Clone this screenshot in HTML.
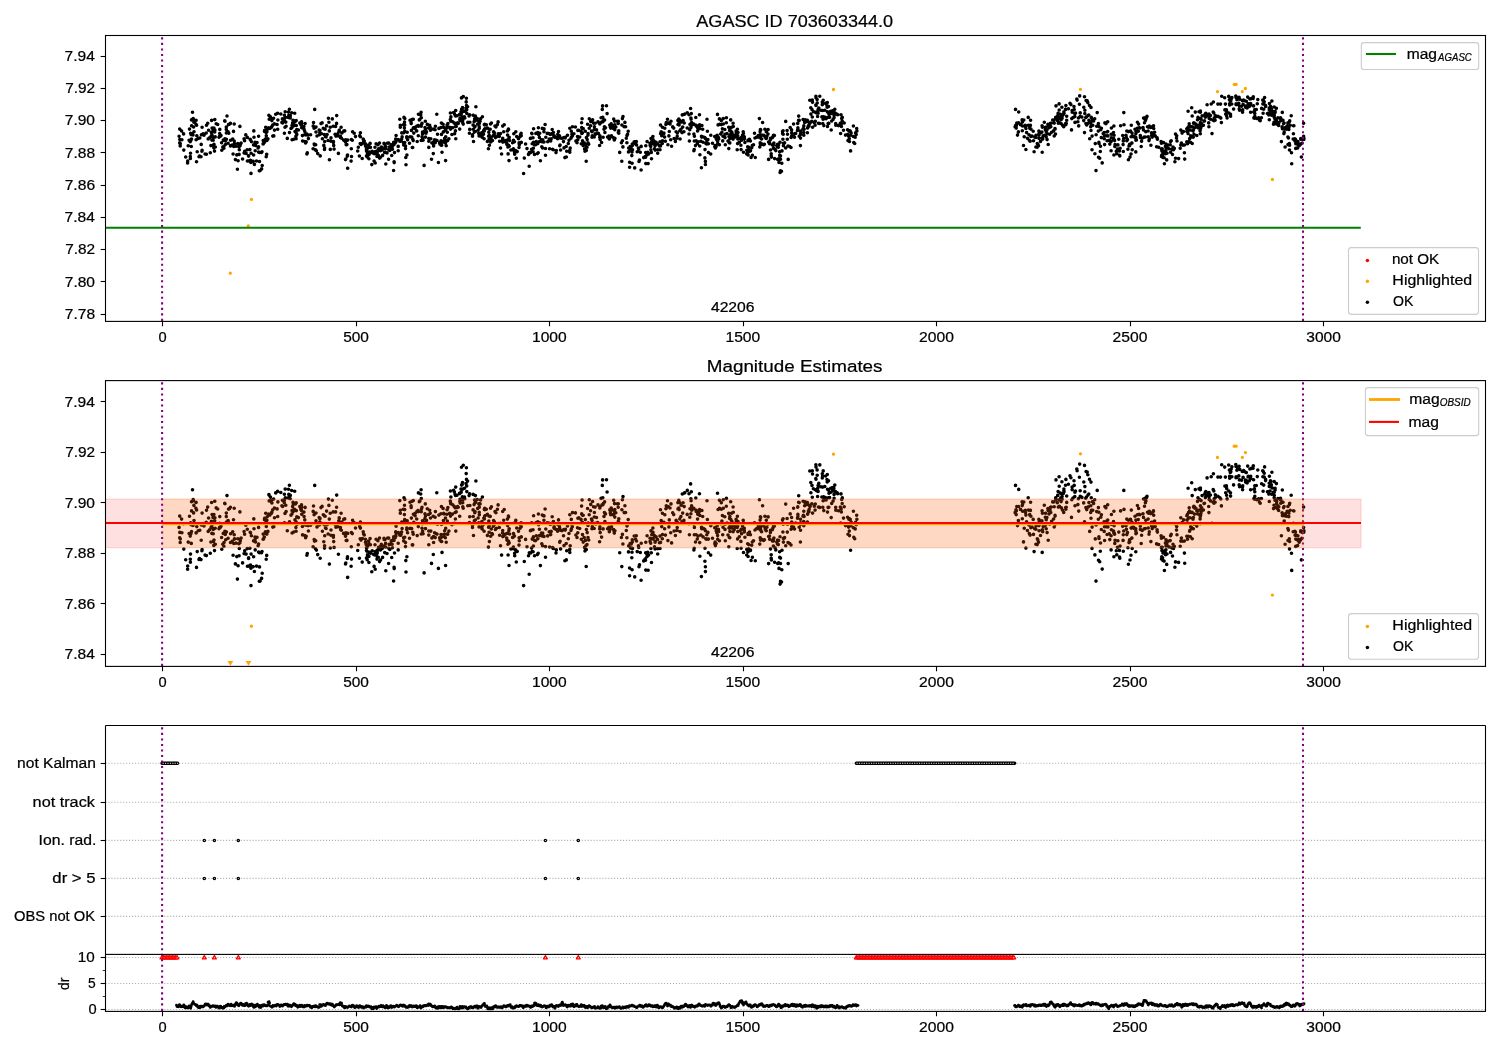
<!DOCTYPE html><html><head><meta charset="utf-8"><style>html,body{margin:0;padding:0;background:#fff;overflow:hidden}svg{display:block;-webkit-font-smoothing:antialiased;will-change:transform}text{font-family:"Liberation Sans", sans-serif;fill:#000;stroke:#000;stroke-width:0.22px}</style></head><body>
<svg width="1500" height="1050" viewBox="0 0 1500 1050">
<rect width="1500" height="1050" fill="#fff"/>
<defs><clipPath id="c1"><rect x="105.5" y="35.5" width="1380.0" height="285.9"/></clipPath></defs>
<g clip-path="url(#c1)">
<path d="M179.1 136.2h0M179.7 142.9h0M179.7 129.1h0M179.8 139.5h0M180.2 145.9h0M180.3 143.7h0M181.6 131h0M181.9 139.7h0M183.6 133.9h0M183.8 150.1h0M185.7 157h0M187.6 163h0M187.7 161h0M188.2 145.7h0M189.1 140.2h0M189.5 129.1h0M190.2 141.8h0M190.3 156.6h0M190.4 158.5h0M190.5 153.3h0M190.6 133.3h0M190.9 140.3h0M191.1 134.6h0M191.3 146.5h0M191.5 119.9h0M191.5 139h0M191.6 125.7h0M192.3 134.1h0M192.5 112.2h0M193 135h0M193.2 118.5h0M193.3 119.2h0M193.6 127h0M193.9 122.2h0M194 131.8h0M195.9 124.1h0M196.1 139.8h0M196.1 120.3h0M196.5 161.8h0M196.6 125.2h0M196.8 135.8h0M197.2 151.7h0M198.2 138.4h0M199 156.7h0M199.5 156.1h0M199.8 138h0M201 156.8h0M201.2 144.4h0M201.4 134.7h0M201.9 151.2h0M202.1 127.2h0M202.1 150.4h0M203.1 133.8h0M204 135.3h0M205.1 154h0M206.2 133h0M206.4 154.3h0M206.5 125.3h0M207.7 123.3h0M208.2 138.9h0M208.6 130.3h0M209.6 137.8h0M210.3 152.8h0M210.9 145.6h0M211.1 136.2h0M211.4 132.4h0M211.6 120.4h0M211.9 134.7h0M211.9 140.1h0M212.1 128.1h0M213 129.9h0M213 136.8h0M213.1 129.9h0M213.2 140.3h0M213.3 137.5h0M213.4 145.3h0M213.8 147.8h0M213.9 128.1h0M214 144.4h0M214.5 151.1h0M214.7 132h0M214.8 119.6h0M214.9 130.1h0M215.2 136.9h0M215.3 147h0M216.2 123.8h0M217.7 124.5h0M219 137.2h0M219.6 136.3h0M219.7 133.6h0M219.8 129.4h0M220.4 136.2h0M221 135.5h0M221.6 142.7h0M221.8 150.2h0M222.8 147h0M223.3 140.1h0M223.9 148.3h0M224 146h0M224.7 120.9h0M224.9 138.8h0M225 121.2h0M225.3 140.8h0M225.7 144.2h0M226.3 129.4h0M226.3 127.1h0M226.4 132.9h0M226.4 139.2h0M227 116h0M227.8 132.6h0M228.1 143.2h0M228.1 131.8h0M228.5 124.6h0M228.8 133.3h0M229.4 124.3h0M230.4 123.4h0M230.5 145.9h0M230.6 140.3h0M232.1 145.1h0M232.7 139.1h0M233.1 154h0M233.5 131.4h0M233.8 146.5h0M234.2 124h0M234.2 141h0M234.4 143.7h0M234.5 143.6h0M235.4 159.6h0M236 146.3h0M236.8 154.9h0M237.4 169.3h0M237.8 143.5h0M238.1 160.8h0M238.9 146.8h0M239.1 154.4h0M239.3 149.8h0M239.9 126.4h0M239.9 146.1h0M240.3 144.8h0M241.1 143.1h0M242.6 159h0M244.1 138.9h0M244.1 153h0M244.6 140.7h0M244.7 151.2h0M245.8 134.9h0M246.1 153.4h0M247.2 149.8h0M247.3 137.4h0M247.4 161h0M248.6 156.1h0M248.6 155.7h0M248.8 161h0M249.9 149.6h0M250.2 139.4h0M250.5 139.8h0M250.5 160.3h0M250.9 162.4h0M251 173.4h0M251.1 153.3h0M251.4 141.6h0M253 161.4h0M253.1 161.4h0M253.6 144.9h0M253.6 155h0M253.8 130.9h0M254 137.2h0M254.4 164.4h0M255 142.4h0M255.2 150.7h0M255.4 143.3h0M255.5 145.5h0M256.5 161h0M257 142.6h0M258.1 147.9h0M258.6 136.2h0M258.6 152.1h0M258.6 146.9h0M259.3 170.7h0M259.4 152.5h0M259.5 161.5h0M260.1 170.6h0M261.5 152.5h0M261.6 168.9h0M262 151.7h0M262.2 165.5h0M263.1 143.9h0M263.2 140.6h0M263.5 143.6h0M264.3 142.5h0M264.5 131.4h0M264.6 130.5h0M265.4 139.1h0M265.7 127.2h0M266.2 156.7h0M266.2 132.6h0M266.3 135.7h0M266.3 140.4h0M266.7 154.2h0M266.9 140.5h0M266.9 131.7h0M267.2 129.5h0M267.9 138.9h0M268.7 127.7h0M268.9 115.2h0M269 115.6h0M269.2 119.3h0M269.9 128.4h0M270.4 116.9h0M270.7 119h0M271.4 119h0M271.5 127.2h0M271.8 126.6h0M271.9 120.6h0M272.7 125.1h0M272.8 136.1h0M273.6 118.2h0M273.8 135.9h0M274.4 123.9h0M274.5 130.1h0M275.7 114.3h0M277.1 124.5h0M277.6 113.3h0M277.7 129.3h0M277.9 120h0M280.8 114h0M281.9 122.4h0M282.4 118.9h0M282.6 122.9h0M284 119.7h0M284.3 120.5h0M284.4 133.3h0M284.4 115.2h0M284.5 118.6h0M285 127.3h0M285.2 111.8h0M285.3 117.4h0M285.8 122.1h0M286.1 126.2h0M287.3 138.4h0M288.3 117.4h0M288.5 112h0M288.8 115.2h0M289.3 116.3h0M289.4 109.3h0M289.5 132.6h0M290.2 118h0M290.3 115.9h0M291 128.5h0M291.7 112.7h0M292 125.5h0M292 127.6h0M292.1 139.8h0M292.6 123h0M293 120.3h0M293.3 121.4h0M293.3 121h0M293.5 121h0M293.8 125.8h0M293.8 139.2h0M294.4 124.7h0M294.6 121.2h0M294.7 113.2h0M295 131.5h0M295.4 121.3h0M295.9 136.4h0M296.1 138.8h0M296.2 132.9h0M296.2 120.6h0M296.3 125.5h0M296.8 129.5h0M296.8 134.4h0M298.4 130h0M299.8 123h0M300.7 124.2h0M301 125h0M301.5 121.9h0M301.5 125.4h0M301.6 123.4h0M301.7 127.8h0M302.4 135.6h0M302.6 141h0M303.9 126.5h0M304.1 129.4h0M304.8 131.5h0M304.9 134.6h0M304.9 141.5h0M305.1 123.5h0M305.6 142.9h0M306 134.9h0M306.2 141.9h0M306.9 154h0M306.9 134.1h0M307.3 152.9h0M308.1 135.1h0M308.4 138.6h0M310.6 134.8h0M313.1 148.7h0M313.2 126.1h0M313.5 122.6h0M314.1 128.2h0M314.2 144.1h0M314.5 145h0M314.7 109.4h0M315.5 149.9h0M315.7 144.8h0M316 132h0M316 127.1h0M316.4 150.8h0M317 136h0M317.7 153.6h0M319.2 130h0M319.4 134.7h0M319.8 132.8h0M319.9 130.7h0M320 130.5h0M320.2 155.9h0M321 123.6h0M321.3 133.6h0M322.1 122.9h0M322.4 138.8h0M323.3 128.2h0M323.8 145.4h0M324.2 134.6h0M324.5 128.9h0M324.5 149.5h0M324.6 148.1h0M324.7 141.6h0M325.1 129.2h0M325.5 136.7h0M326.1 137h0M326.6 125.9h0M327.1 134.6h0M328.1 140.5h0M328.4 118.2h0M328.9 122.2h0M329.3 130.9h0M329.4 159.7h0M330.2 127.2h0M330.3 149.4h0M330.9 141.3h0M331 137.9h0M332.3 118.9h0M333.2 126.3h0M333.4 141.5h0M333.4 142.6h0M333.7 145.4h0M334.1 149.1h0M335.1 134.2h0M335.6 126.4h0M335.9 136.1h0M336.6 123.4h0M336.7 115.6h0M336.9 135.1h0M337.6 134.1h0M338 135.9h0M338.4 153.4h0M338.8 132h0M339.2 130.2h0M339.3 130.4h0M340.4 136.3h0M340.6 137.7h0M341.1 127.2h0M341.3 138.1h0M341.9 132.9h0M343.6 140.1h0M343.8 131.1h0M344.7 130.9h0M345.2 140.6h0M345.5 141.9h0M345.5 159.6h0M345.8 159h0M345.9 139.8h0M346.2 144.7h0M346.9 144.6h0M347.3 156.1h0M347.5 155.1h0M347.6 168.3h0M347.7 140.1h0M347.7 168.2h0M351.1 161.1h0M351.3 148.7h0M351.4 139.6h0M351.5 156.5h0M352.3 140.2h0M352.6 131.7h0M354.2 133.3h0M355.5 136.6h0M357.7 151h0M358.3 147.3h0M359.4 156h0M359.7 135.7h0M360.2 143.6h0M360.4 132.8h0M360.4 136.7h0M361 144.4h0M362.2 158.5h0M362.4 143.4h0M363.2 139.1h0M363.6 140.5h0M364.3 141.1h0M365.4 143.8h0M365.5 145.8h0M366.2 147.2h0M366.5 155.9h0M366.5 151h0M366.5 149.3h0M367 151.5h0M367.1 149h0M367.2 156.9h0M367.5 148h0M367.5 153.8h0M367.6 154.2h0M367.9 147.8h0M368.6 145h0M368.9 154.8h0M368.9 158.7h0M369 146.6h0M369.4 152.1h0M370.1 143.4h0M370.4 147.4h0M370.7 152.8h0M371.8 164.6h0M372.2 151.2h0M373.7 153.5h0M374.1 161.1h0M374.7 153.8h0M374.7 153.2h0M375 147.3h0M375.2 163h0M375.4 151.6h0M375.7 153.1h0M376.1 143.8h0M376.1 153.8h0M376.9 152h0M377 156.5h0M377.2 152.7h0M377.2 151.9h0M377.3 155h0M377.4 150.7h0M377.9 144.8h0M378.3 155.4h0M378.6 148.9h0M379.5 143h0M379.6 158.1h0M380.4 150.7h0M380.5 157.2h0M380.7 148.3h0M381.3 147.1h0M381.8 149.5h0M382 149.9h0M382.6 155.4h0M382.8 149.1h0M383 148.4h0M383.3 148.2h0M384 143.3h0M384.2 144h0M384.7 152.4h0M385 144h0M385.6 146.5h0M385.7 148.8h0M385.8 164h0M387 152.9h0M387.7 143.1h0M388.6 159.3h0M388.7 143.1h0M388.9 149.7h0M389.2 147.1h0M389.8 150.4h0M390.6 147h0M391.3 144.9h0M391.7 155.5h0M392.1 147h0M392.4 149.2h0M393.3 144.1h0M393.6 170.5h0M393.7 142.3h0M394 144.6h0M394.1 161.7h0M394.2 162.6h0M394.5 152.6h0M395.2 142.9h0M395.7 139.1h0M395.9 141.7h0M396.1 135.5h0M396.1 140.4h0M398.2 146.4h0M398.2 150.7h0M398.3 139.6h0M399.8 141.2h0M399.8 119.2h0M399.8 141h0M400.3 125.4h0M400.3 127.2h0M400.8 141.2h0M401.1 140.8h0M401.6 139.3h0M401.8 132.9h0M402.1 136.9h0M403.3 124.7h0M403.6 142.9h0M403.7 144.9h0M403.8 132.8h0M404 117.4h0M404.4 128.1h0M404.5 122.1h0M404.7 142.6h0M404.7 124.9h0M404.7 131.3h0M404.8 118.5h0M405.5 148.6h0M405.5 146h0M405.8 157.5h0M406 164.7h0M406.8 137.8h0M406.8 136.7h0M406.9 155h0M407.2 132.2h0M407.6 139.7h0M409.5 143.2h0M410 120.3h0M410.1 136.9h0M411.1 122.6h0M411.2 123.6h0M411.4 130.4h0M411.7 137h0M412 119.5h0M412.3 119.6h0M412.3 147.5h0M412.7 147.5h0M412.8 139.4h0M413.2 140.6h0M413.3 119.2h0M413.4 127.9h0M413.8 133.1h0M415.1 128.8h0M415.2 127.2h0M416.7 130.9h0M417 126.1h0M417.2 141.5h0M418.1 125.5h0M418.3 135.8h0M418.4 126.2h0M418.4 114.2h0M419.3 119.9h0M419.9 119.3h0M420.7 114.9h0M421.1 112.2h0M421.2 126.3h0M421.2 140.5h0M421.3 117.8h0M421.5 124.6h0M422 136.8h0M422 123.4h0M422.5 133.9h0M422.5 132.1h0M422.6 138.7h0M423.1 140.3h0M423.2 132.8h0M424.1 165.4h0M424.9 130.7h0M425 127.5h0M425.3 121.3h0M425.5 128.9h0M425.5 137.1h0M426 133.2h0M426.5 131.8h0M427.3 124.4h0M428.6 128h0M428.8 147.4h0M428.8 138.6h0M428.8 141.2h0M429.7 125.3h0M430.2 127.2h0M430.5 130.3h0M430.8 138.7h0M431.5 159.2h0M431.9 143h0M433.2 129.1h0M433.3 153.6h0M433.5 142.1h0M433.6 145.9h0M434.6 139.7h0M435.1 129.8h0M435.2 142.8h0M435.4 126.2h0M436.4 140.4h0M436.8 114.2h0M437 140.5h0M437.5 134.3h0M438.4 162.5h0M438.9 128.4h0M439.6 142.9h0M440 144.2h0M440.9 127.6h0M441 140.9h0M441.2 145.3h0M441.4 123h0M441.5 142.5h0M441.5 134.4h0M441.7 145.3h0M442 152.2h0M443.1 124.2h0M443.4 131.9h0M443.7 127.3h0M444 127.6h0M444 140.7h0M444.1 142.2h0M444.7 138.4h0M445.4 142.9h0M445.5 130.3h0M445.6 160.6h0M445.7 136.8h0M446.2 145.7h0M446.9 127.9h0M447 140.6h0M447.1 125h0M447.3 132.2h0M447.7 140.6h0M447.9 123.6h0M448.9 138.7h0M449.6 127.3h0M450.3 119.5h0M450.4 113h0M450.5 129.1h0M450.6 120.2h0M450.7 121.1h0M450.9 116.9h0M451.5 127.8h0M451.9 134.5h0M452.5 127.8h0M452.7 121.8h0M453.6 112.5h0M454.2 122.9h0M454.4 113.7h0M454.6 133.7h0M455.1 115.3h0M455.2 123.7h0M455.2 126.8h0M455.4 130.9h0M455.6 115.9h0M455.7 110.5h0M455.8 138.7h0M456.2 126.4h0M457 115.8h0M457.3 123.6h0M457.6 122.9h0M458.2 123.4h0M459.5 114.5h0M459.7 129.1h0M459.8 114.7h0M459.8 119.7h0M460 118.3h0M460.2 120.7h0M461 111.8h0M461.2 113.9h0M461.5 97.9h0M461.6 109.2h0M462.1 108.8h0M462.2 108.8h0M462.4 116.7h0M462.5 107.6h0M462.7 120.5h0M462.7 118.6h0M462.7 111.8h0M462.8 123.1h0M463.2 124.1h0M463.3 96.6h0M464.4 116.9h0M464.5 111.2h0M464.8 118h0M466 108.2h0M466.2 101.9h0M466.4 98.2h0M466.5 105.6h0M466.7 109.8h0M466.8 113.4h0M467.6 106.7h0M467.8 122.4h0M469.1 116h0M469.4 133.2h0M469.6 114.8h0M469.7 129.4h0M469.9 122.3h0M472.5 134.9h0M472.5 136.3h0M473.1 115.3h0M473.1 125.1h0M473.2 129.3h0M473.2 115.2h0M473.5 141.5h0M474.1 121.7h0M474.3 132.1h0M474.4 121.1h0M474.6 118.8h0M474.8 126.9h0M475 126.2h0M475.3 131.5h0M475.4 116h0M475.5 120.4h0M475.9 106.7h0M477.2 118.6h0M477.7 124.1h0M478.1 130.3h0M478.7 133.4h0M478.8 121.2h0M479.1 136h0M479.2 126.6h0M479.3 123.4h0M479.3 128.2h0M479.4 133.7h0M479.7 121.2h0M480.1 121.2h0M480.6 118.7h0M481.8 136.1h0M481.9 132.6h0M482.1 137.2h0M482.4 116.8h0M482.5 135h0M483.5 134.2h0M483.8 130.4h0M484.1 138.7h0M484.3 124.6h0M484.3 130.9h0M484.6 129.1h0M484.7 124.2h0M484.7 125h0M485.3 128.7h0M486.3 124.7h0M487.4 128h0M487.4 141.4h0M488.4 148.8h0M488.6 136.2h0M488.8 132.2h0M488.9 129h0M489.1 139.3h0M489.2 135.3h0M489.4 145.3h0M490.2 129.3h0M490.5 124h0M490.7 142h0M491.3 137.3h0M491.4 123h0M491.9 140.2h0M492.5 140.6h0M493.3 135.5h0M493.6 131.9h0M494.2 134.6h0M494.4 132.7h0M495 126.1h0M495.4 137.6h0M495.9 126.9h0M496.3 136.9h0M497.4 124.6h0M498.1 121.9h0M498.2 133.9h0M499.3 136.4h0M499.6 141.3h0M500.5 148h0M500.5 133.6h0M501.6 154h0M502.6 139.8h0M502.7 138.2h0M502.7 126.1h0M502.8 142.1h0M503.7 131.7h0M503.8 141.7h0M504.2 124.8h0M505.5 140.6h0M506.7 143.1h0M506.9 144.4h0M507.4 131h0M507.4 140h0M507.6 135.1h0M507.9 147h0M508.1 153.9h0M508.4 129.1h0M508.6 129.6h0M508.6 145.2h0M508.9 138.2h0M509 160.6h0M509.2 137.2h0M509.2 146.3h0M509.6 140.5h0M510.9 150h0M512.6 142.7h0M513.1 142.5h0M513.1 149.9h0M513.4 148.8h0M513.5 140.2h0M513.8 133.7h0M514.4 141.8h0M514.6 152.9h0M514.7 154.3h0M515.6 150.6h0M515.8 131.8h0M516.3 158.3h0M516.7 136.6h0M517.2 151.6h0M518.5 138.7h0M519 147.5h0M519.1 142.9h0M519.3 144.8h0M520.1 136.8h0M520.5 134.7h0M521.1 133.4h0M521.2 135.8h0M521.3 142.4h0M523.6 173.5h0M524.3 158.1h0M525.6 144h0M527 148.6h0M528.5 154.4h0M529.2 166.2h0M529.3 152.5h0M530.4 138.4h0M530.6 152.6h0M530.8 138.2h0M531.6 149.4h0M531.7 133.3h0M532 133.7h0M532.2 143.7h0M532.2 151.5h0M532.9 143.3h0M533 137.7h0M533.1 151.8h0M533.4 142.4h0M533.4 148.2h0M533.6 128.8h0M534.5 154.4h0M534.5 144.7h0M535.6 144.7h0M535.9 133.4h0M536.3 141.6h0M537.4 153.6h0M537.5 133.2h0M537.8 143.6h0M537.8 132.6h0M538.2 152.8h0M538.4 127.7h0M538.6 134.6h0M539.4 137.4h0M539.5 141.5h0M539.7 133.3h0M540.4 160.7h0M541.5 139.9h0M541.8 146.8h0M541.9 141.7h0M542.3 128.4h0M542.6 148h0M542.7 139.8h0M543.5 142h0M543.9 131.7h0M544 142h0M544 128.9h0M545.1 124.5h0M545.5 155.3h0M545.5 148.5h0M545.8 137.3h0M547.2 133.4h0M547.7 141.7h0M548.7 133.5h0M549.2 139h0M549.6 148.8h0M550.2 134.4h0M550.7 140.9h0M551.2 138.8h0M551.8 134h0M552 133.6h0M552.2 129.5h0M552.6 149.2h0M553.2 149.7h0M553.4 132.5h0M553.9 136.5h0M554.2 135.9h0M554.6 137.2h0M556 152.6h0M556.3 150.6h0M556.4 137.6h0M557.1 137.9h0M557.6 138.8h0M557.8 134.4h0M558.5 131.5h0M559.1 137.9h0M559.2 135.5h0M559.6 136.2h0M559.7 145.8h0M560.1 145.1h0M560.6 150h0M561.2 138.2h0M562.1 138.3h0M563.5 141.6h0M564 147.9h0M564 137.6h0M564.9 157.6h0M565.2 138h0M565.4 137.4h0M566.2 146.5h0M566.3 157h0M566.7 151.2h0M567.5 135.3h0M568.3 143.5h0M569 140.2h0M569.8 150.3h0M569.8 152.3h0M569.8 128.3h0M570.2 148h0M571 138.2h0M571.3 131.2h0M571.4 137.2h0M571.9 134.4h0M572.3 135.9h0M572.5 126.8h0M572.6 134h0M573.9 133.8h0M575.4 127h0M575.9 141.1h0M577 142.7h0M577.5 136.5h0M577.8 139.8h0M577.9 130.4h0M578.8 130.2h0M579.7 137h0M581 131.2h0M581.3 143.8h0M581.6 122.7h0M581.7 127.6h0M581.8 133.4h0M582.1 118.8h0M582.3 133h0M582.4 128.4h0M582.5 140.8h0M583.2 145.6h0M583.2 128.6h0M584.2 142.8h0M584.6 149.1h0M585 151.3h0M585.3 131.3h0M585.4 144.6h0M585.9 148h0M586.2 161.3h0M586.3 150.4h0M586.4 137.6h0M587 147.3h0M587.2 139.6h0M587.6 124.2h0M588 135.1h0M588 142.8h0M588.1 133.5h0M588.7 144.3h0M589.2 128.2h0M589.3 118.7h0M590.6 125.7h0M590.7 121.6h0M591.5 131h0M592 137.2h0M592 131.8h0M592.3 135.7h0M592.6 119.7h0M593.5 123.1h0M594.2 137h0M594.3 129.6h0M594.4 126.8h0M595.1 123.3h0M595.2 133.7h0M595.8 134.1h0M596.5 129.9h0M597.7 133.2h0M598 121.9h0M598.5 133.6h0M599.6 145.5h0M599.7 137.2h0M599.8 123.9h0M599.9 135.8h0M600.2 139.6h0M600.3 123h0M601.1 117.8h0M601.6 142.5h0M602 121.9h0M602.3 109.4h0M602.6 105.9h0M602.8 117.4h0M602.9 121.8h0M603.1 137.2h0M603.5 120.8h0M604 129.2h0M604.4 126.8h0M604.6 120h0M604.9 132.5h0M605.5 127.7h0M606.5 105.8h0M607.1 113.6h0M607.6 137.1h0M608.9 136.1h0M609.3 139h0M609.8 125.1h0M610.1 137.6h0M610.3 127h0M610.7 128.1h0M611.2 123.9h0M611.5 135.9h0M611.8 125.1h0M612.8 128.1h0M613.6 137.7h0M613.7 119h0M613.8 127.9h0M614.1 138.9h0M614.3 139.9h0M614.4 126.1h0M614.5 121.1h0M614.8 124.9h0M614.8 138.4h0M614.8 129.7h0M614.9 138.4h0M615.8 127h0M617.2 121.2h0M618.2 123.4h0M618.3 121.2h0M618.3 132.5h0M618.8 130.8h0M618.8 133.2h0M619.7 152.4h0M621.4 142.7h0M621.8 161.3h0M621.9 125h0M622.4 140.8h0M622.4 118.6h0M622.9 146.9h0M623 116.6h0M624.2 126.8h0M624.9 122.4h0M625.6 126.7h0M626.3 138.2h0M626.9 142.8h0M627 135.4h0M627.6 134.2h0M628.2 131.3h0M628.5 151.9h0M628.7 148.1h0M629.6 162.2h0M629.6 167.2h0M630.1 146.6h0M630.6 149.4h0M631.2 146.8h0M631.3 149.4h0M631.8 155.6h0M632 152.1h0M632.1 163.3h0M632.3 145.6h0M632.3 144.1h0M632.5 149.7h0M634.2 141.8h0M634.7 167.9h0M635.6 143.9h0M636.3 141.6h0M636.5 144.9h0M637.2 151.7h0M638.4 148h0M638.7 149.1h0M639 161.5h0M639.5 160.1h0M640.3 152.3h0M641.1 170h0M641.2 146.4h0M643.7 157.6h0M645.1 156.5h0M645.5 157.2h0M645.7 152.5h0M645.8 163.6h0M645.8 145.8h0M646.9 155h0M646.9 153.4h0M647.1 141.6h0M647.7 152.2h0M648.1 163.6h0M648.6 154h0M650 143.2h0M650.1 145.2h0M650.7 146.4h0M650.9 149.8h0M651 138.5h0M651.3 152.4h0M651.5 158.7h0M651.8 141h0M652 140.8h0M652.3 143.5h0M652.9 136.6h0M653 139.5h0M653 143.7h0M654.2 141.3h0M654.5 148.7h0M654.5 142.5h0M654.8 149.2h0M655.1 145.8h0M655.1 150.1h0M655.2 145.2h0M656.1 142.2h0M657.6 144h0M657.7 153.2h0M657.9 149.8h0M659.4 146h0M660 149.7h0M660 141.8h0M660.5 145.9h0M660.5 125h0M660.6 133.6h0M661.2 131.8h0M661.7 135.7h0M662.3 143.5h0M662.4 127.3h0M662.5 140.8h0M663.8 133.6h0M663.9 133.1h0M664.6 137.1h0M664.8 128.2h0M665.4 141.2h0M665.9 124.4h0M666.3 122.5h0M667.5 119.2h0M667.9 144.7h0M668 123.1h0M668.4 123.1h0M668.9 135.9h0M669.3 131.5h0M670 123.9h0M670.7 139.7h0M671 121.3h0M671.6 146.2h0M672.7 126.9h0M673.7 128.1h0M674.1 138.5h0M675.4 141.4h0M676.1 131.8h0M677 138.2h0M677.2 136.3h0M677.3 133h0M677.9 120.4h0M678 124.5h0M678 124.5h0M678.4 120.2h0M678.7 123.9h0M678.8 119h0M679.1 124.9h0M679.6 120.3h0M679.8 130.8h0M680.1 139h0M680.9 129.3h0M681.1 122.1h0M682 132.6h0M682.3 114.9h0M682.7 127.1h0M683.1 120.6h0M683.9 131.8h0M684.2 123h0M684.5 114.2h0M684.8 114.1h0M687.2 128h0M687.3 112.7h0M689 134h0M689 114.7h0M689.4 141h0M689.8 129.8h0M690 124.4h0M690.6 108.5h0M690.9 127.5h0M690.9 118h0M691.1 119.2h0M691.3 113.6h0M691.6 122.6h0M691.7 125.3h0M693.3 124.2h0M693.8 124.1h0M693.8 124.3h0M693.9 134.1h0M693.9 150.7h0M694.2 149.6h0M694.3 141h0M694.4 136.3h0M695.5 145.6h0M695.8 117.5h0M696.1 140.9h0M696.2 125.4h0M696.2 126.1h0M697.3 143.7h0M697.6 131h0M697.7 127.9h0M698.1 141.8h0M698.7 126.7h0M699.2 126.3h0M699.5 114.7h0M699.6 124.8h0M699.7 146h0M699.8 128.6h0M699.9 154.7h0M700.9 141.2h0M701.4 167.7h0M701.5 136.2h0M701.7 137.1h0M701.9 125.5h0M702.7 129.3h0M703.1 142.3h0M703.5 137h0M704.7 137.5h0M704.9 157.9h0M705 149.6h0M705.4 138.4h0M705.4 161.4h0M705.4 164.5h0M705.9 143.6h0M706.6 143.9h0M706.8 141h0M707 119.3h0M707.2 143.7h0M707.4 131.2h0M707.9 139.5h0M708.4 143.7h0M708.4 152.5h0M710.7 154h0M710.8 135.2h0M712.5 143.2h0M714.7 136.5h0M714.8 146.7h0M715.1 145.6h0M715.4 136.6h0M715.4 147.9h0M716.1 146.5h0M716.2 138.4h0M716.3 138.6h0M716.8 139.7h0M717.2 135.2h0M717.4 137.8h0M717.5 114.4h0M717.6 141.5h0M717.7 143.8h0M718.1 124.9h0M718.4 137.5h0M718.7 139h0M719.4 118.9h0M719.4 144.8h0M719.5 124.2h0M720.7 134h0M721.3 120.6h0M721.3 124.6h0M721.9 132.2h0M722.4 128.7h0M722.7 140.9h0M723 136.2h0M723.2 118.6h0M723.3 124h0M724.8 129.5h0M725 137.6h0M725.1 134.3h0M725.3 144.8h0M726.3 122.7h0M726.4 117.8h0M727 133.5h0M728 141.1h0M728.7 127.3h0M728.8 148.6h0M729 136.6h0M729.3 142.7h0M729.6 130.5h0M729.8 142.9h0M729.9 138.8h0M729.9 129.4h0M730.1 135.1h0M730.7 119.9h0M730.9 133.7h0M730.9 131.3h0M731.6 127.2h0M731.8 136.6h0M731.9 132.4h0M733 134.9h0M733.1 139.1h0M733.1 123.3h0M733.3 126.5h0M734.2 137.7h0M735.2 135.9h0M735.9 134.8h0M736.1 131h0M736.3 132.5h0M737.2 136.4h0M737.2 149.7h0M737.4 129.2h0M737.6 143.6h0M737.7 135.5h0M737.8 138.9h0M738 132.5h0M739.3 142.3h0M740.2 138.4h0M740.9 145.2h0M741.1 149.6h0M741.2 137.6h0M741.6 140.3h0M742.5 135.4h0M743.2 131.8h0M743.4 133.4h0M743.5 152.3h0M744.3 138.3h0M744.3 139.1h0M744.3 136.9h0M744.9 142.5h0M746.7 153.9h0M746.8 150.3h0M747.7 146.7h0M747.8 152h0M748 140.8h0M748.1 140.1h0M748.1 154.9h0M748.6 149.9h0M748.7 147.3h0M749 151.4h0M749.5 139.3h0M750.4 151h0M750.4 141h0M750.5 150.8h0M751.1 157.4h0M751.7 147.7h0M752.3 145.6h0M752.4 155.3h0M753.5 144.8h0M754.5 133.3h0M755 138h0M755.3 157.5h0M756.4 137.2h0M758.3 135.6h0M758.6 137.1h0M759.4 118.6h0M759.8 146.9h0M760.1 134.7h0M760.1 131.6h0M760.2 142.9h0M760.4 129.6h0M760.5 136.7h0M760.5 144.4h0M760.7 129.9h0M760.8 138.2h0M761.6 139h0M762 135.1h0M762.1 144.1h0M762.6 122.5h0M763.6 144.7h0M763.9 135.4h0M764.4 144.2h0M764.9 129.2h0M765.2 137.3h0M766.1 138.5h0M766.3 131.7h0M766.3 138.4h0M766.9 136.2h0M768 134.1h0M768.1 129.6h0M768.6 159.4h0M768.6 142.1h0M769.5 141.8h0M769.6 143.8h0M770.4 139.5h0M770.5 150h0M770.5 138.2h0M771.2 153.7h0M771.2 155.9h0M771.4 157.1h0M772.3 137.8h0M772.4 144.9h0M772.9 136.7h0M773.1 144.9h0M773.1 144h0M773.4 148.2h0M773.5 135.3h0M773.6 144.9h0M773.9 143.1h0M774.4 135.5h0M774.6 158.6h0M775.1 149.4h0M775.8 150.6h0M776.9 145.8h0M777.4 146.9h0M777.6 144.3h0M777.7 159.4h0M778.3 147.3h0M778.6 158.9h0M778.6 144.7h0M779 162.4h0M779.6 151.8h0M779.7 155.4h0M780 142.3h0M780.1 172.5h0M780.5 170.8h0M780.5 159.3h0M780.5 155.9h0M781.5 171.2h0M781.8 163.3h0M782 150.9h0M782.5 131.6h0M782.6 133.6h0M782.9 139.2h0M783.1 130.7h0M783.2 134.2h0M783.4 143.3h0M783.4 145.7h0M784.1 143.2h0M784.6 142.8h0M785.7 121.4h0M785.7 148h0M787.1 130.6h0M787.3 139.3h0M787.5 134.2h0M788 146h0M788.2 159.4h0M789.7 146.6h0M790.2 127.6h0M791 147.5h0M791.1 137.5h0M791.6 129.9h0M791.7 132.9h0M791.8 135.8h0M793.5 136.1h0M793.6 124h0M794.5 137.3h0M795.1 133.6h0M795.7 133.5h0M797.5 130.4h0M797.7 123.4h0M797.8 123.2h0M797.9 129.1h0M797.9 127.9h0M798.6 120.2h0M798.7 116.1h0M799.2 120.4h0M799.2 136.2h0M800.4 145.6h0M800.5 138.1h0M800.5 134.4h0M800.5 131.1h0M800.6 133.3h0M803 129.1h0M803.1 119.6h0M803.4 128.5h0M803.7 132.5h0M803.8 135.3h0M803.8 125.9h0M804.1 129.3h0M804.6 122.4h0M805.2 120.7h0M805.2 119.8h0M806.3 121.7h0M806.8 120.7h0M807.4 132.8h0M807.4 120.4h0M807.6 127.9h0M807.7 127.6h0M808.4 125.8h0M809 126.3h0M809.2 122.2h0M809.2 124.6h0M809.8 100.2h0M810.1 123h0M810.8 107.7h0M810.9 114.1h0M811.8 121.2h0M812 109.5h0M812.3 100h0M812.3 117h0M812.5 102.2h0M812.6 127.2h0M813.4 111.6h0M814.3 122.7h0M815.1 125.2h0M815.3 121.3h0M815.4 112.2h0M815.8 105.1h0M815.9 96.3h0M816 105.5h0M816 97.7h0M816.6 112.4h0M816.6 112.9h0M817.1 99.6h0M817.2 103h0M817.6 116.5h0M817.7 111.4h0M818.1 109.5h0M818.1 113.3h0M818.4 123.2h0M818.8 108.1h0M819.6 123.5h0M819.8 96.3h0M820.9 110.3h0M821.9 116.9h0M822.3 104.7h0M822.3 102h0M822.6 103.6h0M822.7 110.5h0M822.8 123.5h0M823.1 119.3h0M823.2 100.2h0M823.3 117h0M823.6 116.8h0M823.6 117.1h0M823.8 125.6h0M824.2 118.6h0M824.8 110.2h0M825.4 117.2h0M825.6 103.4h0M826.1 118.7h0M827 105.7h0M827.2 107.2h0M827.3 102.5h0M827.5 111.9h0M827.5 126.5h0M828.1 123.5h0M828.3 112.4h0M828.4 117.3h0M828.5 106.5h0M828.8 123.4h0M829 114.4h0M829.6 117.2h0M830.7 111.3h0M830.7 113.8h0M831.2 130h0M831.7 121h0M832.5 110.9h0M832.7 113h0M833.1 119.4h0M833.3 112.6h0M833.9 111.3h0M834.1 117.6h0M834.1 115.2h0M834.8 109.3h0M835.4 113.4h0M835.7 123.5h0M835.8 125.3h0M837.2 114.2h0M837.6 114.8h0M838.4 125.6h0M840.3 123.3h0M840.6 133.5h0M841 114.8h0M841.1 124.4h0M841.4 126.4h0M841.7 118.4h0M842.2 121h0M842.3 117.4h0M843.5 130.3h0M844.2 123h0M845.5 135.1h0M847.6 129.8h0M847.7 134.5h0M848 140.6h0M848.6 136.1h0M848.9 131.1h0M849.3 138.6h0M849.5 130.8h0M849.5 141.5h0M850.2 131h0M850.6 150.9h0M850.9 135.2h0M851.1 132.9h0M853.4 126h0M853.4 136.5h0M853.8 142.6h0M854.7 143.5h0M855.2 137.2h0M855.6 132.9h0M856.2 134.6h0M856.7 128.5h0M856.9 131.1h0M1015.2 126.9h0M1015.2 126.5h0M1015.5 109.4h0M1015.9 125.1h0M1016.2 128.1h0M1016.4 125.6h0M1016.8 123h0M1017.5 135.1h0M1018.4 131.9h0M1018.5 122.9h0M1018.7 112h0M1020.5 124.8h0M1022.1 119.9h0M1022.2 122.3h0M1022.3 130.8h0M1022.5 121.7h0M1022.6 126h0M1023.5 145.5h0M1023.8 120h0M1024.2 136.8h0M1024.7 126.1h0M1025.3 125.3h0M1025.5 126.8h0M1025.9 149.5h0M1025.9 128.4h0M1026.6 132.6h0M1027.4 138.3h0M1028.2 117.4h0M1028.5 125.2h0M1029 134.7h0M1029.3 140.3h0M1029.7 128h0M1029.9 128.5h0M1030.1 141.2h0M1030.4 125.4h0M1030.6 120.2h0M1030.9 136.4h0M1030.9 129.1h0M1032 136.1h0M1033.2 131.2h0M1033.5 140.7h0M1034.1 151.7h0M1034.7 137.1h0M1035.8 137.4h0M1035.9 147h0M1036 135.4h0M1037.2 147.3h0M1037.3 143.6h0M1037.9 144.3h0M1038.5 145.8h0M1038.9 134.1h0M1038.9 131.1h0M1039 135.1h0M1039.1 138.4h0M1039.2 132.8h0M1040.5 141.4h0M1041.1 132.7h0M1041.9 132.1h0M1042.1 125.7h0M1042.2 152.2h0M1042.3 137.7h0M1042.4 127.3h0M1042.7 139.1h0M1043.2 135.8h0M1044.3 122.2h0M1045.2 135h0M1045.3 129.8h0M1045.5 127.2h0M1046.2 137.1h0M1046.2 131.4h0M1046.9 129.9h0M1047.1 139.6h0M1047.4 133.8h0M1047.9 124.2h0M1048.1 125.6h0M1048.2 144.5h0M1048.2 125h0M1049 127.7h0M1049.7 134.2h0M1050.1 125.4h0M1050.4 123.4h0M1050.8 126.8h0M1051.1 123.3h0M1051.6 132.3h0M1052.7 120h0M1053.6 130.9h0M1053.7 120h0M1054.2 123.1h0M1054.2 136h0M1055 128.6h0M1055.1 129h0M1055.5 134.1h0M1055.7 117.4h0M1055.8 118.6h0M1056 105.9h0M1057.3 120.5h0M1057.7 115.9h0M1058.1 113.4h0M1058.3 123.3h0M1059.1 118.6h0M1059.1 103.9h0M1059.2 110h0M1059.4 122.9h0M1060.4 114.3h0M1060.8 117.4h0M1061 114.6h0M1061.1 119.8h0M1061.3 123.7h0M1061.9 107.2h0M1062.1 116.5h0M1062.1 118.3h0M1062.5 125.2h0M1063.3 114.6h0M1063.7 126.7h0M1063.9 111.7h0M1063.9 112.8h0M1064 113.5h0M1065.5 109.4h0M1065.6 123.6h0M1065.9 105.6h0M1065.9 124.6h0M1066.2 123.4h0M1066.7 120.3h0M1066.7 116.2h0M1068.4 108.7h0M1070 103.3h0M1070.9 104.6h0M1071.5 129.9h0M1071.8 118.6h0M1072.1 110.5h0M1072.2 112.2h0M1073 117.5h0M1074 106.5h0M1074.2 109.5h0M1074.8 116.6h0M1074.9 113.8h0M1075 122.4h0M1075.5 113h0M1076.8 99h0M1077.1 100.1h0M1077.9 121.7h0M1078.4 118h0M1078.7 125.9h0M1079.4 104.3h0M1079.7 95.9h0M1080.2 112.9h0M1080.2 116.5h0M1081.9 117.1h0M1083.7 120.6h0M1083.8 107.2h0M1084.5 96.7h0M1084.5 132.6h0M1084.8 113.5h0M1084.9 110.2h0M1085.7 117.6h0M1085.9 123.6h0M1086.1 100.6h0M1086.4 116.9h0M1086.7 124.9h0M1087.2 100.9h0M1087.8 102.6h0M1088 115.6h0M1088.3 123.2h0M1088.8 115h0M1088.9 120.4h0M1089.5 105.5h0M1089.7 138.8h0M1090.7 126.8h0M1090.8 122.4h0M1091 107.4h0M1091 130.5h0M1091.3 117.4h0M1091.4 125.4h0M1092 149.7h0M1092.1 136.1h0M1092.4 119.9h0M1092.8 125.3h0M1093.6 120.9h0M1094.7 118.7h0M1094.9 153.8h0M1095.3 143.6h0M1096 170.6h0M1096.1 134.7h0M1096.7 126.2h0M1097.2 112.6h0M1098.3 131.1h0M1098.4 123.6h0M1098.5 157.3h0M1098.9 142.4h0M1098.9 126.6h0M1099 143.4h0M1099.7 158.2h0M1100.3 151.5h0M1100.5 146.3h0M1100.8 129.7h0M1101.3 137.6h0M1101.4 128.2h0M1102.2 162.9h0M1103.2 133.6h0M1104.1 132.6h0M1104.2 138.8h0M1104.5 135.8h0M1104.6 144.6h0M1104.9 122.9h0M1105.9 123.7h0M1106.2 135.8h0M1107 132h0M1107.1 140.8h0M1107.7 131.5h0M1107.7 121.8h0M1107.9 135.9h0M1109.3 140.4h0M1109.8 144.1h0M1111.1 150.7h0M1111.1 141.6h0M1111.2 134.3h0M1111.4 137.8h0M1111.4 128h0M1113.5 132.6h0M1113.6 138.6h0M1113.8 139.7h0M1113.9 155h0M1113.9 126h0M1114.1 135.3h0M1114.3 140h0M1114.6 140.6h0M1114.8 146.5h0M1115.1 144.5h0M1116.3 151.2h0M1116.8 153.8h0M1117.4 149h0M1117.9 144.9h0M1118.8 139.3h0M1119.4 150.9h0M1119.5 155.2h0M1119.8 155.9h0M1120.1 148.2h0M1120.6 125.8h0M1122.7 135.5h0M1123.1 144.6h0M1123.3 151.5h0M1123.3 140.9h0M1123.7 138.5h0M1123.8 112.6h0M1124 124.8h0M1126 135.3h0M1126.4 137.5h0M1126.8 131h0M1126.8 140.8h0M1127.5 139.6h0M1127.9 149.2h0M1128.3 131.6h0M1128.4 159.8h0M1129 146h0M1129.4 145.8h0M1129.5 144.8h0M1129.6 144.2h0M1129.7 145.6h0M1130 157.1h0M1130.5 131.1h0M1130.7 131.5h0M1131 154h0M1131.1 136.7h0M1131.3 125.2h0M1131.8 143.1h0M1131.9 143.1h0M1132 133.1h0M1132.2 149.8h0M1132.2 136.2h0M1133.5 136.8h0M1133.5 136.7h0M1133.7 136.2h0M1135 129.2h0M1135.8 138.6h0M1135.8 137.2h0M1135.8 151.9h0M1135.9 131.6h0M1135.9 133.6h0M1135.9 140.3h0M1136.4 139.9h0M1137.3 128.2h0M1137.4 122.3h0M1138.3 131.3h0M1138.6 124.1h0M1139.1 127.8h0M1139.9 128.1h0M1140.3 135.5h0M1140.4 137.6h0M1141.2 146.5h0M1141.6 141.3h0M1142.2 138.2h0M1143 127.5h0M1143.5 129.9h0M1143.6 118.1h0M1144.2 137.1h0M1144.5 122.8h0M1145 117.7h0M1145.2 137h0M1145.4 120.5h0M1145.8 131.7h0M1145.9 119.3h0M1146.6 117.2h0M1147 116.4h0M1147.5 126.7h0M1148.1 131h0M1148.2 136.7h0M1148.6 127.3h0M1149 140.6h0M1149.3 126h0M1149.3 139.1h0M1150.7 127.5h0M1150.7 127.1h0M1150.9 145.3h0M1151.5 132.9h0M1151.6 135.4h0M1152.2 137.1h0M1152.8 135.7h0M1152.9 126.5h0M1153.5 125.7h0M1153.6 132.9h0M1153.7 128.5h0M1154.6 132.2h0M1155 135.9h0M1155.2 135.7h0M1156.6 146.8h0M1157.1 137.7h0M1157.2 138.8h0M1157.4 139.3h0M1158.7 147.2h0M1161.1 141.6h0M1161.4 149h0M1161.4 143.2h0M1161.5 156.4h0M1161.8 155.1h0M1161.9 151.1h0M1162.2 148.9h0M1162.6 155.6h0M1162.9 157.4h0M1163 152.6h0M1163.5 142.6h0M1164.1 157.8h0M1164.4 163.8h0M1164.8 151.3h0M1165.4 152.3h0M1165.4 146.3h0M1165.6 153.8h0M1165.9 150.6h0M1166 144.1h0M1166 148.1h0M1166.2 144.7h0M1166.7 159.9h0M1166.9 147.1h0M1167 153.3h0M1168.2 145.1h0M1169 148.7h0M1170.2 144.7h0M1170.6 141.6h0M1170.6 152.2h0M1171.2 140.7h0M1172 149.4h0M1172.5 154.5h0M1173 147.1h0M1173.5 149.7h0M1174.3 148.4h0M1174.9 161.7h0M1175.5 158.3h0M1175.5 134.1h0M1176.5 138h0M1176.7 135.8h0M1177 141h0M1178.6 158.6h0M1180.2 148.3h0M1180.8 130.1h0M1180.8 145h0M1181.4 143h0M1182.1 133.1h0M1182.9 145.1h0M1183.5 131.5h0M1184.4 145h0M1184.4 152.7h0M1184.7 159.1h0M1186.8 141.9h0M1186.8 128.9h0M1187 131.5h0M1187.5 128h0M1187.5 143.8h0M1188 133.6h0M1188.1 141.9h0M1188.1 111.3h0M1188.7 126.6h0M1188.7 130.3h0M1189.2 123.7h0M1189.4 126h0M1189.6 138.7h0M1189.7 126.6h0M1189.9 138.2h0M1190 130.1h0M1190.4 142.3h0M1190.7 135.9h0M1191.3 136.2h0M1191.5 126.7h0M1191.7 107.8h0M1192.1 126.7h0M1192.2 116h0M1192.2 143.5h0M1192.5 137h0M1193 131h0M1193.3 137.1h0M1193.4 130h0M1193.5 123.3h0M1193.8 122.8h0M1194 134.2h0M1194.4 123.1h0M1194.5 127.8h0M1194.6 123.9h0M1195.3 112.1h0M1195.9 124h0M1196.8 125.7h0M1196.8 135.5h0M1197.5 119.7h0M1197.7 127.6h0M1198 117.4h0M1198.7 125.4h0M1198.7 127.9h0M1199 111.7h0M1199.5 118.5h0M1200.1 130.8h0M1200.2 127.7h0M1200.3 133.8h0M1200.3 129.2h0M1200.4 112.2h0M1200.4 111.1h0M1200.4 122.5h0M1200.6 128.5h0M1200.9 127.5h0M1201.1 124.4h0M1201.1 119.2h0M1201.4 125.9h0M1201.7 123.8h0M1202.1 115.9h0M1203.4 125.2h0M1204 121.1h0M1204.5 120.9h0M1204.9 114.8h0M1205.4 113.8h0M1205.4 117.3h0M1205.8 113.4h0M1205.9 115.8h0M1206.2 116.1h0M1207.1 104.7h0M1208.5 114.5h0M1208.7 122.9h0M1208.9 126.8h0M1208.9 115.5h0M1209 116.2h0M1209 114h0M1209.1 116.7h0M1209.2 118.4h0M1210.4 115.6h0M1210.5 119.3h0M1211.2 104h0M1212 133.6h0M1213.1 120.3h0M1213.2 112.1h0M1213.4 102h0M1213.8 113h0M1213.9 119.8h0M1214 120.8h0M1214.2 118h0M1215.1 120.2h0M1215.2 117.3h0M1215.3 115.5h0M1217.9 104.1h0M1218 116.4h0M1219.9 117.3h0M1220.5 104.1h0M1220.8 118.1h0M1221.4 122.6h0M1221.7 96.2h0M1224.7 97.8h0M1224.9 109.9h0M1225.4 104.1h0M1225.7 114.1h0M1226.4 109.8h0M1226.6 115.7h0M1226.7 111.5h0M1227.1 118h0M1228.7 96.4h0M1228.8 113h0M1229.4 99.7h0M1229.6 103.7h0M1229.7 104.9h0M1230.3 101.1h0M1230.5 114.2h0M1230.6 101h0M1230.6 116.3h0M1230.8 100.7h0M1231.2 99h0M1231.8 104h0M1231.9 97.5h0M1233.6 109.1h0M1235.8 96.1h0M1236 104.6h0M1236 97.4h0M1236.1 103.9h0M1236.7 104.4h0M1236.9 99.7h0M1237.5 99.2h0M1238.8 103.4h0M1239.1 97.2h0M1239.2 109.1h0M1239.4 106h0M1239.6 110.3h0M1239.9 99.3h0M1241.6 106.2h0M1242.3 100.6h0M1242.5 110.4h0M1242.6 112.2h0M1242.7 109.7h0M1243.1 104.4h0M1243.6 100h0M1244.7 100.7h0M1245.5 106h0M1245.6 107.3h0M1246.3 101.3h0M1246.6 106.5h0M1247.1 107.9h0M1247.7 97.1h0M1248.1 104h0M1248.4 103.7h0M1249.3 106.5h0M1249.9 99h0M1250.6 112.2h0M1250.7 103.6h0M1250.7 105.1h0M1250.8 105.1h0M1251.4 98.6h0M1253.1 98.5h0M1253.3 96.9h0M1253.5 105.9h0M1253.6 105.8h0M1253.9 117.9h0M1253.9 111.9h0M1254.4 111.7h0M1254.4 118.2h0M1254.8 109.6h0M1254.8 116.4h0M1254.8 113.5h0M1256.3 109.5h0M1256.7 118.5h0M1257.3 103.8h0M1257.8 99.6h0M1258.7 117.9h0M1259.4 120.1h0M1260.2 120.8h0M1261.4 117.8h0M1261.6 108.4h0M1262.7 100.1h0M1262.9 103.9h0M1263.1 113.2h0M1263.3 100.6h0M1263.7 109.3h0M1264.2 104.2h0M1264.2 101.7h0M1264.6 97.6h0M1265.6 106.4h0M1265.6 105.5h0M1267.4 113.5h0M1267.7 113.6h0M1268.8 115h0M1269.2 108.1h0M1269.3 119.7h0M1269.3 110.1h0M1269.4 103.6h0M1270 113h0M1270 110.2h0M1270.5 106.4h0M1270.7 107.1h0M1270.8 106.9h0M1271.4 109h0M1271.7 115.2h0M1271.9 101h0M1272.2 111.1h0M1273.3 113.9h0M1273.5 124.3h0M1274 122.2h0M1274.2 107h0M1274.2 117.3h0M1274.3 115.9h0M1274.3 113.8h0M1275 119h0M1275.1 111.2h0M1275.1 112.4h0M1275.3 123.6h0M1276.4 108.3h0M1276.6 119.5h0M1276.6 121.2h0M1276.7 119.8h0M1277.3 124.2h0M1277.9 117.8h0M1277.9 122.6h0M1278.4 125.2h0M1278.6 125.5h0M1278.8 123.1h0M1280.4 118.6h0M1280.5 117.7h0M1280.8 120.8h0M1280.9 118.8h0M1281.4 141.6h0M1282.1 126.9h0M1282.3 112.4h0M1282.4 128.7h0M1283 120.2h0M1283 128.6h0M1283.6 123.6h0M1283.9 133.6h0M1284.1 123h0M1284.2 132.2h0M1284.6 128.6h0M1284.6 128.8h0M1285.1 147h0M1285.4 127.5h0M1286.3 129.2h0M1287.1 126h0M1287.9 122.9h0M1287.9 137h0M1288 144.6h0M1288.4 138h0M1288.5 129.3h0M1288.8 129.4h0M1288.9 127.3h0M1289.3 143.6h0M1289.4 121.7h0M1289.5 150h0M1289.6 145.3h0M1289.7 120.9h0M1290.2 125.3h0M1291.2 115.8h0M1291.5 152.8h0M1291.7 163.7h0M1293.2 139.1h0M1293.4 133.7h0M1293.5 125.7h0M1293.9 125.8h0M1294.9 138.9h0M1295.1 141.3h0M1295.4 139.2h0M1295.7 148.4h0M1295.8 143.7h0M1296.7 141.3h0M1297.6 147.9h0M1297.8 144.5h0M1297.9 141.6h0M1298.7 143.9h0M1299.2 145.8h0M1300.6 144.2h0M1300.7 139.1h0M1300.8 138.5h0M1301.4 157h0M1301.8 143.3h0M1302.6 139.6h0M1303.6 136.4h0M1303.6 123.3h0M1303.8 139.4h0M1303.9 138.4h0" stroke="#000" stroke-width="3.6" stroke-linecap="round" fill="none"/>
<path d="M251.4 199.4h0M248.3 225.8h0M230.3 273.2h0M833.5 89.5h0M1080.5 89.3h0M1217.5 91.6h0M1234.2 84.4h0M1236.1 84.4h0M1242.3 91.6h0M1245.4 88.5h0M1272.4 179.5h0" stroke="#ffa500" stroke-width="3.3" stroke-linecap="round" fill="none"/>
<path d="M105.5 227.8H1360.8" stroke="#008000" stroke-width="2.08"/>
<path d="M162.1 321.4V35.5" stroke="#800080" stroke-width="2.08" stroke-dasharray="2.08 3.44" stroke-dashoffset="-0.45"/><path d="M1303 321.4V35.5" stroke="#800080" stroke-width="2.08" stroke-dasharray="2.08 3.44" stroke-dashoffset="-0.45"/>
</g>
<rect x="105.5" y="35.5" width="1380" height="285.9" fill="none" stroke="#000" stroke-width="1.1"/>
<path d="M162.5 321.4v4.86" stroke="#000" stroke-width="1.1"/><text x="158.53" y="341.70" font-size="13.89" textLength="8.15" lengthAdjust="spacingAndGlyphs">0</text><path d="M356.5 321.4v4.86" stroke="#000" stroke-width="1.1"/><text x="343.22" y="341.70" font-size="13.89" textLength="25.74" lengthAdjust="spacingAndGlyphs">500</text><path d="M549.5 321.4v4.86" stroke="#000" stroke-width="1.1"/><text x="531.96" y="341.70" font-size="13.89" textLength="34.71" lengthAdjust="spacingAndGlyphs">1000</text><path d="M743.5 321.4v4.86" stroke="#000" stroke-width="1.1"/><text x="725.46" y="341.70" font-size="13.89" textLength="34.71" lengthAdjust="spacingAndGlyphs">1500</text><path d="M936.5 321.4v4.86" stroke="#000" stroke-width="1.1"/><text x="919.11" y="341.70" font-size="13.89" textLength="34.82" lengthAdjust="spacingAndGlyphs">2000</text><path d="M1130.5 321.4v4.86" stroke="#000" stroke-width="1.1"/><text x="1112.61" y="341.70" font-size="13.89" textLength="34.82" lengthAdjust="spacingAndGlyphs">2500</text><path d="M1323.5 321.4v4.86" stroke="#000" stroke-width="1.1"/><text x="1306.32" y="341.70" font-size="13.89" textLength="34.58" lengthAdjust="spacingAndGlyphs">3000</text>
<path d="M105.5 314.5h-4.86" stroke="#000" stroke-width="1.1"/><text x="64.77" y="318.80" font-size="13.89" textLength="30.30" lengthAdjust="spacingAndGlyphs">7.78</text><path d="M105.5 281.5h-4.86" stroke="#000" stroke-width="1.1"/><text x="64.74" y="286.55" font-size="13.89" textLength="30.27" lengthAdjust="spacingAndGlyphs">7.80</text><path d="M105.5 249.5h-4.86" stroke="#000" stroke-width="1.1"/><text x="65.22" y="254.30" font-size="13.89" textLength="29.95" lengthAdjust="spacingAndGlyphs">7.82</text><path d="M105.5 217.5h-4.86" stroke="#000" stroke-width="1.1"/><text x="64.61" y="222.05" font-size="13.89" textLength="30.25" lengthAdjust="spacingAndGlyphs">7.84</text><path d="M105.5 185.5h-4.86" stroke="#000" stroke-width="1.1"/><text x="64.70" y="189.80" font-size="13.89" textLength="30.39" lengthAdjust="spacingAndGlyphs">7.86</text><path d="M105.5 152.5h-4.86" stroke="#000" stroke-width="1.1"/><text x="64.77" y="157.55" font-size="13.89" textLength="30.30" lengthAdjust="spacingAndGlyphs">7.88</text><path d="M105.5 120.5h-4.86" stroke="#000" stroke-width="1.1"/><text x="64.74" y="125.30" font-size="13.89" textLength="30.27" lengthAdjust="spacingAndGlyphs">7.90</text><path d="M105.5 88.5h-4.86" stroke="#000" stroke-width="1.1"/><text x="65.22" y="93.05" font-size="13.89" textLength="29.95" lengthAdjust="spacingAndGlyphs">7.92</text><path d="M105.5 56.5h-4.86" stroke="#000" stroke-width="1.1"/><text x="64.61" y="60.80" font-size="13.89" textLength="30.25" lengthAdjust="spacingAndGlyphs">7.94</text>
<text x="696.30" y="27.00" font-size="16.67" textLength="196.86" lengthAdjust="spacingAndGlyphs">AGASC ID 703603344.0</text>
<text x="710.92" y="312.00" font-size="13.89" textLength="43.68" lengthAdjust="spacingAndGlyphs">42206</text>
<rect x="1361.3" y="42.6" width="117.4" height="26.9" rx="2.8" fill="#fff" fill-opacity="0.8" stroke="#cccccc" stroke-width="1.1"/>
<path d="M1365.9 54H1396" stroke="#008000" stroke-width="2.08"/>
<text x="1406.67" y="58.80" font-size="13.89" textLength="30.37" lengthAdjust="spacingAndGlyphs">mag</text>
<text x="1438.07" y="61.00" font-size="10.3" textLength="33.74" lengthAdjust="spacingAndGlyphs" font-style="italic">AGASC</text>
<rect x="1348.5" y="247.6" width="130" height="66.8" rx="2.8" fill="#fff" fill-opacity="0.8" stroke="#cccccc" stroke-width="1.1"/>
<path d="M1367.4 260.4h0" stroke="#ff0000" stroke-width="3.5" stroke-linecap="round" fill="none"/>
<path d="M1367.4 281.3h0" stroke="#ffa500" stroke-width="3.5" stroke-linecap="round" fill="none"/>
<path d="M1367.4 302.2h0" stroke="#000" stroke-width="3.5" stroke-linecap="round" fill="none"/>
<text x="1391.90" y="263.80" font-size="13.89" textLength="47.40" lengthAdjust="spacingAndGlyphs">not OK</text>
<text x="1392.39" y="285.00" font-size="13.89" textLength="79.79" lengthAdjust="spacingAndGlyphs">Highlighted</text>
<text x="1393.04" y="305.70" font-size="13.89" textLength="20.36" lengthAdjust="spacingAndGlyphs">OK</text>
<defs><clipPath id="c2"><rect x="105.5" y="380.6" width="1380.0" height="285.79999999999995"/></clipPath></defs>
<g clip-path="url(#c2)">
<path d="M179.1 527.4h0M179.7 537.8h0M179.7 516.1h0M179.8 532.4h0M180.2 542.5h0M180.3 539h0M181.6 519.1h0M181.9 532.7h0M183.6 523.7h0M183.8 549.1h0M185.7 559.8h0M187.6 569.3h0M187.7 566h0M188.2 542.1h0M189.1 533.6h0M189.5 516.2h0M190.2 536.1h0M190.3 559.3h0M190.4 562.2h0M190.5 554.1h0M190.6 522.8h0M190.9 533.7h0M191.1 524.8h0M191.3 543.4h0M191.5 501.7h0M191.5 531.6h0M191.6 510.9h0M192.3 524.1h0M192.5 489.7h0M193 525.4h0M193.2 499.5h0M193.3 500.7h0M193.6 512.9h0M193.9 505.4h0M194 520.5h0M195.9 508.3h0M196.1 532.9h0M196.1 502.4h0M196.5 567.4h0M196.6 510h0M196.8 526.6h0M197.2 551.6h0M198.2 530.7h0M199 559.4h0M199.5 558.5h0M199.8 530.2h0M201 559.6h0M201.2 540.2h0M201.4 524.9h0M201.9 550.8h0M202.1 513.1h0M202.1 549.5h0M203.1 523.5h0M204 525.9h0M205.1 555.1h0M206.2 522.3h0M206.4 555.6h0M206.5 510.3h0M207.7 507.1h0M208.2 531.4h0M208.6 518h0M209.6 529.7h0M210.3 553.2h0M210.9 542h0M211.1 527.3h0M211.4 521.3h0M211.6 502.5h0M211.9 524.9h0M211.9 533.4h0M212.1 514.6h0M213 517.4h0M213 528.2h0M213.1 517.3h0M213.2 533.7h0M213.3 529.4h0M213.4 541.6h0M213.8 545.4h0M213.9 514.5h0M214 540.1h0M214.5 550.6h0M214.7 520.7h0M214.8 501.3h0M214.9 517.7h0M215.2 528.3h0M215.3 544.2h0M216.2 507.9h0M217.7 509h0M219 528.8h0M219.6 527.4h0M219.7 523.2h0M219.8 516.6h0M220.4 527.2h0M221 526.2h0M221.6 537.5h0M221.8 549.3h0M222.8 544.2h0M223.3 533.4h0M223.9 546.3h0M224 542.6h0M224.7 503.4h0M224.9 531.3h0M225 503.7h0M225.3 534.5h0M225.7 539.8h0M226.3 516.6h0M226.3 513.1h0M226.4 522.1h0M226.4 532h0M227 495.6h0M227.8 521.7h0M228.1 538.3h0M228.1 520.5h0M228.5 509.1h0M228.8 522.7h0M229.4 508.7h0M230.4 507.2h0M230.5 542.5h0M230.6 533.8h0M232.1 541.3h0M232.7 531.8h0M233.1 555.2h0M233.5 519.7h0M233.8 543.5h0M234.2 508.3h0M234.2 534.7h0M234.4 539.1h0M234.5 538.9h0M235.4 563.9h0M236 543.1h0M236.8 556.6h0M237.4 579.1h0M237.8 538.7h0M238.1 565.8h0M238.9 543.8h0M239.1 555.8h0M239.3 548.5h0M239.9 511.9h0M239.9 542.7h0M240.3 540.8h0M241.1 538.1h0M242.6 562.9h0M244.1 531.5h0M244.1 553.6h0M244.6 534.3h0M244.7 550.8h0M245.8 525.2h0M246.1 554.1h0M247.2 548.6h0M247.3 529.2h0M247.4 566.2h0M248.6 558.4h0M248.6 557.9h0M248.8 566.1h0M249.9 548.3h0M250.2 532.3h0M250.5 532.8h0M250.5 565h0M250.9 568.3h0M251 585.6h0M251.1 554.1h0M251.4 535.8h0M253 566.8h0M253.1 566.7h0M253.6 540.9h0M253.6 556.8h0M253.8 518.9h0M254 528.8h0M254.4 571.5h0M255 537h0M255.2 549.9h0M255.4 538.4h0M255.5 541.9h0M256.5 566.1h0M257 537.3h0M258.1 545.7h0M258.6 527.4h0M258.6 552.1h0M258.6 544h0M259.3 581.2h0M259.4 552.8h0M259.5 566.9h0M260.1 581.1h0M261.5 552.7h0M261.6 578.4h0M262 551.6h0M262.2 573.2h0M263.1 539.3h0M263.2 534.1h0M263.5 538.9h0M264.3 537.1h0M264.5 519.8h0M264.6 518.3h0M265.4 531.8h0M265.7 513.2h0M266.2 559.3h0M266.2 521.7h0M266.3 526.4h0M266.3 533.8h0M266.7 555.4h0M266.9 534.1h0M266.9 520.2h0M267.2 516.7h0M267.9 531.4h0M268.7 514h0M268.9 494.5h0M269 495.1h0M269.2 500.9h0M269.9 515.1h0M270.4 497.1h0M270.7 500.4h0M271.4 500.3h0M271.5 513.3h0M271.8 512.2h0M271.9 502.9h0M272.7 509.9h0M272.8 527.1h0M273.6 499.1h0M273.8 526.8h0M274.4 508h0M274.5 517.7h0M275.7 492.9h0M277.1 508.9h0M277.6 491.4h0M277.7 516.5h0M277.9 501.9h0M280.8 492.5h0M281.9 505.7h0M282.4 500.2h0M282.6 506.4h0M284 501.5h0M284.3 502.7h0M284.4 522.7h0M284.4 494.3h0M284.5 499.8h0M285 513.4h0M285.2 489.1h0M285.3 497.9h0M285.8 505.3h0M286.1 511.6h0M287.3 530.7h0M288.3 497.9h0M288.5 489.3h0M288.8 494.4h0M289.3 496.1h0M289.4 485.2h0M289.5 521.7h0M290.2 498.7h0M290.3 495.4h0M291 515.3h0M291.7 490.5h0M292 510.5h0M292 513.8h0M292.1 533h0M292.6 506.6h0M293 502.3h0M293.3 504.2h0M293.3 503.4h0M293.5 503.5h0M293.8 511.1h0M293.8 532h0M294.4 509.4h0M294.6 503.8h0M294.7 491.3h0M295 519.9h0M295.4 504h0M295.9 527.5h0M296.1 531.3h0M296.2 522.1h0M296.2 502.9h0M296.3 510.6h0M296.8 516.9h0M296.8 524.5h0M298.4 517.6h0M299.8 506.6h0M300.7 508.5h0M301 509.7h0M301.5 504.9h0M301.5 510.4h0M301.6 507.2h0M301.7 514.2h0M302.4 526.4h0M302.6 534.9h0M303.9 512.1h0M304.1 516.6h0M304.8 519.9h0M304.9 524.7h0M304.9 535.5h0M305.1 507.4h0M305.6 537.8h0M306 525.2h0M306.2 536.2h0M306.9 555.2h0M306.9 524h0M307.3 553.5h0M308.1 525.6h0M308.4 531h0M310.6 525.2h0M313.1 546.8h0M313.2 511.4h0M313.5 506h0M314.1 514.7h0M314.2 539.6h0M314.5 541.1h0M314.7 485.4h0M315.5 548.8h0M315.7 540.8h0M316 520.8h0M316 513h0M316.4 550.1h0M317 526.9h0M317.7 554.6h0M319.2 517.6h0M319.4 524.9h0M319.8 522h0M319.9 518.7h0M320 518.3h0M320.2 558.2h0M321 507.6h0M321.3 523.3h0M322.1 506.4h0M322.4 531.3h0M323.3 514.8h0M323.8 541.7h0M324.2 524.7h0M324.5 515.9h0M324.5 548.1h0M324.6 545.8h0M324.7 535.7h0M325.1 516.3h0M325.5 528.1h0M326.1 528.5h0M326.6 511.1h0M327.1 524.8h0M328.1 534h0M328.4 499.1h0M328.9 505.4h0M329.3 519.1h0M329.4 564.1h0M330.2 513.2h0M330.3 548h0M330.9 535.3h0M331 530h0M332.3 500.2h0M333.2 511.9h0M333.4 535.6h0M333.4 537.2h0M333.7 541.6h0M334.1 547.4h0M335.1 524.2h0M335.6 511.9h0M335.9 527.2h0M336.6 507.3h0M336.7 495.1h0M336.9 525.5h0M337.6 524h0M338 526.8h0M338.4 554.2h0M338.8 520.7h0M339.2 517.9h0M339.3 518.2h0M340.4 527.5h0M340.6 529.6h0M341.1 513.2h0M341.3 530.3h0M341.9 522.1h0M343.6 533.4h0M343.8 519.3h0M344.7 518.9h0M345.2 534.2h0M345.5 536.2h0M345.5 564h0M345.8 563h0M345.9 532.9h0M346.2 540.5h0M346.9 540.4h0M347.3 558.5h0M347.5 556.9h0M347.6 577.5h0M347.7 533.4h0M347.7 577.3h0M351.1 566.3h0M351.3 546.8h0M351.4 532.6h0M351.5 559.1h0M352.3 533.6h0M352.6 520.3h0M354.2 522.7h0M355.5 528h0M357.7 550.5h0M358.3 544.7h0M359.4 558.3h0M359.7 526.5h0M360.2 538.8h0M360.4 522h0M360.4 528.1h0M361 540.1h0M362.2 562.1h0M362.4 538.5h0M363.2 531.8h0M363.6 534h0M364.3 535h0M365.4 539.2h0M365.5 542.3h0M366.2 544.5h0M366.5 558.1h0M366.5 550.5h0M366.5 547.7h0M367 551.3h0M367.1 547.3h0M367.2 559.7h0M367.5 545.8h0M367.5 554.9h0M367.6 555.5h0M367.9 545.4h0M368.6 541.1h0M368.9 556.4h0M368.9 562.5h0M369 543.6h0M369.4 552.2h0M370.1 538.6h0M370.4 544.8h0M370.7 553.3h0M371.8 571.8h0M372.2 550.7h0M373.7 554.4h0M374.1 566.4h0M374.7 554.9h0M374.7 553.9h0M375 544.7h0M375.2 569.3h0M375.4 551.5h0M375.7 553.8h0M376.1 539.2h0M376.1 554.8h0M376.9 552h0M377 559.1h0M377.2 553.2h0M377.2 551.9h0M377.3 556.7h0M377.4 550.1h0M377.9 540.8h0M378.3 557.3h0M378.6 547.2h0M379.5 538h0M379.6 561.6h0M380.4 550h0M380.5 560.1h0M380.7 546.2h0M381.3 544.4h0M381.8 548.1h0M382 548.7h0M382.6 557.4h0M382.8 547.5h0M383 546.4h0M383.3 546.1h0M384 538.3h0M384.2 539.4h0M384.7 552.6h0M385 539.5h0M385.6 543.4h0M385.7 547h0M385.8 570.8h0M387 553.5h0M387.7 538h0M388.6 563.5h0M388.7 538.1h0M388.9 548.4h0M389.2 544.4h0M389.8 549.5h0M390.6 544.2h0M391.3 540.9h0M391.7 557.5h0M392.1 544.2h0M392.4 547.7h0M393.3 539.6h0M393.6 581h0M393.7 536.9h0M394 540.5h0M394.1 567.2h0M394.2 568.6h0M394.5 553h0M395.2 537.7h0M395.7 531.9h0M395.9 535.9h0M396.1 526.2h0M396.1 533.8h0M398.2 543.2h0M398.2 549.9h0M398.3 532.6h0M399.8 535.1h0M399.8 500.6h0M399.8 534.8h0M400.3 510.3h0M400.3 513.2h0M400.8 535.2h0M401.1 534.4h0M401.6 532.1h0M401.8 522.1h0M402.1 528.5h0M403.3 509.3h0M403.6 537.8h0M403.7 540.9h0M403.8 521.9h0M404 497.8h0M404.4 514.6h0M404.5 505.2h0M404.7 537.3h0M404.7 509.6h0M404.7 519.6h0M404.8 499.5h0M405.5 546.6h0M405.5 542.6h0M405.8 560.6h0M406 572h0M406.8 529.7h0M406.8 528h0M406.9 556.7h0M407.2 520.9h0M407.6 532.8h0M409.5 538.3h0M410 502.3h0M410.1 528.4h0M411.1 505.9h0M411.2 507.5h0M411.4 518.1h0M411.7 528.6h0M412 501.2h0M412.3 501.3h0M412.3 544.9h0M412.7 544.9h0M412.8 532.3h0M413.2 534.2h0M413.3 500.6h0M413.4 514.3h0M413.8 522.4h0M415.1 515.7h0M415.2 513.3h0M416.7 519h0M417 511.4h0M417.2 535.6h0M418.1 510.5h0M418.3 526.6h0M418.4 511.6h0M418.4 492.9h0M419.3 501.7h0M419.9 500.9h0M420.7 494h0M421.1 489.8h0M421.2 511.8h0M421.2 534h0M421.3 498.5h0M421.5 509.1h0M422 528.2h0M422 507.3h0M422.5 523.7h0M422.5 520.8h0M422.6 531.2h0M423.1 533.8h0M423.2 521.9h0M424.1 572.9h0M424.9 518.6h0M425 513.7h0M425.3 503.9h0M425.5 515.9h0M425.5 528.6h0M426 522.6h0M426.5 520.4h0M427.3 508.8h0M428.6 514.5h0M428.8 544.8h0M428.8 531h0M428.8 535.1h0M429.7 510.2h0M430.2 513.2h0M430.5 518h0M430.8 531.1h0M431.5 563.4h0M431.9 537.9h0M433.2 516.2h0M433.3 554.5h0M433.5 536.5h0M433.6 542.5h0M434.6 532.8h0M435.1 517.3h0M435.2 537.6h0M435.4 511.6h0M436.4 533.8h0M436.8 492.8h0M437 534.1h0M437.5 524.3h0M438.4 568.4h0M438.9 515.1h0M439.6 537.8h0M440 539.9h0M440.9 513.8h0M441 534.6h0M441.2 541.5h0M441.4 506.6h0M441.5 537.2h0M441.5 524.4h0M441.7 541.5h0M442 552.4h0M443.1 508.4h0M443.4 520.6h0M443.7 513.4h0M444 513.9h0M444 534.4h0M444.1 536.6h0M444.7 530.7h0M445.4 537.8h0M445.5 518h0M445.6 565.5h0M445.7 528.2h0M446.2 542.2h0M446.9 514.3h0M447 534.1h0M447.1 509.7h0M447.3 521h0M447.7 534.2h0M447.9 507.6h0M448.9 531.1h0M449.6 513.4h0M450.3 501.1h0M450.4 491h0M450.5 516.1h0M450.6 502.2h0M450.7 503.7h0M450.9 497h0M451.5 514.2h0M451.9 524.7h0M452.5 514.1h0M452.7 504.8h0M453.6 490.2h0M454.2 506.4h0M454.4 492.1h0M454.6 523.4h0M455.1 494.5h0M455.2 507.7h0M455.2 512.5h0M455.4 519h0M455.6 495.5h0M455.7 487.1h0M455.8 531.1h0M456.2 511.9h0M457 495.3h0M457.3 507.5h0M457.6 506.5h0M458.2 507.3h0M459.5 493.3h0M459.7 516.2h0M459.8 493.6h0M459.8 501.5h0M460 499.2h0M460.2 503.1h0M461 489.1h0M461.2 492.3h0M461.5 467.3h0M461.6 485.1h0M462.1 484.4h0M462.2 484.4h0M462.4 496.8h0M462.5 482.6h0M462.7 502.8h0M462.7 499.8h0M462.7 489.1h0M462.8 506.7h0M463.2 508.3h0M463.3 465.3h0M464.4 497h0M464.5 488.2h0M464.8 498.8h0M466 483.5h0M466.2 473.6h0M466.4 467.8h0M466.5 479.4h0M466.7 485.9h0M466.8 491.6h0M467.6 481.1h0M467.8 505.7h0M469.1 495.6h0M469.4 522.6h0M469.6 493.8h0M469.7 516.7h0M469.9 505.5h0M472.5 525.3h0M472.5 527.5h0M473.1 494.5h0M473.1 509.9h0M473.2 516.5h0M473.2 494.4h0M473.5 535.5h0M474.1 504.6h0M474.3 520.9h0M474.4 503.7h0M474.6 500.1h0M474.8 512.8h0M475 511.6h0M475.3 520h0M475.4 495.6h0M475.5 502.5h0M475.9 481h0M477.2 499.6h0M477.7 508.4h0M478.1 518h0M478.7 522.9h0M478.8 503.9h0M479.1 526.9h0M479.2 512.2h0M479.3 507.2h0M479.3 514.8h0M479.4 523.4h0M479.7 503.8h0M480.1 503.9h0M480.6 499.9h0M481.8 527.1h0M481.9 521.6h0M482.1 528.9h0M482.4 497h0M482.5 525.4h0M483.5 524.2h0M483.8 518.2h0M484.1 531.2h0M484.3 509.2h0M484.3 518.9h0M484.6 516.2h0M484.7 508.4h0M484.7 509.7h0M485.3 515.6h0M486.3 509.2h0M487.4 514.4h0M487.4 535.4h0M488.4 547.1h0M488.6 527.3h0M488.8 521.1h0M488.9 516h0M489.1 532.2h0M489.2 525.9h0M489.4 541.6h0M490.2 516.4h0M490.5 508.2h0M490.7 536.3h0M491.3 529h0M491.4 506.7h0M491.9 533.5h0M492.5 534.2h0M493.3 526.2h0M493.6 520.6h0M494.2 524.7h0M494.4 521.9h0M495 511.5h0M495.4 529.5h0M495.9 512.8h0M496.3 528.4h0M497.4 509.2h0M498.1 504.9h0M498.2 523.6h0M499.3 527.5h0M499.6 535.3h0M500.5 545.8h0M500.5 523.2h0M501.6 555.1h0M502.6 533h0M502.7 530.5h0M502.7 511.5h0M502.8 536.6h0M503.7 520.2h0M503.8 535.9h0M504.2 509.5h0M505.5 534.1h0M506.7 538.1h0M506.9 540.1h0M507.4 519.1h0M507.4 533.2h0M507.6 525.6h0M507.9 544.2h0M508.1 555h0M508.4 516.1h0M508.6 517h0M508.6 541.4h0M508.9 530.4h0M509 565.5h0M509.2 528.8h0M509.2 543.1h0M509.6 534h0M510.9 549h0M512.6 537.4h0M513.1 537.2h0M513.1 548.7h0M513.4 547h0M513.5 533.6h0M513.8 523.3h0M514.4 536.1h0M514.6 553.4h0M514.7 555.7h0M515.6 549.9h0M515.8 520.4h0M516.3 562h0M516.7 528h0M517.2 551.4h0M518.5 531.2h0M519 545.1h0M519.1 537.8h0M519.3 540.8h0M520.1 528.3h0M520.5 524.9h0M521.1 522.9h0M521.2 526.7h0M521.3 536.9h0M523.6 585.6h0M524.3 561.5h0M525.6 539.4h0M527 546.7h0M528.5 555.8h0M529.2 574.2h0M529.3 552.8h0M530.4 530.7h0M530.6 552.9h0M530.8 530.4h0M531.6 548h0M531.7 522.7h0M532 523.3h0M532.2 539.1h0M532.2 551.3h0M532.9 538.4h0M533 529.7h0M533.1 551.8h0M533.4 536.9h0M533.4 546h0M533.6 515.7h0M534.5 555.8h0M534.5 540.5h0M535.6 540.6h0M535.9 522.8h0M536.3 535.8h0M537.4 554.6h0M537.5 522.6h0M537.8 538.8h0M537.8 521.7h0M538.2 553.3h0M538.4 514h0M538.6 524.8h0M539.4 529.2h0M539.5 535.6h0M539.7 522.7h0M540.4 565.6h0M541.5 533h0M541.8 543.8h0M541.9 536h0M542.3 515.1h0M542.6 545.8h0M542.7 533h0M543.5 536.3h0M543.9 520.3h0M544 536.4h0M544 515.9h0M545.1 509h0M545.5 557.2h0M545.5 546.6h0M545.8 529h0M547.2 522.8h0M547.7 535.9h0M548.7 523h0M549.2 531.7h0M549.6 547h0M550.2 524.5h0M550.7 534.6h0M551.2 531.4h0M551.8 523.8h0M552 523.2h0M552.2 516.7h0M552.6 547.6h0M553.2 548.4h0M553.4 521.5h0M553.9 527.8h0M554.2 526.8h0M554.6 528.8h0M556 553h0M556.3 549.9h0M556.4 529.6h0M557.1 529.9h0M557.6 531.3h0M557.8 524.5h0M558.5 519.9h0M559.1 529.9h0M559.2 526.1h0M559.6 527.2h0M559.7 542.3h0M560.1 541.3h0M560.6 548.9h0M561.2 530.4h0M562.1 530.6h0M563.5 535.7h0M564 545.6h0M564 529.5h0M564.9 560.8h0M565.2 530.1h0M565.4 529.2h0M566.2 543.5h0M566.3 559.9h0M566.7 550.8h0M567.5 525.9h0M568.3 538.7h0M569 533.5h0M569.8 549.4h0M569.8 552.5h0M569.8 514.8h0M570.2 545.7h0M571 530.5h0M571.3 519.4h0M571.4 528.9h0M571.9 524.4h0M572.3 526.7h0M572.5 512.6h0M572.6 523.8h0M573.9 523.5h0M575.4 512.9h0M575.9 535h0M577 537.5h0M577.5 527.8h0M577.8 532.8h0M577.9 518.2h0M578.8 517.9h0M579.7 528.5h0M581 519.4h0M581.3 539.2h0M581.6 506.1h0M581.7 513.9h0M581.8 522.9h0M582.1 500h0M582.3 522.3h0M582.4 515.1h0M582.5 534.6h0M583.2 542.1h0M583.2 515.3h0M584.2 537.6h0M584.6 547.4h0M585 550.9h0M585.3 519.6h0M585.4 540.4h0M585.9 545.8h0M586.2 566.5h0M586.3 549.6h0M586.4 529.5h0M587 544.6h0M587.2 532.6h0M587.6 508.5h0M588 525.5h0M588 537.6h0M588.1 523.1h0M588.7 540h0M589.2 514.7h0M589.3 499.8h0M590.6 510.8h0M590.7 504.4h0M591.5 519.1h0M592 528.8h0M592 520.4h0M592.3 526.6h0M592.6 501.5h0M593.5 506.8h0M594.2 528.5h0M594.3 517h0M594.4 512.5h0M595.1 507.1h0M595.2 523.4h0M595.8 524h0M596.5 517.5h0M597.7 522.6h0M598 504.9h0M598.5 523.2h0M599.6 541.8h0M599.7 528.9h0M599.8 508h0M599.9 526.7h0M600.2 532.6h0M600.3 506.5h0M601.1 498.4h0M601.6 537.1h0M602 504.9h0M602.3 485.4h0M602.6 479.9h0M602.8 497.8h0M602.9 504.7h0M603.1 528.9h0M603.5 503.2h0M604 516.4h0M604.4 512.6h0M604.6 501.9h0M604.9 521.5h0M605.5 513.9h0M606.5 479.7h0M607.1 492h0M607.6 528.7h0M608.9 527.2h0M609.3 531.7h0M609.8 509.9h0M610.1 529.5h0M610.3 512.9h0M610.7 514.7h0M611.2 508h0M611.5 526.7h0M611.8 509.9h0M612.8 514.6h0M613.6 529.6h0M613.7 500.3h0M613.8 514.2h0M614.1 531.5h0M614.3 533.1h0M614.4 511.5h0M614.5 503.6h0M614.8 509.6h0M614.8 530.8h0M614.8 517.1h0M614.9 530.7h0M615.8 512.8h0M617.2 503.8h0M618.2 507.2h0M618.3 503.8h0M618.3 521.4h0M618.8 518.8h0M618.8 522.6h0M619.7 552.7h0M621.4 537.5h0M621.8 566.6h0M621.9 509.7h0M622.4 534.4h0M622.4 499.7h0M622.9 544h0M623 496.5h0M624.2 512.6h0M624.9 505.7h0M625.6 512.5h0M626.3 530.5h0M626.9 537.7h0M627 526h0M627.6 524.2h0M628.2 519.6h0M628.5 551.9h0M628.7 545.9h0M629.6 568h0M629.6 575.8h0M630.1 543.6h0M630.6 548h0M631.2 543.9h0M631.3 548h0M631.8 557.7h0M632 552.2h0M632.1 569.8h0M632.3 542.1h0M632.3 539.7h0M632.5 548.4h0M634.2 536h0M634.7 576.9h0M635.6 539.3h0M636.3 535.7h0M636.5 541h0M637.2 551.6h0M638.4 545.8h0M638.7 547.5h0M639 566.8h0M639.5 564.7h0M640.3 552.5h0M641.1 580.3h0M641.2 543.3h0M643.7 560.9h0M645.1 559.1h0M645.5 560.2h0M645.7 552.8h0M645.8 570.1h0M645.8 542.3h0M646.9 556.8h0M646.9 554.3h0M647.1 535.7h0M647.7 552.3h0M648.1 570.2h0M648.6 555.1h0M650 538.3h0M650.1 541.4h0M650.7 543.3h0M650.9 548.5h0M651 530.9h0M651.3 552.7h0M651.5 562.5h0M651.8 534.8h0M652 534.5h0M652.3 538.8h0M652.9 528h0M653 532.4h0M653 539h0M654.2 535.3h0M654.5 546.9h0M654.5 537.2h0M654.8 547.7h0M655.1 542.3h0M655.1 549h0M655.2 541.3h0M656.1 536.7h0M657.6 539.5h0M657.7 554h0M657.9 548.6h0M659.4 542.7h0M660 548.5h0M660 536.1h0M660.5 542.4h0M660.5 509.8h0M660.6 523.3h0M661.2 520.5h0M661.7 526.6h0M662.3 538.7h0M662.4 513.3h0M662.5 534.6h0M663.8 523.2h0M663.9 522.4h0M664.6 528.7h0M664.8 514.7h0M665.4 535.1h0M665.9 508.8h0M666.3 505.8h0M667.5 500.7h0M667.9 540.6h0M668 506.8h0M668.4 506.7h0M668.9 526.9h0M669.3 519.9h0M670 508h0M670.7 532.8h0M671 503.9h0M671.6 542.9h0M672.7 512.8h0M673.7 514.6h0M674.1 531h0M675.4 535.5h0M676.1 520.4h0M677 530.5h0M677.2 527.5h0M677.3 522.3h0M677.9 502.6h0M678 508.9h0M678 508.9h0M678.4 502.2h0M678.7 508h0M678.8 500.3h0M679.1 509.6h0M679.6 502.5h0M679.8 518.9h0M680.1 531.6h0M680.9 516.5h0M681.1 505.2h0M682 521.7h0M682.3 494h0M682.7 513.1h0M683.1 502.8h0M683.9 520.4h0M684.2 506.6h0M684.5 492.9h0M684.8 492.7h0M687.2 514.4h0M687.3 490.4h0M689 523.8h0M689 493.7h0M689.4 534.8h0M689.8 517.3h0M690 508.8h0M690.6 483.9h0M690.9 513.7h0M690.9 498.7h0M691.1 500.7h0M691.3 491.8h0M691.6 505.9h0M691.7 510.2h0M693.3 508.6h0M693.8 508.4h0M693.8 508.6h0M693.9 523.9h0M693.9 550h0M694.2 548.3h0M694.3 534.7h0M694.4 527.4h0M695.5 542h0M695.8 498h0M696.1 534.7h0M696.2 510.4h0M696.2 511.5h0M697.3 539h0M697.6 519.1h0M697.7 514.3h0M698.1 536h0M698.7 512.4h0M699.2 511.8h0M699.5 493.7h0M699.6 509.5h0M699.7 542.6h0M699.8 515.4h0M699.9 556.2h0M700.9 535.1h0M701.4 576.6h0M701.5 527.3h0M701.7 528.8h0M701.9 510.5h0M702.7 516.5h0M703.1 536.9h0M703.5 528.6h0M704.7 529.3h0M704.9 561.3h0M705 548.2h0M705.4 530.7h0M705.4 566.8h0M705.4 571.6h0M705.9 538.9h0M706.6 539.3h0M706.8 534.7h0M707 500.8h0M707.2 539h0M707.4 519.5h0M707.9 532.4h0M708.4 539.1h0M708.4 552.8h0M710.7 555.1h0M710.8 525.7h0M712.5 538.3h0M714.7 527.8h0M714.8 543.7h0M715.1 542h0M715.4 528h0M715.4 545.6h0M716.1 543.5h0M716.2 530.8h0M716.3 531h0M716.8 532.8h0M717.2 525.7h0M717.4 529.8h0M717.5 493.2h0M717.6 535.6h0M717.7 539.2h0M718.1 509.5h0M718.4 529.3h0M718.7 531.6h0M719.4 500.2h0M719.4 540.7h0M719.5 508.4h0M720.7 523.8h0M721.3 502.8h0M721.3 509.2h0M721.9 521h0M722.4 515.6h0M722.7 534.7h0M723 527.3h0M723.2 499.7h0M723.3 508.2h0M724.8 516.8h0M725 529.4h0M725.1 524.3h0M725.3 540.8h0M726.3 506.2h0M726.4 498.4h0M727 523h0M728 535h0M728.7 513.4h0M728.8 546.7h0M729 527.9h0M729.3 537.4h0M729.6 518.4h0M729.8 537.8h0M729.9 531.4h0M729.9 516.6h0M730.1 525.5h0M730.7 501.7h0M730.9 523.4h0M730.9 519.6h0M731.6 513.2h0M731.8 528h0M731.9 521.3h0M733 525.2h0M733.1 531.8h0M733.1 507h0M733.3 512.2h0M734.2 529.7h0M735.2 526.9h0M735.9 525.2h0M736.1 519.2h0M736.3 521.4h0M737.2 527.5h0M737.2 548.5h0M737.4 516.3h0M737.6 538.9h0M737.7 526.3h0M737.8 531.6h0M738 521.5h0M739.3 536.8h0M740.2 530.7h0M740.9 541.4h0M741.1 548.3h0M741.2 529.4h0M741.6 533.8h0M742.5 526h0M743.2 520.3h0M743.4 522.9h0M743.5 552.5h0M744.3 530.6h0M744.3 531.9h0M744.3 528.3h0M744.9 537.2h0M746.7 555h0M746.8 549.4h0M747.7 543.8h0M747.8 552h0M748 534.5h0M748.1 533.3h0M748.1 556.5h0M748.6 548.7h0M748.7 544.6h0M749 551h0M749.5 532.1h0M750.4 550.4h0M750.4 534.8h0M750.5 550.1h0M751.1 560.5h0M751.7 545.3h0M752.3 542h0M752.4 557.2h0M753.5 540.8h0M754.5 522.8h0M755 530h0M755.3 560.7h0M756.4 528.8h0M758.3 526.4h0M758.6 528.7h0M759.4 499.8h0M759.8 544.1h0M760.1 524.9h0M760.1 520.1h0M760.2 537.8h0M760.4 516.9h0M760.5 528h0M760.5 540.1h0M760.7 517.4h0M760.8 530.4h0M761.6 531.7h0M762 525.6h0M762.1 539.6h0M762.6 505.8h0M763.6 540.5h0M763.9 526.1h0M764.4 539.7h0M764.9 516.3h0M765.2 529h0M766.1 530.8h0M766.3 520.2h0M766.3 530.7h0M766.9 527.2h0M768 523.9h0M768.1 516.9h0M768.6 563.6h0M768.6 536.5h0M769.5 536.1h0M769.6 539.2h0M770.4 532.5h0M770.5 548.9h0M770.5 530.4h0M771.2 554.7h0M771.2 558.2h0M771.4 560h0M772.3 529.7h0M772.4 541h0M772.9 528h0M773.1 540.9h0M773.1 539.5h0M773.4 546.1h0M773.5 525.8h0M773.6 540.9h0M773.9 538.1h0M774.4 526.1h0M774.6 562.3h0M775.1 547.9h0M775.8 549.9h0M776.9 542.3h0M777.4 544.1h0M777.6 540h0M777.7 563.5h0M778.3 544.6h0M778.6 562.9h0M778.6 540.5h0M779 568.4h0M779.6 551.8h0M779.7 557.4h0M780 536.8h0M780.1 584.1h0M780.5 581.4h0M780.5 563.5h0M780.5 558.1h0M781.5 582h0M781.8 569.7h0M782 550.3h0M782.5 520h0M782.6 523.2h0M782.9 532h0M783.1 518.7h0M783.2 524.2h0M783.4 538.4h0M783.4 542.1h0M784.1 538.2h0M784.6 537.6h0M785.7 504.1h0M785.7 545.7h0M787.1 518.5h0M787.3 532.1h0M787.5 524.2h0M788 542.6h0M788.2 563.6h0M789.7 543.5h0M790.2 513.9h0M791 545h0M791.1 529.3h0M791.6 517.5h0M791.7 522.1h0M791.8 526.6h0M793.5 527.1h0M793.6 508.2h0M794.5 529h0M795.1 523.2h0M795.7 523.1h0M797.5 518.2h0M797.7 507.3h0M797.8 506.9h0M797.9 516.2h0M797.9 514.4h0M798.6 502.2h0M798.7 495.8h0M799.2 502.6h0M799.2 527.2h0M800.4 542h0M800.5 530.2h0M800.5 524.5h0M800.5 519.2h0M800.6 522.8h0M803 516.2h0M803.1 501.2h0M803.4 515.2h0M803.7 521.5h0M803.8 525.8h0M803.8 511.2h0M804.1 516.5h0M804.6 505.7h0M805.2 503h0M805.2 501.7h0M806.3 504.6h0M806.8 503h0M807.4 522h0M807.4 502.5h0M807.6 514.2h0M807.7 513.7h0M808.4 511h0M809 511.8h0M809.2 505.4h0M809.2 509.2h0M809.8 471h0M810.1 506.6h0M810.8 482.6h0M810.9 492.7h0M811.8 503.8h0M812 485.4h0M812.3 470.7h0M812.3 497.2h0M812.5 474h0M812.6 513.1h0M813.4 488.8h0M814.3 506.2h0M815.1 510.1h0M815.3 504h0M815.4 489.7h0M815.8 478.6h0M815.9 464.8h0M816 479.2h0M816 466.9h0M816.6 490h0M816.6 490.8h0M817.1 469.9h0M817.2 475.3h0M817.6 496.5h0M817.7 488.4h0M818.1 485.5h0M818.1 491.4h0M818.4 507h0M818.8 483.4h0M819.6 507.4h0M819.8 464.9h0M820.9 486.7h0M821.9 497h0M822.3 478h0M822.3 473.7h0M822.6 476.3h0M822.7 487.1h0M822.8 507.3h0M823.1 500.8h0M823.2 470.9h0M823.3 497.3h0M823.6 496.8h0M823.6 497.4h0M823.8 510.6h0M824.2 499.8h0M824.8 486.5h0M825.4 497.6h0M825.6 476h0M826.1 500h0M827 479.5h0M827.2 481.9h0M827.3 474.5h0M827.5 489.2h0M827.5 512.1h0M828.1 507.4h0M828.3 490h0M828.4 497.7h0M828.5 480.8h0M828.8 507.2h0M829 493.2h0M829.6 497.5h0M830.7 488.3h0M830.7 492.2h0M831.2 517.6h0M831.7 503.4h0M832.5 487.6h0M832.7 490.9h0M833.1 501h0M833.3 490.3h0M833.9 488.3h0M834.1 498.2h0M834.1 494.4h0M834.8 485.1h0M835.4 491.5h0M835.7 507.4h0M835.8 510.2h0M837.2 492.8h0M837.6 493.8h0M838.4 510.7h0M840.3 507.1h0M840.6 523.1h0M841 493.9h0M841.1 508.9h0M841.4 512h0M841.7 499.5h0M842.2 503.5h0M842.3 497.9h0M843.5 518.1h0M844.2 506.7h0M845.5 525.6h0M847.6 517.2h0M847.7 524.6h0M848 534.2h0M848.6 527.1h0M848.9 519.2h0M849.3 531.1h0M849.5 518.9h0M849.5 535.6h0M850.2 519.2h0M850.6 550.3h0M850.9 525.7h0M851.1 522.1h0M853.4 511.3h0M853.4 527.7h0M853.8 537.3h0M854.7 538.7h0M855.2 528.9h0M855.6 522.2h0M856.2 524.8h0M856.7 515.2h0M856.9 519.2h0M1015.2 512.7h0M1015.2 512.2h0M1015.5 485.4h0M1015.9 509.8h0M1016.2 514.6h0M1016.4 510.7h0M1016.8 506.6h0M1017.5 525.6h0M1018.4 520.6h0M1018.5 506.5h0M1018.7 489.4h0M1020.5 509.4h0M1022.1 501.7h0M1022.2 505.6h0M1022.3 518.8h0M1022.5 504.6h0M1022.6 511.3h0M1023.5 541.9h0M1023.8 502h0M1024.2 528.2h0M1024.7 511.5h0M1025.3 510.2h0M1025.5 512.5h0M1025.9 548.1h0M1025.9 515.1h0M1026.6 521.7h0M1027.4 530.5h0M1028.2 497.8h0M1028.5 510.1h0M1029 525h0M1029.3 533.6h0M1029.7 514.5h0M1029.9 515.2h0M1030.1 535.1h0M1030.4 510.4h0M1030.6 502.2h0M1030.9 527.7h0M1030.9 516.2h0M1032 527.1h0M1033.2 519.4h0M1033.5 534.4h0M1034.1 551.6h0M1034.7 528.7h0M1035.8 529.2h0M1035.9 544.3h0M1036 526h0M1037.2 544.6h0M1037.3 538.8h0M1037.9 540h0M1038.5 542.3h0M1038.9 524h0M1038.9 519.4h0M1039 525.6h0M1039.1 530.8h0M1039.2 522h0M1040.5 535.5h0M1041.1 521.8h0M1041.9 520.9h0M1042.1 510.8h0M1042.2 552.4h0M1042.3 529.7h0M1042.4 513.3h0M1042.7 531.8h0M1043.2 526.6h0M1044.3 505.3h0M1045.2 525.4h0M1045.3 517.3h0M1045.5 513.2h0M1046.2 528.7h0M1046.2 519.7h0M1046.9 517.5h0M1047.1 532.6h0M1047.4 523.5h0M1047.9 508.6h0M1048.1 510.6h0M1048.2 540.3h0M1048.2 509.7h0M1049 514h0M1049.7 524.1h0M1050.1 510.3h0M1050.4 507.2h0M1050.8 512.5h0M1051.1 507.1h0M1051.6 521.2h0M1052.7 501.9h0M1053.6 519h0M1053.7 502h0M1054.2 506.7h0M1054.2 527h0M1055 515.3h0M1055.1 516.1h0M1055.5 524h0M1055.7 497.9h0M1055.8 499.8h0M1056 479.9h0M1057.3 502.7h0M1057.7 495.4h0M1058.1 491.6h0M1058.3 507.1h0M1059.1 499.7h0M1059.1 476.7h0M1059.2 486.3h0M1059.4 506.4h0M1060.4 493.1h0M1060.8 497.8h0M1061 493.4h0M1061.1 501.6h0M1061.3 507.7h0M1061.9 481.8h0M1062.1 496.5h0M1062.1 499.2h0M1062.5 510.1h0M1063.3 493.5h0M1063.7 512.4h0M1063.9 489h0M1063.9 490.7h0M1064 491.7h0M1065.5 485.3h0M1065.6 507.5h0M1065.9 479.4h0M1065.9 509.2h0M1066.2 507.3h0M1066.7 502.4h0M1066.7 496h0M1068.4 484.2h0M1070 475.7h0M1070.9 477.8h0M1071.5 517.4h0M1071.8 499.8h0M1072.1 487h0M1072.2 489.7h0M1073 498h0M1074 480.7h0M1074.2 485.4h0M1074.8 496.6h0M1074.9 492.3h0M1075 505.7h0M1075.5 491h0M1076.8 469h0M1077.1 470.7h0M1077.9 504.6h0M1078.4 498.7h0M1078.7 511.1h0M1079.4 477.3h0M1079.7 464.1h0M1080.2 490.8h0M1080.2 496.4h0M1081.9 497.4h0M1083.7 502.9h0M1083.8 482h0M1084.5 465.4h0M1084.5 521.7h0M1084.8 491.7h0M1084.9 486.6h0M1085.7 498.2h0M1085.9 507.6h0M1086.1 471.6h0M1086.4 497.1h0M1086.7 509.6h0M1087.2 472h0M1087.8 474.7h0M1088 495.1h0M1088.3 506.9h0M1088.8 494h0M1088.9 502.6h0M1089.5 479.2h0M1089.7 531.4h0M1090.7 512.5h0M1090.8 505.7h0M1091 482.1h0M1091 518.3h0M1091.3 497.8h0M1091.4 510.3h0M1092 548.4h0M1092.1 527.1h0M1092.4 501.8h0M1092.8 510.2h0M1093.6 503.4h0M1094.7 499.8h0M1094.9 554.9h0M1095.3 538.9h0M1096 581.1h0M1096.1 524.9h0M1096.7 511.6h0M1097.2 490.4h0M1098.3 519.3h0M1098.4 507.6h0M1098.5 560.3h0M1098.9 536.9h0M1098.9 512.2h0M1099 538.5h0M1099.7 561.8h0M1100.3 551.3h0M1100.5 543h0M1100.8 517.2h0M1101.3 529.5h0M1101.4 514.7h0M1102.2 569.1h0M1103.2 523.2h0M1104.1 521.7h0M1104.2 531.4h0M1104.5 526.7h0M1104.6 540.5h0M1104.9 506.5h0M1105.9 507.7h0M1106.2 526.7h0M1107 520.7h0M1107.1 534.5h0M1107.7 520h0M1107.7 504.8h0M1107.9 526.9h0M1109.3 533.9h0M1109.8 539.6h0M1111.1 549.9h0M1111.1 535.8h0M1111.2 524.4h0M1111.4 529.7h0M1111.4 514.5h0M1113.5 521.6h0M1113.6 531h0M1113.8 532.8h0M1113.9 556.8h0M1113.9 511.3h0M1114.1 525.8h0M1114.3 533.2h0M1114.6 534.2h0M1114.8 543.4h0M1115.1 540.3h0M1116.3 550.8h0M1116.8 554.8h0M1117.4 547.3h0M1117.9 540.8h0M1118.8 532.1h0M1119.4 550.4h0M1119.5 557.1h0M1119.8 558.2h0M1120.1 546.1h0M1120.6 510.9h0M1122.7 526.2h0M1123.1 540.4h0M1123.3 551.2h0M1123.3 534.7h0M1123.7 531h0M1123.8 490.4h0M1124 509.4h0M1126 525.8h0M1126.4 529.3h0M1126.8 519.1h0M1126.8 534.6h0M1127.5 532.6h0M1127.9 547.7h0M1128.3 520.1h0M1128.4 564.3h0M1129 542.6h0M1129.4 542.2h0M1129.5 540.7h0M1129.6 539.8h0M1129.7 541.9h0M1130 560h0M1130.5 519.4h0M1130.7 519.9h0M1131 555.2h0M1131.1 528.1h0M1131.3 510.1h0M1131.8 538.1h0M1131.9 538.1h0M1132 522.4h0M1132.2 548.5h0M1132.2 527.3h0M1133.5 528.2h0M1133.5 528h0M1133.7 527.3h0M1135 516.3h0M1135.8 531.1h0M1135.8 528.8h0M1135.8 551.8h0M1135.9 520.1h0M1135.9 523.3h0M1135.9 533.7h0M1136.4 533.1h0M1137.3 514.7h0M1137.4 505.5h0M1138.3 519.6h0M1138.6 508.4h0M1139.1 514.2h0M1139.9 514.7h0M1140.3 526.2h0M1140.4 529.5h0M1141.2 543.5h0M1141.6 535.2h0M1142.2 530.5h0M1143 513.7h0M1143.5 517.4h0M1143.6 499h0M1144.2 528.7h0M1144.5 506.3h0M1145 498.3h0M1145.2 528.6h0M1145.4 502.7h0M1145.8 520.2h0M1145.9 500.9h0M1146.6 497.6h0M1147 496.2h0M1147.5 512.3h0M1148.1 519.1h0M1148.2 528h0M1148.6 513.3h0M1149 534.2h0M1149.3 511.3h0M1149.3 531.8h0M1150.7 513.6h0M1150.7 513.1h0M1150.9 541.6h0M1151.5 522.2h0M1151.6 526.1h0M1152.2 528.6h0M1152.8 526.5h0M1152.9 512.1h0M1153.5 510.9h0M1153.6 522.1h0M1153.7 515.2h0M1154.6 521h0M1155 526.8h0M1155.2 526.5h0M1156.6 543.9h0M1157.1 529.7h0M1157.2 531.4h0M1157.4 532.1h0M1158.7 544.5h0M1161.1 535.8h0M1161.4 547.4h0M1161.4 538.3h0M1161.5 558.9h0M1161.8 556.8h0M1161.9 550.6h0M1162.2 547.2h0M1162.6 557.7h0M1162.9 560.4h0M1163 552.9h0M1163.5 537.3h0M1164.1 561.1h0M1164.4 570.5h0M1164.8 550.9h0M1165.4 552.5h0M1165.4 543.1h0M1165.6 554.8h0M1165.9 549.8h0M1166 539.7h0M1166 545.9h0M1166.2 540.6h0M1166.7 564.4h0M1166.9 544.3h0M1167 554h0M1168.2 541.3h0M1169 546.9h0M1170.2 540.6h0M1170.6 535.7h0M1170.6 552.4h0M1171.2 534.4h0M1172 547.9h0M1172.5 556h0M1173 544.3h0M1173.5 548.5h0M1174.3 546.4h0M1174.9 567.2h0M1175.5 561.9h0M1175.5 524.1h0M1176.5 530.1h0M1176.7 526.6h0M1177 534.8h0M1178.6 562.4h0M1180.2 546.2h0M1180.8 517.8h0M1180.8 541.1h0M1181.4 538h0M1182.1 522.5h0M1182.9 541.2h0M1183.5 519.9h0M1184.4 541h0M1184.4 553.1h0M1184.7 563.2h0M1186.8 536.3h0M1186.8 515.8h0M1187 519.9h0M1187.5 514.4h0M1187.5 539.2h0M1188 523.2h0M1188.1 536.3h0M1188.1 488.3h0M1188.7 512.3h0M1188.7 518.1h0M1189.2 507.7h0M1189.4 511.3h0M1189.6 531.2h0M1189.7 512.3h0M1189.9 530.4h0M1190 517.8h0M1190.4 536.8h0M1190.7 526.8h0M1191.3 527.3h0M1191.5 512.4h0M1191.7 482.8h0M1192.1 512.4h0M1192.2 495.6h0M1192.2 538.7h0M1192.5 528.5h0M1193 519.2h0M1193.3 528.7h0M1193.4 517.6h0M1193.5 507.1h0M1193.8 506.4h0M1194 524.1h0M1194.4 506.7h0M1194.5 514.1h0M1194.6 508.1h0M1195.3 489.6h0M1195.9 508.2h0M1196.8 510.8h0M1196.8 526.1h0M1197.5 501.4h0M1197.7 513.9h0M1198 497.9h0M1198.7 510.3h0M1198.7 514.3h0M1199 488.9h0M1199.5 499.5h0M1200.1 518.9h0M1200.2 514h0M1200.3 523.6h0M1200.3 516.4h0M1200.4 489.7h0M1200.4 488h0M1200.4 505.9h0M1200.6 515.2h0M1200.9 513.6h0M1201.1 508.9h0M1201.1 500.6h0M1201.4 511.2h0M1201.7 507.9h0M1202.1 495.6h0M1203.4 510h0M1204 503.6h0M1204.5 503.3h0M1204.9 493.8h0M1205.4 492.2h0M1205.4 497.6h0M1205.8 491.6h0M1205.9 495.3h0M1206.2 495.8h0M1207.1 477.9h0M1208.5 493.2h0M1208.7 506.5h0M1208.9 512.6h0M1208.9 494.9h0M1209 495.9h0M1209 492.6h0M1209.1 496.7h0M1209.2 499.4h0M1210.4 495h0M1210.5 500.9h0M1211.2 476.8h0M1212 523.3h0M1213.1 502.3h0M1213.2 489.6h0M1213.4 473.8h0M1213.8 491h0M1213.9 501.6h0M1214 503.2h0M1214.2 498.7h0M1215.1 502.2h0M1215.2 497.7h0M1215.3 494.8h0M1217.9 477.1h0M1218 496.3h0M1219.9 497.7h0M1220.5 477.1h0M1220.8 499h0M1221.4 505.9h0M1221.7 464.7h0M1224.7 467.1h0M1224.9 486.1h0M1225.4 477.1h0M1225.7 492.7h0M1226.4 485.9h0M1226.6 495.2h0M1226.7 488.6h0M1227.1 498.9h0M1228.7 465h0M1228.8 491h0M1229.4 470.1h0M1229.6 476.3h0M1229.7 478.3h0M1230.3 472.4h0M1230.5 492.8h0M1230.6 472.2h0M1230.6 496.1h0M1230.8 471.7h0M1231.2 469.1h0M1231.8 476.8h0M1231.9 466.7h0M1233.6 484.9h0M1235.8 464.6h0M1236 477.8h0M1236 466.5h0M1236.1 476.7h0M1236.7 477.5h0M1236.9 470.2h0M1237.5 469.3h0M1238.8 475.9h0M1239.1 466.2h0M1239.2 484.9h0M1239.4 479.9h0M1239.6 486.7h0M1239.9 469.5h0M1241.6 480.2h0M1242.3 471.5h0M1242.5 486.9h0M1242.6 489.7h0M1242.7 485.8h0M1243.1 477.4h0M1243.6 470.6h0M1244.7 471.7h0M1245.5 480h0M1245.6 482.1h0M1246.3 472.6h0M1246.6 480.8h0M1247.1 483h0M1247.7 466.1h0M1248.1 476.9h0M1248.4 476.3h0M1249.3 480.7h0M1249.9 469h0M1250.6 489.7h0M1250.7 476.2h0M1250.7 478.6h0M1250.8 478.5h0M1251.4 468.4h0M1253.1 468.2h0M1253.3 465.8h0M1253.5 479.8h0M1253.6 479.7h0M1253.9 498.6h0M1253.9 489.2h0M1254.4 488.9h0M1254.4 499.1h0M1254.8 485.7h0M1254.8 496.3h0M1254.8 491.7h0M1256.3 485.5h0M1256.7 499.6h0M1257.3 476.6h0M1257.8 470h0M1258.7 498.7h0M1259.4 502h0M1260.2 503.2h0M1261.4 498.5h0M1261.6 483.7h0M1262.7 470.8h0M1262.9 476.7h0M1263.1 491.2h0M1263.3 471.5h0M1263.7 485.1h0M1264.2 477.1h0M1264.2 473.3h0M1264.6 466.9h0M1265.6 480.6h0M1265.6 479.2h0M1267.4 491.7h0M1267.7 491.9h0M1268.8 494.1h0M1269.2 483.3h0M1269.3 501.5h0M1269.3 486.4h0M1269.4 476.3h0M1270 491h0M1270 486.6h0M1270.5 480.7h0M1270.7 481.8h0M1270.8 481.4h0M1271.4 484.7h0M1271.7 494.3h0M1271.9 472.2h0M1272.2 487.9h0M1273.3 492.3h0M1273.5 508.6h0M1274 505.3h0M1274.2 481.6h0M1274.2 497.7h0M1274.3 495.5h0M1274.3 492.3h0M1275 500.3h0M1275.1 488.2h0M1275.1 490h0M1275.3 507.5h0M1276.4 483.6h0M1276.6 501.1h0M1276.6 503.8h0M1276.7 501.7h0M1277.3 508.4h0M1277.9 498.5h0M1277.9 505.9h0M1278.4 510h0M1278.6 510.5h0M1278.8 506.8h0M1280.4 499.7h0M1280.5 498.2h0M1280.8 503.2h0M1280.9 500h0M1281.4 535.8h0M1282.1 512.7h0M1282.3 490h0M1282.4 515.6h0M1283 502.2h0M1283 515.3h0M1283.6 507.6h0M1283.9 523.1h0M1284.1 506.6h0M1284.2 521.1h0M1284.6 515.4h0M1284.6 515.7h0M1285.1 544.2h0M1285.4 513.7h0M1286.3 516.2h0M1287.1 511.4h0M1287.9 506.5h0M1287.9 528.5h0M1288 540.5h0M1288.4 530.1h0M1288.5 516.5h0M1288.8 516.6h0M1288.9 513.3h0M1289.3 538.8h0M1289.4 504.6h0M1289.5 548.9h0M1289.6 541.5h0M1289.7 503.3h0M1290.2 510.3h0M1291.2 495.3h0M1291.5 553.2h0M1291.7 570.4h0M1293.2 531.8h0M1293.4 523.3h0M1293.5 510.8h0M1293.9 511h0M1294.9 531.4h0M1295.1 535.3h0M1295.4 532h0M1295.7 546.4h0M1295.8 539.1h0M1296.7 535.3h0M1297.6 545.6h0M1297.8 540.2h0M1297.9 535.7h0M1298.7 539.3h0M1299.2 542.3h0M1300.6 539.9h0M1300.7 531.8h0M1300.8 530.9h0M1301.4 559.9h0M1301.8 538.4h0M1302.6 532.6h0M1303.6 527.6h0M1303.6 507.1h0M1303.8 532.2h0M1303.9 530.7h0" stroke="#000" stroke-width="3.6" stroke-linecap="round" fill="none"/>
<path d="M251.4 626.2h0M833.5 454.2h0M1080.5 453.8h0M1217.5 457.4h0M1234.2 446.2h0M1236.1 446.2h0M1242.3 457.4h0M1245.4 452.6h0M1272.4 595.1h0" stroke="#ffa500" stroke-width="3.3" stroke-linecap="round" fill="none"/>
<path d="M227.5 661h5.8l-2.9 4.8z" fill="#ffa500"/>
<path d="M245.6 661h5.8l-2.9 4.8z" fill="#ffa500"/>
<path d="M1303 666.4V380.6" stroke="#800080" stroke-width="2.08" stroke-dasharray="2.08 3.44" stroke-dashoffset="-0.45"/>
<rect x="100.5" y="499.1" width="1260.5" height="48.6" fill="#ff0000" fill-opacity="0.12" stroke="#ff0000" stroke-opacity="0.12" stroke-width="1.39"/>
<rect x="162.6" y="499.1" width="1141" height="48.6" fill="#ffa500" fill-opacity="0.12" stroke="#ffa500" stroke-opacity="0.12" stroke-width="1.39"/>
<path d="M162.4 524.3H1304.3" stroke="#ffa500" stroke-width="2.08"/>
<path d="M162.1 666.4V380.6" stroke="#800080" stroke-width="2.08" stroke-dasharray="2.08 3.44" stroke-dashoffset="-0.45"/>
<path d="M105.5 523H1361" stroke="#ff0000" stroke-width="2.08"/>
</g>
<rect x="105.5" y="380.6" width="1380" height="285.8" fill="none" stroke="#000" stroke-width="1.1"/>
<path d="M162.5 666.4v4.86" stroke="#000" stroke-width="1.1"/><text x="158.53" y="686.70" font-size="13.89" textLength="8.15" lengthAdjust="spacingAndGlyphs">0</text><path d="M356.5 666.4v4.86" stroke="#000" stroke-width="1.1"/><text x="343.22" y="686.70" font-size="13.89" textLength="25.74" lengthAdjust="spacingAndGlyphs">500</text><path d="M549.5 666.4v4.86" stroke="#000" stroke-width="1.1"/><text x="531.96" y="686.70" font-size="13.89" textLength="34.71" lengthAdjust="spacingAndGlyphs">1000</text><path d="M743.5 666.4v4.86" stroke="#000" stroke-width="1.1"/><text x="725.46" y="686.70" font-size="13.89" textLength="34.71" lengthAdjust="spacingAndGlyphs">1500</text><path d="M936.5 666.4v4.86" stroke="#000" stroke-width="1.1"/><text x="919.11" y="686.70" font-size="13.89" textLength="34.82" lengthAdjust="spacingAndGlyphs">2000</text><path d="M1130.5 666.4v4.86" stroke="#000" stroke-width="1.1"/><text x="1112.61" y="686.70" font-size="13.89" textLength="34.82" lengthAdjust="spacingAndGlyphs">2500</text><path d="M1323.5 666.4v4.86" stroke="#000" stroke-width="1.1"/><text x="1306.32" y="686.70" font-size="13.89" textLength="34.58" lengthAdjust="spacingAndGlyphs">3000</text>
<path d="M105.5 654.5h-4.86" stroke="#000" stroke-width="1.1"/><text x="64.61" y="659.00" font-size="13.89" textLength="30.25" lengthAdjust="spacingAndGlyphs">7.84</text><path d="M105.5 603.5h-4.86" stroke="#000" stroke-width="1.1"/><text x="64.70" y="608.50" font-size="13.89" textLength="30.39" lengthAdjust="spacingAndGlyphs">7.86</text><path d="M105.5 553.5h-4.86" stroke="#000" stroke-width="1.1"/><text x="64.77" y="558.00" font-size="13.89" textLength="30.30" lengthAdjust="spacingAndGlyphs">7.88</text><path d="M105.5 502.5h-4.86" stroke="#000" stroke-width="1.1"/><text x="64.74" y="507.50" font-size="13.89" textLength="30.27" lengthAdjust="spacingAndGlyphs">7.90</text><path d="M105.5 452.5h-4.86" stroke="#000" stroke-width="1.1"/><text x="65.22" y="457.00" font-size="13.89" textLength="29.95" lengthAdjust="spacingAndGlyphs">7.92</text><path d="M105.5 401.5h-4.86" stroke="#000" stroke-width="1.1"/><text x="64.61" y="406.50" font-size="13.89" textLength="30.25" lengthAdjust="spacingAndGlyphs">7.94</text>
<text x="706.81" y="372.00" font-size="16.67" textLength="175.70" lengthAdjust="spacingAndGlyphs">Magnitude Estimates</text>
<text x="710.92" y="657.00" font-size="13.89" textLength="43.68" lengthAdjust="spacingAndGlyphs">42206</text>
<rect x="1365.4" y="387.6" width="113.3" height="48" rx="2.8" fill="#fff" fill-opacity="0.8" stroke="#cccccc" stroke-width="1.1"/>
<path d="M1369 399.5H1400" stroke="#ffa500" stroke-width="2.8"/>
<path d="M1369 421.9H1399" stroke="#ff0000" stroke-width="2.08"/>
<text x="1409.37" y="403.80" font-size="13.89" textLength="30.37" lengthAdjust="spacingAndGlyphs">mag</text>
<text x="1439.76" y="406.00" font-size="10.3" textLength="30.84" lengthAdjust="spacingAndGlyphs" font-style="italic">OBSID</text>
<text x="1408.47" y="426.70" font-size="13.89" textLength="30.37" lengthAdjust="spacingAndGlyphs">mag</text>
<rect x="1348.5" y="613.6" width="130" height="45.6" rx="2.8" fill="#fff" fill-opacity="0.8" stroke="#cccccc" stroke-width="1.1"/>
<path d="M1367.4 626.4h0" stroke="#ffa500" stroke-width="3.5" stroke-linecap="round" fill="none"/>
<path d="M1367.4 647.4h0" stroke="#000" stroke-width="3.5" stroke-linecap="round" fill="none"/>
<text x="1392.39" y="630.00" font-size="13.89" textLength="79.79" lengthAdjust="spacingAndGlyphs">Highlighted</text>
<text x="1393.04" y="651.00" font-size="13.89" textLength="20.36" lengthAdjust="spacingAndGlyphs">OK</text>
<path d="M105.5 763.3H1485.5" stroke="#b0b0b0" stroke-width="1.1" stroke-dasharray="1.11 1.83"/>
<path d="M105.5 802.3H1485.5" stroke="#b0b0b0" stroke-width="1.1" stroke-dasharray="1.11 1.83"/>
<path d="M105.5 840.4H1485.5" stroke="#b0b0b0" stroke-width="1.1" stroke-dasharray="1.11 1.83"/>
<path d="M105.5 878.4H1485.5" stroke="#b0b0b0" stroke-width="1.1" stroke-dasharray="1.11 1.83"/>
<path d="M105.5 916.4H1485.5" stroke="#b0b0b0" stroke-width="1.1" stroke-dasharray="1.11 1.83"/>
<path d="M105.5 763.5h-4.86" stroke="#000" stroke-width="1.1"/>
<text x="17.07" y="767.90" font-size="13.89" textLength="78.85" lengthAdjust="spacingAndGlyphs">not Kalman</text>
<path d="M105.5 802.5h-4.86" stroke="#000" stroke-width="1.1"/>
<text x="32.63" y="806.90" font-size="13.89" textLength="62.25" lengthAdjust="spacingAndGlyphs">not track</text>
<path d="M105.5 840.5h-4.86" stroke="#000" stroke-width="1.1"/>
<text x="38.63" y="845.00" font-size="13.89" textLength="57.70" lengthAdjust="spacingAndGlyphs">Ion. rad.</text>
<path d="M105.5 878.5h-4.86" stroke="#000" stroke-width="1.1"/>
<text x="52.33" y="883.00" font-size="13.89" textLength="43.27" lengthAdjust="spacingAndGlyphs">dr &gt; 5</text>
<path d="M105.5 916.5h-4.86" stroke="#000" stroke-width="1.1"/>
<text x="14.05" y="920.95" font-size="13.89" textLength="81.02" lengthAdjust="spacingAndGlyphs">OBS not OK</text>
<path d="M162 763.3h0M163.2 763.3h0M164.4 763.3h0M165.6 763.3h0M166.8 763.3h0M168 763.3h0M169.2 763.3h0M170.4 763.3h0M171.6 763.3h0M172.8 763.3h0M174 763.3h0M175.2 763.3h0M176.4 763.3h0M177.6 763.3h0M856.3 763.3h0M857.5 763.3h0M858.7 763.3h0M859.9 763.3h0M861.1 763.3h0M862.3 763.3h0M863.5 763.3h0M864.7 763.3h0M865.9 763.3h0M867.1 763.3h0M868.3 763.3h0M869.5 763.3h0M870.7 763.3h0M871.9 763.3h0M873.1 763.3h0M874.3 763.3h0M875.5 763.3h0M876.7 763.3h0M877.9 763.3h0M879.1 763.3h0M880.3 763.3h0M881.5 763.3h0M882.7 763.3h0M883.9 763.3h0M885.1 763.3h0M886.3 763.3h0M887.5 763.3h0M888.7 763.3h0M889.9 763.3h0M891.1 763.3h0M892.3 763.3h0M893.5 763.3h0M894.7 763.3h0M895.9 763.3h0M897.1 763.3h0M898.3 763.3h0M899.5 763.3h0M900.7 763.3h0M901.9 763.3h0M903.1 763.3h0M904.3 763.3h0M905.5 763.3h0M906.7 763.3h0M907.9 763.3h0M909.1 763.3h0M910.3 763.3h0M911.5 763.3h0M912.7 763.3h0M913.9 763.3h0M915.1 763.3h0M916.3 763.3h0M917.5 763.3h0M918.7 763.3h0M919.9 763.3h0M921.1 763.3h0M922.3 763.3h0M923.5 763.3h0M924.7 763.3h0M925.9 763.3h0M927.1 763.3h0M928.3 763.3h0M929.5 763.3h0M930.7 763.3h0M931.9 763.3h0M933.1 763.3h0M934.3 763.3h0M935.5 763.3h0M936.7 763.3h0M937.9 763.3h0M939.1 763.3h0M940.3 763.3h0M941.5 763.3h0M942.7 763.3h0M943.9 763.3h0M945.1 763.3h0M946.3 763.3h0M947.5 763.3h0M948.7 763.3h0M949.9 763.3h0M951.1 763.3h0M952.3 763.3h0M953.5 763.3h0M954.7 763.3h0M955.9 763.3h0M957.1 763.3h0M958.3 763.3h0M959.5 763.3h0M960.7 763.3h0M961.9 763.3h0M963.1 763.3h0M964.3 763.3h0M965.5 763.3h0M966.7 763.3h0M967.9 763.3h0M969.1 763.3h0M970.3 763.3h0M971.5 763.3h0M972.7 763.3h0M973.9 763.3h0M975.1 763.3h0M976.3 763.3h0M977.5 763.3h0M978.7 763.3h0M979.9 763.3h0M981.1 763.3h0M982.3 763.3h0M983.5 763.3h0M984.7 763.3h0M985.9 763.3h0M987.1 763.3h0M988.3 763.3h0M989.5 763.3h0M990.7 763.3h0M991.9 763.3h0M993.1 763.3h0M994.3 763.3h0M995.5 763.3h0M996.7 763.3h0M997.9 763.3h0M999.1 763.3h0M1000.3 763.3h0M1001.5 763.3h0M1002.7 763.3h0M1003.9 763.3h0M1005.1 763.3h0M1006.3 763.3h0M1007.5 763.3h0M1008.7 763.3h0M1009.9 763.3h0M1011.1 763.3h0M1012.3 763.3h0M1013.5 763.3h0M1014.7 763.3h0" stroke="#000" stroke-width="3.4" stroke-linecap="round" fill="none"/>
<path d="M162.6 763.3H178.1M856.5 763.3H1014.6" stroke="#fff" stroke-width="0.9" stroke-dasharray="1.2 1.2"/>
<circle cx="204.3" cy="840.4" r="1.15" fill="none" stroke="#000" stroke-width="1.25"/><circle cx="214.4" cy="840.4" r="1.15" fill="none" stroke="#000" stroke-width="1.25"/><circle cx="238.3" cy="840.4" r="1.15" fill="none" stroke="#000" stroke-width="1.25"/><circle cx="545.4" cy="840.4" r="1.15" fill="none" stroke="#000" stroke-width="1.25"/><circle cx="578.3" cy="840.4" r="1.15" fill="none" stroke="#000" stroke-width="1.25"/>
<circle cx="204.3" cy="878.4" r="1.15" fill="none" stroke="#000" stroke-width="1.25"/><circle cx="214.4" cy="878.4" r="1.15" fill="none" stroke="#000" stroke-width="1.25"/><circle cx="238.3" cy="878.4" r="1.15" fill="none" stroke="#000" stroke-width="1.25"/><circle cx="545.4" cy="878.4" r="1.15" fill="none" stroke="#000" stroke-width="1.25"/><circle cx="578.3" cy="878.4" r="1.15" fill="none" stroke="#000" stroke-width="1.25"/>
<path d="M105.5 725.5H1485.5" stroke="#000" stroke-width="1.1"/>
<path d="M105.5 725.5V954.4 M1485.5 725.5V954.4" stroke="#000" stroke-width="1.1"/>
<path d="M105.5 1009.5H1485.5" stroke="#b0b0b0" stroke-width="1.1" stroke-dasharray="1.11 1.83"/>
<path d="M105.5 983.5H1485.5" stroke="#b0b0b0" stroke-width="1.1" stroke-dasharray="1.11 1.83"/>
<path d="M105.5 957.5H1485.5" stroke="#b0b0b0" stroke-width="1.1" stroke-dasharray="1.11 1.83"/>
<path d="M176.5 1005.3h0M177 1006.6h0M177.5 1006.5h0M178 1006.7h0M178.4 1006.7h0M178.9 1006.1h0M179.4 1004.8h0M179.9 1005.3h0M180.4 1006.5h0M180.9 1006.8h0M181.4 1006.8h0M181.9 1006.1h0M182.3 1006.6h0M182.8 1006.4h0M183.3 1006.5h0M183.8 1004.9h0M184.3 1005.8h0M184.8 1007.5h0M185.3 1007.9h0M185.8 1007.3h0M186.2 1006.8h0M186.7 1007.8h0M187.2 1007.8h0M187.7 1007.6h0M188.2 1007.8h0M188.7 1006.8h0M189.2 1005.9h0M189.7 1006.5h0M190.1 1007.4h0M190.6 1008.3h0M191.1 1006.7h0M191.6 1004.8h0M192.1 1003.6h0M192.6 1003.2h0M193.1 1001.8h0M193.5 1002.9h0M194 1003.6h0M194.5 1004.3h0M195 1004.6h0M195.5 1004.4h0M196 1005.1h0M196.5 1005.9h0M197 1005.3h0M197.4 1006.1h0M197.9 1007.3h0M198.4 1007.6h0M198.9 1007.3h0M199.4 1007.4h0M199.9 1007.7h0M200.4 1006.1h0M200.9 1007h0M201.3 1006.6h0M201.8 1006.3h0M202.3 1006.9h0M202.8 1006.5h0M203.3 1006.7h0M203.8 1006.2h0M204.3 1005.8h0M204.8 1005.1h0M205.2 1004.1h0M205.7 1003.9h0M206.2 1005.1h0M206.7 1004.5h0M207.2 1004.3h0M207.7 1005.1h0M208.2 1004.2h0M208.7 1005.1h0M209.1 1005.9h0M209.6 1005.8h0M210.1 1007.3h0M210.6 1007.3h0M211.1 1006.4h0M211.6 1006.1h0M212.1 1006.4h0M212.5 1006h0M213 1005.7h0M213.5 1006.2h0M214 1006.1h0M214.5 1006.5h0M215 1006h0M215.5 1006.4h0M216 1007.4h0M216.4 1006.9h0M216.9 1006.2h0M217.4 1006.3h0M217.9 1006.7h0M218.4 1007.2h0M218.9 1008.1h0M219.4 1008h0M219.9 1007.1h0M220.3 1006.3h0M220.8 1006.5h0M221.3 1007.5h0M221.8 1007.3h0M222.3 1007.4h0M222.8 1008.3h0M223.3 1007.8h0M223.8 1007.9h0M224.2 1006.5h0M224.7 1006.8h0M225.2 1006.7h0M225.7 1006.3h0M226.2 1005.4h0M226.7 1005.5h0M227.2 1005.9h0M227.6 1004.8h0M228.1 1004.1h0M228.6 1004.6h0M229.1 1004.9h0M229.6 1005.3h0M230.1 1005.7h0M230.6 1004.9h0M231.1 1004.3h0M231.5 1005.3h0M232 1005.8h0M232.5 1005.4h0M233 1005.5h0M233.5 1005.1h0M234 1005.5h0M234.5 1006.4h0M235 1004.7h0M235.4 1004.5h0M235.9 1003.5h0M236.4 1002.7h0M236.9 1003.2h0M237.4 1005h0M237.9 1004.9h0M238.4 1005.2h0M238.9 1005.8h0M239.3 1004.8h0M239.8 1004h0M240.3 1003.8h0M240.8 1003.1h0M241.3 1003.5h0M241.8 1004.7h0M242.3 1005.3h0M242.8 1004.6h0M243.2 1004.5h0M243.7 1005.6h0M244.2 1005.7h0M244.7 1005.4h0M245.2 1005.6h0M245.7 1003.5h0M246.2 1003.8h0M246.6 1003.2h0M247.1 1004h0M247.6 1004.8h0M248.1 1005.9h0M248.6 1006.2h0M249.1 1004.8h0M249.6 1005.5h0M250.1 1004.5h0M250.5 1005.6h0M251 1005.2h0M251.5 1004.2h0M252 1004.1h0M252.5 1004.6h0M253 1006.2h0M253.5 1007h0M254 1007.4h0M254.4 1006.2h0M254.9 1005.1h0M255.4 1006.7h0M255.9 1005.7h0M256.4 1005h0M256.9 1005.8h0M257.4 1004.3h0M257.9 1005.9h0M258.3 1006h0M258.8 1006.2h0M259.3 1007.3h0M259.8 1005.5h0M260.3 1006.1h0M260.8 1007.5h0M261.3 1006.7h0M261.7 1006.1h0M262.2 1005.2h0M262.7 1005h0M263.2 1006.1h0M263.7 1005.8h0M264.2 1004.7h0M264.7 1005.3h0M265.2 1005.5h0M265.6 1005.8h0M266.1 1005.6h0M266.6 1005.4h0M267.1 1005.9h0M267.6 1005h0M268.1 1002.2h0M268.6 1001.9h0M269.1 1001.7h0M269.5 1003.3h0M270 1005.9h0M270.5 1006.3h0M271 1006.6h0M271.5 1006.6h0M272 1007.2h0M272.5 1006.2h0M273 1005.5h0M273.4 1006.2h0M273.9 1005.7h0M274.4 1006.1h0M274.9 1005.5h0M275.4 1005.1h0M275.9 1005.7h0M276.4 1006.1h0M276.8 1005.2h0M277.3 1004.4h0M277.8 1004.5h0M278.3 1004.9h0M278.8 1004.9h0M279.3 1005.5h0M279.8 1006.6h0M280.3 1005.9h0M280.7 1005.9h0M281.2 1005h0M281.7 1005.4h0M282.2 1005.4h0M282.7 1006h0M283.2 1005h0M283.7 1005.1h0M284.2 1004.5h0M284.6 1004.5h0M285.1 1004.5h0M285.6 1004.1h0M286.1 1004.7h0M286.6 1004.6h0M287.1 1004.1h0M287.6 1005h0M288.1 1006.2h0M288.5 1005h0M289 1005.4h0M289.5 1006.1h0M290 1005.3h0M290.5 1005.5h0M291 1006.3h0M291.5 1006.8h0M292 1005.9h0M292.4 1005.4h0M292.9 1005.1h0M293.4 1004.3h0M293.9 1003.6h0M294.4 1005h0M294.9 1004.1h0M295.4 1004.8h0M295.8 1005.8h0M296.3 1006h0M296.8 1005.5h0M297.3 1006.1h0M297.8 1007.2h0M298.3 1007h0M298.8 1006.7h0M299.3 1005.8h0M299.7 1005.3h0M300.2 1005.9h0M300.7 1006.5h0M301.2 1005.8h0M301.7 1005.2h0M302.2 1006h0M302.7 1006.7h0M303.2 1006.5h0M303.6 1005.9h0M304.1 1007.1h0M304.6 1005.5h0M305.1 1006.4h0M305.6 1005.8h0M306.1 1006h0M306.6 1006.1h0M307.1 1005.1h0M307.5 1005.5h0M308 1005.7h0M308.5 1005.5h0M309 1005.4h0M309.5 1005.4h0M310 1006.6h0M310.5 1007.2h0M310.9 1006.8h0M311.4 1006.9h0M311.9 1007.8h0M312.4 1006.4h0M312.9 1006.8h0M313.4 1006.6h0M313.9 1006.2h0M314.4 1006.2h0M314.8 1006.8h0M315.3 1006.8h0M315.8 1005.8h0M316.3 1006.3h0M316.8 1006.4h0M317.3 1007.1h0M317.8 1006.7h0M318.3 1007.1h0M318.7 1007.5h0M319.2 1007.2h0M319.7 1004.6h0M320.2 1004.6h0M320.7 1005.7h0M321.2 1006.4h0M321.7 1005h0M322.2 1005.5h0M322.6 1005h0M323.1 1004.6h0M323.6 1004.8h0M324.1 1004.6h0M324.6 1005.4h0M325.1 1005.1h0M325.6 1005.5h0M326.1 1004.4h0M326.5 1004h0M327 1003.1h0M327.5 1003.7h0M328 1004.1h0M328.5 1003.7h0M329 1004h0M329.5 1003.7h0M329.9 1004h0M330.4 1004.7h0M330.9 1004h0M331.4 1004.5h0M331.9 1005.3h0M332.4 1004.3h0M332.9 1005.5h0M333.4 1006h0M333.8 1006.2h0M334.3 1007h0M334.8 1006.1h0M335.3 1006.1h0M335.8 1005.3h0M336.3 1004.8h0M336.8 1004.7h0M337.3 1004.7h0M337.7 1004.5h0M338.2 1004.6h0M338.7 1004.3h0M339.2 1004.8h0M339.7 1004.8h0M340.2 1002.8h0M340.7 1003.2h0M341.2 1003h0M341.6 1003.2h0M342.1 1005.7h0M342.6 1006.2h0M343.1 1006.3h0M343.6 1006.2h0M344.1 1007.6h0M344.6 1006.5h0M345 1007.7h0M345.5 1006.5h0M346 1007h0M346.5 1006.6h0M347 1007.3h0M347.5 1007.5h0M348 1007.2h0M348.5 1006.8h0M348.9 1006.6h0M349.4 1006h0M349.9 1006.4h0M350.4 1006.5h0M350.9 1006.2h0M351.4 1007.1h0M351.9 1006h0M352.4 1005.3h0M352.8 1005.7h0M353.3 1005.5h0M353.8 1006.3h0M354.3 1007h0M354.8 1007.8h0M355.3 1007.1h0M355.8 1006.7h0M356.3 1006.7h0M356.7 1005.6h0M357.2 1007.1h0M357.7 1006.2h0M358.2 1006.9h0M358.7 1007.6h0M359.2 1006.2h0M359.7 1005.8h0M360.1 1006.9h0M360.6 1006.7h0M361.1 1006.4h0M361.6 1007.4h0M362.1 1007h0M362.6 1006.6h0M363.1 1006.9h0M363.6 1008h0M364 1007.5h0M364.5 1007.1h0M365 1006.9h0M365.5 1006.9h0M366 1007.3h0M366.5 1005.8h0M367 1006.2h0M367.5 1006.6h0M367.9 1006.4h0M368.4 1006.1h0M368.9 1006.3h0M369.4 1007.1h0M369.9 1006.9h0M370.4 1007.2h0M370.9 1006.7h0M371.4 1007.8h0M371.8 1008.7h0M372.3 1007.8h0M372.8 1007.5h0M373.3 1008.7h0M373.8 1008.2h0M374.3 1006.9h0M374.8 1007.1h0M375.3 1007.2h0M375.7 1007.6h0M376.2 1006.7h0M376.7 1008.5h0M377.2 1008.1h0M377.7 1007.2h0M378.2 1006.8h0M378.7 1006.6h0M379.1 1006.3h0M379.6 1006.9h0M380.1 1006.8h0M380.6 1006.3h0M381.1 1005.4h0M381.6 1005.7h0M382.1 1006.7h0M382.6 1006.7h0M383 1005.8h0M383.5 1006.9h0M384 1006.4h0M384.5 1006.9h0M385 1007.7h0M385.5 1007.2h0M386 1006.6h0M386.5 1005.4h0M386.9 1007.5h0M387.4 1007.5h0M387.9 1008h0M388.4 1006.7h0M388.9 1007.5h0M389.4 1007.6h0M389.9 1007h0M390.4 1006.1h0M390.8 1005.8h0M391.3 1006.9h0M391.8 1007.5h0M392.3 1006.5h0M392.8 1007h0M393.3 1006.3h0M393.8 1006.6h0M394.2 1006.8h0M394.7 1007.1h0M395.2 1006.4h0M395.7 1006.1h0M396.2 1005.9h0M396.7 1005.2h0M397.2 1006h0M397.7 1006h0M398.1 1006.6h0M398.6 1006.7h0M399.1 1006.3h0M399.6 1005.6h0M400.1 1005.3h0M400.6 1004.9h0M401.1 1005.1h0M401.6 1005.5h0M402 1006h0M402.5 1006.3h0M403 1005.1h0M403.5 1006h0M404 1005.3h0M404.5 1005.5h0M405 1006.5h0M405.5 1006.4h0M405.9 1007.2h0M406.4 1006.8h0M406.9 1007h0M407.4 1007.6h0M407.9 1006.6h0M408.4 1006.8h0M408.9 1007.1h0M409.3 1005.7h0M409.8 1005.4h0M410.3 1006.2h0M410.8 1006.2h0M411.3 1005.8h0M411.8 1006.9h0M412.3 1007h0M412.8 1006.7h0M413.2 1006.7h0M413.7 1006h0M414.2 1006.4h0M414.7 1006.5h0M415.2 1006.5h0M415.7 1006h0M416.2 1005.6h0M416.7 1006.8h0M417.1 1007.8h0M417.6 1006.8h0M418.1 1007.1h0M418.6 1007.2h0M419.1 1006.7h0M419.6 1006.7h0M420.1 1005.8h0M420.6 1006.5h0M421 1008h0M421.5 1007.2h0M422 1006.8h0M422.5 1006.8h0M423 1006.8h0M423.5 1005.6h0M424 1005.6h0M424.5 1005.7h0M424.9 1005.4h0M425.4 1005.8h0M425.9 1005.4h0M426.4 1005.7h0M426.9 1005.6h0M427.4 1005.4h0M427.9 1004.4h0M428.3 1005.6h0M428.8 1004h0M429.3 1004.8h0M429.8 1005h0M430.3 1004.3h0M430.8 1005.3h0M431.3 1005.8h0M431.8 1006h0M432.2 1006.5h0M432.7 1006.9h0M433.2 1006.4h0M433.7 1006.4h0M434.2 1006.1h0M434.7 1005.9h0M435.2 1007.4h0M435.7 1007h0M436.1 1008h0M436.6 1007.1h0M437.1 1006.9h0M437.6 1008.4h0M438.1 1006.6h0M438.6 1006.7h0M439.1 1006.4h0M439.6 1007.2h0M440 1007.9h0M440.5 1006.9h0M441 1006.5h0M441.5 1006.7h0M442 1007.7h0M442.5 1006.4h0M443 1006.8h0M443.4 1007.8h0M443.9 1007.6h0M444.4 1006.7h0M444.9 1007h0M445.4 1006.6h0M445.9 1007.3h0M446.4 1007h0M446.9 1007.6h0M447.3 1007.1h0M447.8 1007.9h0M448.3 1007.5h0M448.8 1007.6h0M449.3 1007.7h0M449.8 1007.9h0M450.3 1007.5h0M450.8 1007.1h0M451.2 1007.2h0M451.7 1007.2h0M452.2 1007.9h0M452.7 1008.7h0M453.2 1008.5h0M453.7 1008.2h0M454.2 1008.4h0M454.7 1008.7h0M455.1 1008.6h0M455.6 1008.9h0M456.1 1007.9h0M456.6 1008.3h0M457.1 1007.2h0M457.6 1008.4h0M458.1 1008.9h0M458.6 1008.9h0M459 1008.9h0M459.5 1008.4h0M460 1006.4h0M460.5 1007.8h0M461 1007.9h0M461.5 1007.7h0M462 1007.7h0M462.4 1006.5h0M462.9 1008.1h0M463.4 1007h0M463.9 1007.2h0M464.4 1006.8h0M464.9 1007h0M465.4 1007.3h0M465.9 1007h0M466.3 1008.1h0M466.8 1008.1h0M467.3 1008.8h0M467.8 1008.7h0M468.3 1008.7h0M468.8 1007.8h0M469.3 1007.2h0M469.8 1007.6h0M470.2 1007.1h0M470.7 1006.6h0M471.2 1006.7h0M471.7 1007.7h0M472.2 1007.9h0M472.7 1007.9h0M473.2 1007.8h0M473.7 1007h0M474.1 1006.9h0M474.6 1006.3h0M475.1 1006.5h0M475.6 1007.3h0M476.1 1006.8h0M476.6 1006h0M477.1 1006h0M477.5 1007.3h0M478 1008.2h0M478.5 1007.4h0M479 1006.5h0M479.5 1007h0M480 1006.6h0M480.5 1006.8h0M481 1007.6h0M481.4 1006.5h0M481.9 1006.2h0M482.4 1005.4h0M482.9 1004.9h0M483.4 1004.8h0M483.9 1003.6h0M484.4 1003.4h0M484.9 1005.4h0M485.3 1006.5h0M485.8 1006.3h0M486.3 1006.1h0M486.8 1006h0M487.3 1007.6h0M487.8 1008.9h0M488.3 1008.6h0M488.8 1007.6h0M489.2 1008.9h0M489.7 1008.9h0M490.2 1008.9h0M490.7 1008.9h0M491.2 1007.7h0M491.7 1008.2h0M492.2 1008.9h0M492.6 1008.9h0M493.1 1008.3h0M493.6 1006.6h0M494.1 1006.8h0M494.6 1006.3h0M495.1 1006.8h0M495.6 1005.8h0M496.1 1006.8h0M496.5 1007.1h0M497 1007.4h0M497.5 1006.9h0M498 1006.9h0M498.5 1007.4h0M499 1006.9h0M499.5 1007.4h0M500 1007.2h0M500.4 1007.2h0M500.9 1006.7h0M501.4 1007.7h0M501.9 1007.4h0M502.4 1007.7h0M502.9 1006.7h0M503.4 1006.5h0M503.9 1005.8h0M504.3 1005.9h0M504.8 1005.9h0M505.3 1006.8h0M505.8 1006.4h0M506.3 1006.9h0M506.8 1006.1h0M507.3 1005.7h0M507.8 1005.4h0M508.2 1005.7h0M508.7 1006h0M509.2 1005.2h0M509.7 1004.9h0M510.2 1004.7h0M510.7 1006.5h0M511.2 1007.6h0M511.6 1007h0M512.1 1006.8h0M512.6 1007.5h0M513.1 1008.3h0M513.6 1008h0M514.1 1007.4h0M514.6 1007.6h0M515.1 1007.5h0M515.5 1006.2h0M516 1006.4h0M516.5 1005.7h0M517 1006.1h0M517.5 1006.2h0M518 1006.6h0M518.5 1006.1h0M519 1006.5h0M519.4 1005.9h0M519.9 1005.4h0M520.4 1005.5h0M520.9 1005.6h0M521.4 1006h0M521.9 1005.7h0M522.4 1005.9h0M522.9 1007.3h0M523.3 1007.8h0M523.8 1006.1h0M524.3 1006.1h0M524.8 1006.3h0M525.3 1005.9h0M525.8 1006.5h0M526.3 1006h0M526.7 1005.1h0M527.2 1006.1h0M527.7 1006.1h0M528.2 1005.8h0M528.7 1006h0M529.2 1006.3h0M529.7 1006.1h0M530.2 1006.9h0M530.6 1007.5h0M531.1 1007.1h0M531.6 1005.9h0M532.1 1006.6h0M532.6 1006.5h0M533.1 1005.7h0M533.6 1006h0M534.1 1005h0M534.5 1003.1h0M535 1003.2h0M535.5 1003.1h0M536 1003.4h0M536.5 1005.4h0M537 1005.6h0M537.5 1005.5h0M538 1005.1h0M538.4 1004.6h0M538.9 1005.9h0M539.4 1006h0M539.9 1005.8h0M540.4 1005.3h0M540.9 1005.8h0M541.4 1006.9h0M541.9 1006.3h0M542.3 1007.1h0M542.8 1006.8h0M543.3 1006.3h0M543.8 1006.2h0M544.3 1005.6h0M544.8 1006h0M545.3 1005.9h0M545.7 1006.8h0M546.2 1007.9h0M546.7 1007.2h0M547.2 1007.1h0M547.7 1006.3h0M548.2 1006.4h0M548.7 1007.1h0M549.2 1006h0M549.6 1006.4h0M550.1 1005.9h0M550.6 1005h0M551.1 1005.9h0M551.6 1004.7h0M552.1 1006h0M552.6 1006.4h0M553.1 1007h0M553.5 1006.2h0M554 1006.7h0M554.5 1007.6h0M555 1008.2h0M555.5 1006.3h0M556 1006.4h0M556.5 1005.5h0M557 1005.9h0M557.4 1006h0M557.9 1005.7h0M558.4 1006.5h0M558.9 1005.5h0M559.4 1005.3h0M559.9 1005h0M560.4 1004.9h0M560.8 1005.5h0M561.3 1004.8h0M561.8 1003.1h0M562.3 1002.1h0M562.8 1003.7h0M563.3 1005.6h0M563.8 1005.2h0M564.3 1005.3h0M564.7 1005h0M565.2 1004.9h0M565.7 1004.9h0M566.2 1005.3h0M566.7 1006.5h0M567.2 1007h0M567.7 1006.5h0M568.2 1006h0M568.6 1005.1h0M569.1 1005.8h0M569.6 1005.4h0M570.1 1006.2h0M570.6 1006.1h0M571.1 1004.5h0M571.6 1005.2h0M572.1 1005.9h0M572.5 1004h0M573 1004.3h0M573.5 1004.9h0M574 1006.7h0M574.5 1006h0M575 1005.5h0M575.5 1005.4h0M575.9 1006h0M576.4 1004.5h0M576.9 1004.4h0M577.4 1005.7h0M577.9 1006h0M578.4 1005.9h0M578.9 1006.7h0M579.4 1006.4h0M579.8 1006.4h0M580.3 1006.3h0M580.8 1005.8h0M581.3 1004.7h0M581.8 1006.5h0M582.3 1006.2h0M582.8 1006.1h0M583.3 1005.6h0M583.7 1005.5h0M584.2 1005.5h0M584.7 1006.9h0M585.2 1007.5h0M585.7 1007.1h0M586.2 1006.4h0M586.7 1007.6h0M587.2 1007.2h0M587.6 1007.7h0M588.1 1006.2h0M588.6 1006.5h0M589.1 1005.7h0M589.6 1006.2h0M590.1 1006.3h0M590.6 1007.3h0M591.1 1007.3h0M591.5 1007.5h0M592 1007.9h0M592.5 1007.2h0M593 1007.4h0M593.5 1007h0M594 1006.9h0M594.5 1006.4h0M594.9 1007.7h0M595.4 1008.2h0M595.9 1008h0M596.4 1007.9h0M596.9 1007.9h0M597.4 1007.8h0M597.9 1006.6h0M598.4 1006.9h0M598.8 1007.5h0M599.3 1008.2h0M599.8 1007.8h0M600.3 1007.8h0M600.8 1008.3h0M601.3 1006h0M601.8 1005.9h0M602.3 1005.6h0M602.7 1007h0M603.2 1007.5h0M603.7 1007.7h0M604.2 1006.9h0M604.7 1006.6h0M605.2 1006.5h0M605.7 1007.6h0M606.2 1008.7h0M606.6 1008.3h0M607.1 1008.6h0M607.6 1007.8h0M608.1 1006.6h0M608.6 1007.2h0M609.1 1006.7h0M609.6 1005.8h0M610 1005h0M610.5 1006h0M611 1007h0M611.5 1006.9h0M612 1007.6h0M612.5 1007.9h0M613 1007.7h0M613.5 1007.4h0M613.9 1007.3h0M614.4 1007.7h0M614.9 1008.3h0M615.4 1007.1h0M615.9 1007.1h0M616.4 1007.9h0M616.9 1007h0M617.4 1007.2h0M617.8 1007.3h0M618.3 1007.2h0M618.8 1007.2h0M619.3 1006.6h0M619.8 1007.5h0M620.3 1008h0M620.8 1008.4h0M621.3 1008.4h0M621.7 1008.1h0M622.2 1007.9h0M622.7 1006.9h0M623.2 1007.5h0M623.7 1007.7h0M624.2 1007.3h0M624.7 1007.3h0M625.2 1007h0M625.6 1007.7h0M626.1 1006.9h0M626.6 1006.7h0M627.1 1006.5h0M627.6 1006.7h0M628.1 1007.4h0M628.6 1007.2h0M629 1006.5h0M629.5 1005.8h0M630 1005.9h0M630.5 1006h0M631 1005.9h0M631.5 1005.6h0M632 1005.2h0M632.5 1005.6h0M632.9 1006h0M633.4 1005.8h0M633.9 1005.9h0M634.4 1006.5h0M634.9 1006.6h0M635.4 1006.6h0M635.9 1007.1h0M636.4 1007.5h0M636.8 1007.8h0M637.3 1006.6h0M637.8 1006.6h0M638.3 1006.4h0M638.8 1005.9h0M639.3 1005.7h0M639.8 1005.3h0M640.3 1006.3h0M640.7 1006.3h0M641.2 1006.2h0M641.7 1005.6h0M642.2 1006.8h0M642.7 1007.2h0M643.2 1007.2h0M643.7 1006.5h0M644.1 1006.6h0M644.6 1006.3h0M645.1 1005.1h0M645.6 1005.5h0M646.1 1004.8h0M646.6 1005.8h0M647.1 1006.3h0M647.6 1005.9h0M648 1006.1h0M648.5 1005.5h0M649 1004.8h0M649.5 1005.6h0M650 1004.9h0M650.5 1005.4h0M651 1006.3h0M651.5 1005.8h0M651.9 1006.1h0M652.4 1005.7h0M652.9 1006.9h0M653.4 1006.2h0M653.9 1006.5h0M654.4 1006.5h0M654.9 1005.7h0M655.4 1005.8h0M655.8 1006.9h0M656.3 1007.1h0M656.8 1006h0M657.3 1005.2h0M657.8 1006h0M658.3 1007.4h0M658.8 1007.9h0M659.2 1006.8h0M659.7 1007.1h0M660.2 1007h0M660.7 1006.6h0M661.2 1006.9h0M661.7 1007.3h0M662.2 1007.8h0M662.7 1007.7h0M663.1 1007.1h0M663.6 1006.5h0M664.1 1005.8h0M664.6 1004.9h0M665.1 1003.7h0M665.6 1003.8h0M666.1 1003.1h0M666.6 1003.8h0M667 1004.3h0M667.5 1006h0M668 1004.7h0M668.5 1003.9h0M669 1004.6h0M669.5 1005.3h0M670 1005.5h0M670.5 1005.2h0M670.9 1006.4h0M671.4 1005.9h0M671.9 1006.8h0M672.4 1006.9h0M672.9 1006.8h0M673.4 1006.9h0M673.9 1007.5h0M674.4 1008.3h0M674.8 1007.9h0M675.3 1007.6h0M675.8 1008.1h0M676.3 1007.1h0M676.8 1007.2h0M677.3 1007.3h0M677.8 1007.6h0M678.2 1008.8h0M678.7 1007.8h0M679.2 1007.7h0M679.7 1007.1h0M680.2 1008.3h0M680.7 1006.7h0M681.2 1006.3h0M681.7 1006.4h0M682.1 1007.2h0M682.6 1006.6h0M683.1 1005.9h0M683.6 1006.8h0M684.1 1006.2h0M684.6 1005.9h0M685.1 1004.7h0M685.6 1004.2h0M686 1004.8h0M686.5 1005.1h0M687 1006.1h0M687.5 1005.7h0M688 1007h0M688.5 1005.6h0M689 1006.6h0M689.5 1005.5h0M689.9 1006.2h0M690.4 1007.4h0M690.9 1006.3h0M691.4 1005.1h0M691.9 1005.2h0M692.4 1005.8h0M692.9 1006.5h0M693.3 1006.6h0M693.8 1006.4h0M694.3 1006.4h0M694.8 1007.2h0M695.3 1006.1h0M695.8 1006.2h0M696.3 1006.4h0M696.8 1005.8h0M697.2 1005.8h0M697.7 1006h0M698.2 1005.3h0M698.7 1004.2h0M699.2 1003.9h0M699.7 1004.8h0M700.2 1005.2h0M700.7 1005.5h0M701.1 1005.8h0M701.6 1005.9h0M702.1 1006.2h0M702.6 1006.1h0M703.1 1005.6h0M703.6 1005.5h0M704.1 1006h0M704.6 1006.4h0M705 1005.3h0M705.5 1004.4h0M706 1005h0M706.5 1005h0M707 1005.3h0M707.5 1005.5h0M708 1005h0M708.4 1005.1h0M708.9 1005.1h0M709.4 1005.1h0M709.9 1004.9h0M710.4 1005.3h0M710.9 1006.2h0M711.4 1005.7h0M711.9 1005h0M712.3 1005.3h0M712.8 1003.7h0M713.3 1003.3h0M713.8 1004.4h0M714.3 1003.8h0M714.8 1003.7h0M715.3 1005.3h0M715.8 1005.6h0M716.2 1005.2h0M716.7 1003.9h0M717.2 1003.9h0M717.7 1002.9h0M718.2 1003.6h0M718.7 1002.7h0M719.2 1003.5h0M719.7 1004.8h0M720.1 1006.6h0M720.6 1006.4h0M721.1 1007.7h0M721.6 1008.1h0M722.1 1006.7h0M722.6 1006.6h0M723.1 1006.3h0M723.6 1006.5h0M724 1006.4h0M724.5 1006.4h0M725 1007.6h0M725.5 1007h0M726 1007h0M726.5 1006.8h0M727 1006.8h0M727.4 1006.6h0M727.9 1005.5h0M728.4 1005.5h0M728.9 1004.7h0M729.4 1005.1h0M729.9 1005.5h0M730.4 1006.1h0M730.9 1007.7h0M731.3 1007.4h0M731.8 1007.4h0M732.3 1006.5h0M732.8 1006.6h0M733.3 1007.1h0M733.8 1006.9h0M734.3 1007.6h0M734.8 1007.2h0M735.2 1007.3h0M735.7 1006.4h0M736.2 1006.6h0M736.7 1006.1h0M737.2 1005.6h0M737.7 1005h0M738.2 1005.5h0M738.7 1003.9h0M739.1 1003.1h0M739.6 1002.4h0M740.1 1001.3h0M740.6 1001.4h0M741.1 1001.5h0M741.6 1000.6h0M742.1 1001.6h0M742.5 1003.4h0M743 1003.9h0M743.5 1005h0M744 1002.8h0M744.5 1003.5h0M745 1003.1h0M745.5 1003.1h0M746 1002h0M746.4 1003.5h0M746.9 1003.9h0M747.4 1004.7h0M747.9 1005.3h0M748.4 1005.6h0M748.9 1006h0M749.4 1004.9h0M749.9 1005.3h0M750.3 1005h0M750.8 1005.9h0M751.3 1007.3h0M751.8 1007.3h0M752.3 1006.9h0M752.8 1006.3h0M753.3 1006.4h0M753.8 1005.2h0M754.2 1005.8h0M754.7 1005.1h0M755.2 1004.6h0M755.7 1005.3h0M756.2 1005.6h0M756.7 1005.7h0M757.2 1006.9h0M757.7 1006.5h0M758.1 1005.8h0M758.6 1005.8h0M759.1 1004.8h0M759.6 1004.9h0M760.1 1004.4h0M760.6 1004.6h0M761.1 1004.7h0M761.5 1003.8h0M762 1004h0M762.5 1005h0M763 1005.8h0M763.5 1006.6h0M764 1006.2h0M764.5 1006.3h0M765 1006.6h0M765.4 1006.2h0M765.9 1005.8h0M766.4 1005.7h0M766.9 1005.4h0M767.4 1005.5h0M767.9 1005.6h0M768.4 1006.5h0M768.9 1006.3h0M769.3 1006.5h0M769.8 1005.9h0M770.3 1005.2h0M770.8 1005.6h0M771.3 1005.8h0M771.8 1005.5h0M772.3 1004.6h0M772.8 1004.9h0M773.2 1004.6h0M773.7 1004.6h0M774.2 1005.1h0M774.7 1005h0M775.2 1005.8h0M775.7 1006h0M776.2 1006.8h0M776.6 1006.9h0M777.1 1006.4h0M777.6 1006.2h0M778.1 1005.2h0M778.6 1004.1h0M779.1 1004.6h0M779.6 1005.3h0M780.1 1006.1h0M780.5 1006.7h0M781 1007.7h0M781.5 1006.5h0M782 1006h0M782.5 1007h0M783 1005.9h0M783.5 1005.8h0M784 1005.9h0M784.4 1005.3h0M784.9 1004.7h0M785.4 1004.5h0M785.9 1005.9h0M786.4 1005.7h0M786.9 1005.4h0M787.4 1005.2h0M787.9 1005.3h0M788.3 1005.9h0M788.8 1006.7h0M789.3 1006.2h0M789.8 1005.9h0M790.3 1006h0M790.8 1005h0M791.3 1004.6h0M791.7 1004.8h0M792.2 1004.3h0M792.7 1005.7h0M793.2 1005.9h0M793.7 1005.7h0M794.2 1004.4h0M794.7 1004.8h0M795.2 1005.4h0M795.6 1006.4h0M796.1 1006.5h0M796.6 1005h0M797.1 1005h0M797.6 1005.1h0M798.1 1006.1h0M798.6 1005.4h0M799.1 1004.9h0M799.5 1005.6h0M800 1004.5h0M800.5 1004.6h0M801 1005.7h0M801.5 1006.8h0M802 1006.6h0M802.5 1007.3h0M803 1006.2h0M803.4 1006h0M803.9 1005.8h0M804.4 1005.9h0M804.9 1006.5h0M805.4 1005.2h0M805.9 1006.2h0M806.4 1005.5h0M806.9 1006.1h0M807.3 1006h0M807.8 1005.9h0M808.3 1006.1h0M808.8 1005.6h0M809.3 1006.2h0M809.8 1005.6h0M810.3 1005.5h0M810.7 1005.9h0M811.2 1006.1h0M811.7 1006.8h0M812.2 1004.9h0M812.7 1005h0M813.2 1005.2h0M813.7 1006h0M814.2 1007h0M814.6 1006.7h0M815.1 1005.7h0M815.6 1006h0M816.1 1007.2h0M816.6 1008.3h0M817.1 1006.6h0M817.6 1006.3h0M818.1 1007.6h0M818.5 1007.3h0M819 1006.9h0M819.5 1006.9h0M820 1006h0M820.5 1006.3h0M821 1005.8h0M821.5 1006.9h0M822 1005.8h0M822.4 1006.1h0M822.9 1006.4h0M823.4 1006.3h0M823.9 1007.1h0M824.4 1006.5h0M824.9 1006.7h0M825.4 1005.9h0M825.8 1006.2h0M826.3 1007h0M826.8 1006.2h0M827.3 1006.2h0M827.8 1007.1h0M828.3 1006.9h0M828.8 1006.9h0M829.3 1006.9h0M829.7 1005.8h0M830.2 1005.6h0M830.7 1005.8h0M831.2 1006.3h0M831.7 1005.5h0M832.2 1005.4h0M832.7 1006.2h0M833.2 1007h0M833.6 1007h0M834.1 1006.1h0M834.6 1007h0M835.1 1007h0M835.6 1007.9h0M836.1 1007.2h0M836.6 1006.6h0M837.1 1005.4h0M837.5 1006.7h0M838 1007.3h0M838.5 1007.1h0M839 1006.8h0M839.5 1008h0M840 1007.4h0M840.5 1007.3h0M841 1006.9h0M841.4 1007h0M841.9 1006.8h0M842.4 1007.3h0M842.9 1007.1h0M843.4 1007.9h0M843.9 1008h0M844.4 1007.8h0M844.8 1007.9h0M845.3 1007.8h0M845.8 1008.3h0M846.3 1007.3h0M846.8 1006.5h0M847.3 1006.8h0M847.8 1006.5h0M848.3 1005.8h0M848.7 1005.7h0M849.2 1005.5h0M849.7 1006h0M850.2 1005.7h0M850.7 1005.6h0M851.2 1006.3h0M851.7 1006.4h0M852.2 1005.9h0M852.6 1005.6h0M853.1 1004.8h0M853.6 1005h0M854.1 1005.6h0M854.6 1005.2h0M855.1 1005.4h0M855.6 1004.6h0M856.1 1005.2h0M856.5 1006h0M857 1005.3h0M857.5 1005.5h0M858 1005.4h0M1014.5 1005.6h0M1015 1005.4h0M1015.5 1006.7h0M1015.9 1006.3h0M1016.4 1006.9h0M1016.9 1006.6h0M1017.4 1006.2h0M1017.9 1006.1h0M1018.4 1005.3h0M1018.8 1005.4h0M1019.3 1005.8h0M1019.8 1006.7h0M1020.3 1005.9h0M1020.8 1006.3h0M1021.3 1006.6h0M1021.7 1006h0M1022.2 1007.3h0M1022.7 1006.4h0M1023.2 1005.3h0M1023.7 1004.8h0M1024.2 1004.9h0M1024.6 1005.4h0M1025.1 1005h0M1025.6 1004.6h0M1026.1 1004.5h0M1026.6 1005.9h0M1027.1 1005.9h0M1027.5 1005.9h0M1028 1005.8h0M1028.5 1005.6h0M1029 1005.1h0M1029.5 1005.7h0M1030 1006.2h0M1030.4 1006.2h0M1030.9 1004.7h0M1031.4 1004.6h0M1031.9 1004.6h0M1032.4 1004.5h0M1032.9 1004.6h0M1033.3 1004.8h0M1033.8 1005.4h0M1034.3 1006.1h0M1034.8 1004.9h0M1035.3 1006.2h0M1035.8 1006.1h0M1036.2 1005.8h0M1036.7 1006h0M1037.2 1005.4h0M1037.7 1005.7h0M1038.2 1005.7h0M1038.7 1005.2h0M1039.1 1005.3h0M1039.6 1005.2h0M1040.1 1005.5h0M1040.6 1005.6h0M1041.1 1004.9h0M1041.6 1005.5h0M1042 1005.2h0M1042.5 1005.3h0M1043 1005.4h0M1043.5 1004.2h0M1044 1005.3h0M1044.5 1004.9h0M1044.9 1004.2h0M1045.4 1005.8h0M1045.9 1005.7h0M1046.4 1006.5h0M1046.9 1005.8h0M1047.4 1004.9h0M1047.8 1005.5h0M1048.3 1005.7h0M1048.8 1005.4h0M1049.3 1004.8h0M1049.8 1003.6h0M1050.3 1002.1h0M1050.7 1002.1h0M1051.2 1002h0M1051.7 1002.8h0M1052.2 1003.5h0M1052.7 1004h0M1053.2 1004.1h0M1053.6 1005.3h0M1054.1 1006.1h0M1054.6 1006.8h0M1055.1 1007.3h0M1055.6 1006.5h0M1056.1 1005.1h0M1056.5 1004.8h0M1057 1004.6h0M1057.5 1005.4h0M1058 1004.5h0M1058.5 1004.9h0M1059 1005.2h0M1059.4 1006.1h0M1059.9 1006.7h0M1060.4 1006.1h0M1060.9 1005.7h0M1061.4 1005.5h0M1061.9 1004.9h0M1062.3 1005.6h0M1062.8 1005.5h0M1063.3 1004.2h0M1063.8 1005.5h0M1064.3 1004.3h0M1064.8 1004.4h0M1065.2 1004.8h0M1065.7 1005.3h0M1066.2 1005h0M1066.7 1006.1h0M1067.2 1005.8h0M1067.7 1005.5h0M1068.1 1005.8h0M1068.6 1004.7h0M1069.1 1004.5h0M1069.6 1004.2h0M1070.1 1003.5h0M1070.6 1002.7h0M1071 1004.1h0M1071.5 1004.6h0M1072 1004.3h0M1072.5 1004.6h0M1073 1004.5h0M1073.5 1005.8h0M1073.9 1005.8h0M1074.4 1006h0M1074.9 1004.6h0M1075.4 1005.1h0M1075.9 1005h0M1076.4 1005.4h0M1076.8 1005.3h0M1077.3 1005.6h0M1077.8 1005.5h0M1078.3 1005.2h0M1078.8 1005.2h0M1079.3 1004.7h0M1079.7 1005.9h0M1080.2 1005.2h0M1080.7 1005.6h0M1081.2 1006.1h0M1081.7 1005.6h0M1082.2 1006.1h0M1082.6 1005.2h0M1083.1 1005.5h0M1083.6 1005.4h0M1084.1 1004.1h0M1084.6 1004.2h0M1085.1 1004.1h0M1085.5 1004.2h0M1086 1004h0M1086.5 1003.4h0M1087 1003.9h0M1087.5 1003h0M1088 1003.3h0M1088.4 1002.6h0M1088.9 1003.3h0M1089.4 1003.2h0M1089.9 1004.1h0M1090.4 1004.4h0M1090.9 1004.9h0M1091.3 1004.2h0M1091.8 1002.6h0M1092.3 1002.4h0M1092.8 1002.6h0M1093.3 1003.2h0M1093.8 1004.1h0M1094.2 1003.7h0M1094.7 1003.6h0M1095.2 1003.7h0M1095.7 1004.3h0M1096.2 1003.2h0M1096.7 1004.1h0M1097.1 1003.8h0M1097.6 1004h0M1098.1 1003.6h0M1098.6 1004.4h0M1099.1 1004.5h0M1099.6 1004.9h0M1100 1005.2h0M1100.5 1005.1h0M1101 1005.9h0M1101.5 1005h0M1102 1005.8h0M1102.5 1004.7h0M1102.9 1005.6h0M1103.4 1004.6h0M1103.9 1004.7h0M1104.4 1004.4h0M1104.9 1004.4h0M1105.4 1004.2h0M1105.8 1004.5h0M1106.3 1004.7h0M1106.8 1006.4h0M1107.3 1006h0M1107.8 1007.5h0M1108.3 1007.8h0M1108.7 1008.7h0M1109.2 1007.5h0M1109.7 1007h0M1110.2 1006.1h0M1110.7 1006.2h0M1111.2 1005.6h0M1111.6 1005.1h0M1112.1 1005.7h0M1112.6 1005.5h0M1113.1 1006.5h0M1113.6 1007.1h0M1114.1 1006h0M1114.5 1005.3h0M1115 1005.1h0M1115.5 1005.2h0M1116 1004.7h0M1116.5 1005.6h0M1117 1005.6h0M1117.4 1006.5h0M1117.9 1006.5h0M1118.4 1006.4h0M1118.9 1006.2h0M1119.4 1005.9h0M1119.9 1005.9h0M1120.3 1005.5h0M1120.8 1005.2h0M1121.3 1005.3h0M1121.8 1004.9h0M1122.3 1004h0M1122.8 1004.6h0M1123.2 1005.3h0M1123.7 1005.6h0M1124.2 1004.3h0M1124.7 1003.8h0M1125.2 1004.4h0M1125.7 1004.7h0M1126.1 1003.6h0M1126.6 1003.8h0M1127.1 1004h0M1127.6 1005.2h0M1128.1 1005.9h0M1128.6 1006.3h0M1129 1006.5h0M1129.5 1005.4h0M1130 1005.7h0M1130.5 1006.4h0M1131 1006h0M1131.5 1005.6h0M1131.9 1006h0M1132.4 1006.3h0M1132.9 1005.7h0M1133.4 1006.7h0M1133.9 1006.3h0M1134.4 1006.1h0M1134.8 1006.8h0M1135.3 1006.2h0M1135.8 1005.4h0M1136.3 1005.7h0M1136.8 1005.7h0M1137.3 1005.6h0M1137.7 1004.3h0M1138.2 1003.9h0M1138.7 1003.8h0M1139.2 1004.2h0M1139.7 1004h0M1140.2 1004.5h0M1140.6 1004.4h0M1141.1 1004.2h0M1141.6 1005.1h0M1142.1 1005.6h0M1142.6 1005.6h0M1143.1 1003.7h0M1143.5 1001.9h0M1144 1000.5h0M1144.5 1001.1h0M1145 1000.5h0M1145.5 1001h0M1146 1000.7h0M1146.4 1001.6h0M1146.9 1002.5h0M1147.4 1002.9h0M1147.9 1004.2h0M1148.4 1005h0M1148.9 1003.9h0M1149.3 1003.4h0M1149.8 1003.1h0M1150.3 1003.3h0M1150.8 1003.6h0M1151.3 1003h0M1151.8 1004.1h0M1152.2 1004.7h0M1152.7 1003.8h0M1153.2 1003.8h0M1153.7 1004.2h0M1154.2 1004.1h0M1154.7 1005.4h0M1155.1 1004.7h0M1155.6 1005.4h0M1156.1 1004.6h0M1156.6 1005.3h0M1157.1 1004.7h0M1157.6 1006h0M1158 1005.2h0M1158.5 1006h0M1159 1006h0M1159.5 1005.5h0M1160 1004.7h0M1160.5 1004.1h0M1160.9 1005h0M1161.4 1005h0M1161.9 1005.6h0M1162.4 1005.6h0M1162.9 1005.9h0M1163.4 1006h0M1163.8 1005.8h0M1164.3 1005.8h0M1164.8 1005.5h0M1165.3 1005.5h0M1165.8 1006.4h0M1166.3 1006h0M1166.7 1006.7h0M1167.2 1006.5h0M1167.7 1006.5h0M1168.2 1006.3h0M1168.7 1005.8h0M1169.2 1005.6h0M1169.6 1005h0M1170.1 1005.7h0M1170.6 1005.8h0M1171.1 1005.9h0M1171.6 1004.8h0M1172.1 1005h0M1172.5 1005.6h0M1173 1006.2h0M1173.5 1005.9h0M1174 1006.2h0M1174.5 1006h0M1175 1005.5h0M1175.4 1004.4h0M1175.9 1004.4h0M1176.4 1004.4h0M1176.9 1003.4h0M1177.4 1004.7h0M1177.9 1005h0M1178.3 1004.2h0M1178.8 1004.2h0M1179.3 1005h0M1179.8 1005h0M1180.3 1004.5h0M1180.8 1005.4h0M1181.2 1005.1h0M1181.7 1007.2h0M1182.2 1006.9h0M1182.7 1005.8h0M1183.2 1004.4h0M1183.7 1005h0M1184.1 1005.5h0M1184.6 1005.6h0M1185.1 1004.3h0M1185.6 1004.2h0M1186.1 1005.5h0M1186.6 1005.4h0M1187 1004.5h0M1187.5 1005h0M1188 1005.5h0M1188.5 1004.9h0M1189 1004.4h0M1189.5 1004.2h0M1189.9 1004.1h0M1190.4 1004.4h0M1190.9 1003.9h0M1191.4 1003.9h0M1191.9 1003.8h0M1192.4 1004.1h0M1192.8 1004.8h0M1193.3 1003.8h0M1193.8 1004.8h0M1194.3 1004.8h0M1194.8 1004.6h0M1195.3 1004.1h0M1195.7 1004.6h0M1196.2 1004.3h0M1196.7 1005.4h0M1197.2 1005.5h0M1197.7 1006.7h0M1198.2 1006.7h0M1198.6 1007h0M1199.1 1007.2h0M1199.6 1006.6h0M1200.1 1006.3h0M1200.6 1006.4h0M1201.1 1006.7h0M1201.5 1006.3h0M1202 1007h0M1202.5 1007.6h0M1203 1007.3h0M1203.5 1007.2h0M1204 1007.1h0M1204.4 1007.8h0M1204.9 1007.4h0M1205.4 1006.7h0M1205.9 1006h0M1206.4 1006h0M1206.9 1007.2h0M1207.3 1005.9h0M1207.8 1006h0M1208.3 1007h0M1208.8 1006.1h0M1209.3 1005.8h0M1209.8 1006h0M1210.2 1006.6h0M1210.7 1006.3h0M1211.2 1006.9h0M1211.7 1007.8h0M1212.2 1007.1h0M1212.7 1007.4h0M1213.1 1008.2h0M1213.6 1006.7h0M1214.1 1006.5h0M1214.6 1006h0M1215.1 1005.1h0M1215.6 1005.1h0M1216 1004.3h0M1216.5 1004.2h0M1217 1004.5h0M1217.5 1005.1h0M1218 1007.1h0M1218.5 1007.6h0M1218.9 1007.9h0M1219.4 1007.7h0M1219.9 1007.5h0M1220.4 1008.7h0M1220.9 1007.4h0M1221.4 1006.9h0M1221.8 1006.7h0M1222.3 1005.7h0M1222.8 1005.7h0M1223.3 1006.6h0M1223.8 1006.3h0M1224.3 1005.7h0M1224.7 1005.7h0M1225.2 1007.2h0M1225.7 1007.5h0M1226.2 1006.5h0M1226.7 1005.8h0M1227.2 1005.3h0M1227.6 1005.1h0M1228.1 1006.5h0M1228.6 1005.9h0M1229.1 1005.1h0M1229.6 1005.4h0M1230.1 1005.7h0M1230.5 1005.3h0M1231 1004.8h0M1231.5 1004.9h0M1232 1005.5h0M1232.5 1004.5h0M1233 1005h0M1233.4 1005.7h0M1233.9 1005.8h0M1234.4 1005.8h0M1234.9 1005.2h0M1235.4 1005.1h0M1235.9 1004.8h0M1236.3 1004.9h0M1236.8 1004.8h0M1237.3 1005.1h0M1237.8 1005h0M1238.3 1004.8h0M1238.8 1004h0M1239.2 1002.9h0M1239.7 1004h0M1240.2 1004.3h0M1240.7 1003.9h0M1241.2 1003.6h0M1241.7 1002.9h0M1242.1 1002.6h0M1242.6 1003.5h0M1243.1 1003.5h0M1243.6 1003.6h0M1244.1 1003.2h0M1244.6 1005.2h0M1245 1005.9h0M1245.5 1006.3h0M1246 1006.2h0M1246.5 1006.8h0M1247 1006.7h0M1247.5 1005.8h0M1247.9 1004.4h0M1248.4 1003.7h0M1248.9 1003.3h0M1249.4 1002.6h0M1249.9 1002.9h0M1250.4 1003.8h0M1250.8 1004.4h0M1251.3 1005.9h0M1251.8 1006.5h0M1252.3 1007.3h0M1252.8 1007.3h0M1253.3 1007.4h0M1253.7 1006.3h0M1254.2 1007.3h0M1254.7 1007h0M1255.2 1006.7h0M1255.7 1006.7h0M1256.2 1007.4h0M1256.6 1007.6h0M1257.1 1006.3h0M1257.6 1006.8h0M1258.1 1006.4h0M1258.6 1006.5h0M1259.1 1005.1h0M1259.5 1005.6h0M1260 1006.6h0M1260.5 1006.7h0M1261 1006.9h0M1261.5 1007.9h0M1262 1005.8h0M1262.4 1005.1h0M1262.9 1005.4h0M1263.4 1004.8h0M1263.9 1003.7h0M1264.4 1004.7h0M1264.9 1005.1h0M1265.3 1005.2h0M1265.8 1006.1h0M1266.3 1005h0M1266.8 1006h0M1267.3 1003.8h0M1267.8 1003.3h0M1268.2 1004.3h0M1268.7 1004h0M1269.2 1004h0M1269.7 1004.2h0M1270.2 1004.3h0M1270.7 1005.8h0M1271.1 1006h0M1271.6 1006.1h0M1272.1 1006.3h0M1272.6 1006.1h0M1273.1 1006.9h0M1273.6 1006.5h0M1274 1006.7h0M1274.5 1007.5h0M1275 1007.6h0M1275.5 1007.2h0M1276 1007.2h0M1276.5 1006.7h0M1276.9 1006.4h0M1277.4 1007.2h0M1277.9 1006.6h0M1278.4 1007.4h0M1278.9 1007h0M1279.4 1007.8h0M1279.8 1007.4h0M1280.3 1006.2h0M1280.8 1006.1h0M1281.3 1006.5h0M1281.8 1006.6h0M1282.3 1006.5h0M1282.7 1005.7h0M1283.2 1006.2h0M1283.7 1006.1h0M1284.2 1004.8h0M1284.7 1004.3h0M1285.2 1004.6h0M1285.6 1005.1h0M1286.1 1003.2h0M1286.6 1003.2h0M1287.1 1003.7h0M1287.6 1004.4h0M1288.1 1003.7h0M1288.5 1003.9h0M1289 1005.1h0M1289.5 1005.3h0M1290 1005.2h0M1290.5 1006.1h0M1291 1006.6h0M1291.4 1005.9h0M1291.9 1006.8h0M1292.4 1005.7h0M1292.9 1005.7h0M1293.4 1005h0M1293.9 1005.9h0M1294.3 1006h0M1294.8 1006.2h0M1295.3 1005.8h0M1295.8 1004.8h0M1296.3 1003.7h0M1296.8 1004.1h0M1297.2 1003.5h0M1297.7 1004.2h0M1298.2 1004.4h0M1298.7 1004.3h0M1299.2 1005.1h0M1299.7 1006h0M1300.1 1004.8h0M1300.6 1004.5h0M1301.1 1004.7h0M1301.6 1005.1h0M1302.1 1004.1h0M1302.6 1004.3h0M1303 1004.5h0M1303.5 1004.3h0M1304 1003.7h0" stroke="#000" stroke-width="2.9" stroke-linecap="round" fill="none"/>
<path d="M162 955.6l1.9 3.3h-3.8z" fill="#fff" stroke="#ff0000" stroke-width="1.3" stroke-linejoin="round"/><path d="M163.5 955.6l1.9 3.3h-3.8z" fill="#fff" stroke="#ff0000" stroke-width="1.3" stroke-linejoin="round"/><path d="M165 955.6l1.9 3.3h-3.8z" fill="#fff" stroke="#ff0000" stroke-width="1.3" stroke-linejoin="round"/><path d="M166.5 955.6l1.9 3.3h-3.8z" fill="#fff" stroke="#ff0000" stroke-width="1.3" stroke-linejoin="round"/><path d="M168 955.6l1.9 3.3h-3.8z" fill="#fff" stroke="#ff0000" stroke-width="1.3" stroke-linejoin="round"/><path d="M169.5 955.6l1.9 3.3h-3.8z" fill="#fff" stroke="#ff0000" stroke-width="1.3" stroke-linejoin="round"/><path d="M171 955.6l1.9 3.3h-3.8z" fill="#fff" stroke="#ff0000" stroke-width="1.3" stroke-linejoin="round"/><path d="M172.5 955.6l1.9 3.3h-3.8z" fill="#fff" stroke="#ff0000" stroke-width="1.3" stroke-linejoin="round"/><path d="M174 955.6l1.9 3.3h-3.8z" fill="#fff" stroke="#ff0000" stroke-width="1.3" stroke-linejoin="round"/><path d="M175.5 955.6l1.9 3.3h-3.8z" fill="#fff" stroke="#ff0000" stroke-width="1.3" stroke-linejoin="round"/><path d="M177 955.6l1.9 3.3h-3.8z" fill="#fff" stroke="#ff0000" stroke-width="1.3" stroke-linejoin="round"/><path d="M856.3 955.6l1.9 3.3h-3.8z" fill="#fff" stroke="#ff0000" stroke-width="1.3" stroke-linejoin="round"/><path d="M857.8 955.6l1.9 3.3h-3.8z" fill="#fff" stroke="#ff0000" stroke-width="1.3" stroke-linejoin="round"/><path d="M859.3 955.6l1.9 3.3h-3.8z" fill="#fff" stroke="#ff0000" stroke-width="1.3" stroke-linejoin="round"/><path d="M860.8 955.6l1.9 3.3h-3.8z" fill="#fff" stroke="#ff0000" stroke-width="1.3" stroke-linejoin="round"/><path d="M862.3 955.6l1.9 3.3h-3.8z" fill="#fff" stroke="#ff0000" stroke-width="1.3" stroke-linejoin="round"/><path d="M863.8 955.6l1.9 3.3h-3.8z" fill="#fff" stroke="#ff0000" stroke-width="1.3" stroke-linejoin="round"/><path d="M865.3 955.6l1.9 3.3h-3.8z" fill="#fff" stroke="#ff0000" stroke-width="1.3" stroke-linejoin="round"/><path d="M866.8 955.6l1.9 3.3h-3.8z" fill="#fff" stroke="#ff0000" stroke-width="1.3" stroke-linejoin="round"/><path d="M868.3 955.6l1.9 3.3h-3.8z" fill="#fff" stroke="#ff0000" stroke-width="1.3" stroke-linejoin="round"/><path d="M869.8 955.6l1.9 3.3h-3.8z" fill="#fff" stroke="#ff0000" stroke-width="1.3" stroke-linejoin="round"/><path d="M871.3 955.6l1.9 3.3h-3.8z" fill="#fff" stroke="#ff0000" stroke-width="1.3" stroke-linejoin="round"/><path d="M872.8 955.6l1.9 3.3h-3.8z" fill="#fff" stroke="#ff0000" stroke-width="1.3" stroke-linejoin="round"/><path d="M874.3 955.6l1.9 3.3h-3.8z" fill="#fff" stroke="#ff0000" stroke-width="1.3" stroke-linejoin="round"/><path d="M875.8 955.6l1.9 3.3h-3.8z" fill="#fff" stroke="#ff0000" stroke-width="1.3" stroke-linejoin="round"/><path d="M877.3 955.6l1.9 3.3h-3.8z" fill="#fff" stroke="#ff0000" stroke-width="1.3" stroke-linejoin="round"/><path d="M878.8 955.6l1.9 3.3h-3.8z" fill="#fff" stroke="#ff0000" stroke-width="1.3" stroke-linejoin="round"/><path d="M880.3 955.6l1.9 3.3h-3.8z" fill="#fff" stroke="#ff0000" stroke-width="1.3" stroke-linejoin="round"/><path d="M881.8 955.6l1.9 3.3h-3.8z" fill="#fff" stroke="#ff0000" stroke-width="1.3" stroke-linejoin="round"/><path d="M883.3 955.6l1.9 3.3h-3.8z" fill="#fff" stroke="#ff0000" stroke-width="1.3" stroke-linejoin="round"/><path d="M884.8 955.6l1.9 3.3h-3.8z" fill="#fff" stroke="#ff0000" stroke-width="1.3" stroke-linejoin="round"/><path d="M886.3 955.6l1.9 3.3h-3.8z" fill="#fff" stroke="#ff0000" stroke-width="1.3" stroke-linejoin="round"/><path d="M887.8 955.6l1.9 3.3h-3.8z" fill="#fff" stroke="#ff0000" stroke-width="1.3" stroke-linejoin="round"/><path d="M889.3 955.6l1.9 3.3h-3.8z" fill="#fff" stroke="#ff0000" stroke-width="1.3" stroke-linejoin="round"/><path d="M890.8 955.6l1.9 3.3h-3.8z" fill="#fff" stroke="#ff0000" stroke-width="1.3" stroke-linejoin="round"/><path d="M892.3 955.6l1.9 3.3h-3.8z" fill="#fff" stroke="#ff0000" stroke-width="1.3" stroke-linejoin="round"/><path d="M893.8 955.6l1.9 3.3h-3.8z" fill="#fff" stroke="#ff0000" stroke-width="1.3" stroke-linejoin="round"/><path d="M895.3 955.6l1.9 3.3h-3.8z" fill="#fff" stroke="#ff0000" stroke-width="1.3" stroke-linejoin="round"/><path d="M896.8 955.6l1.9 3.3h-3.8z" fill="#fff" stroke="#ff0000" stroke-width="1.3" stroke-linejoin="round"/><path d="M898.3 955.6l1.9 3.3h-3.8z" fill="#fff" stroke="#ff0000" stroke-width="1.3" stroke-linejoin="round"/><path d="M899.8 955.6l1.9 3.3h-3.8z" fill="#fff" stroke="#ff0000" stroke-width="1.3" stroke-linejoin="round"/><path d="M901.3 955.6l1.9 3.3h-3.8z" fill="#fff" stroke="#ff0000" stroke-width="1.3" stroke-linejoin="round"/><path d="M902.8 955.6l1.9 3.3h-3.8z" fill="#fff" stroke="#ff0000" stroke-width="1.3" stroke-linejoin="round"/><path d="M904.3 955.6l1.9 3.3h-3.8z" fill="#fff" stroke="#ff0000" stroke-width="1.3" stroke-linejoin="round"/><path d="M905.8 955.6l1.9 3.3h-3.8z" fill="#fff" stroke="#ff0000" stroke-width="1.3" stroke-linejoin="round"/><path d="M907.3 955.6l1.9 3.3h-3.8z" fill="#fff" stroke="#ff0000" stroke-width="1.3" stroke-linejoin="round"/><path d="M908.8 955.6l1.9 3.3h-3.8z" fill="#fff" stroke="#ff0000" stroke-width="1.3" stroke-linejoin="round"/><path d="M910.3 955.6l1.9 3.3h-3.8z" fill="#fff" stroke="#ff0000" stroke-width="1.3" stroke-linejoin="round"/><path d="M911.8 955.6l1.9 3.3h-3.8z" fill="#fff" stroke="#ff0000" stroke-width="1.3" stroke-linejoin="round"/><path d="M913.3 955.6l1.9 3.3h-3.8z" fill="#fff" stroke="#ff0000" stroke-width="1.3" stroke-linejoin="round"/><path d="M914.8 955.6l1.9 3.3h-3.8z" fill="#fff" stroke="#ff0000" stroke-width="1.3" stroke-linejoin="round"/><path d="M916.3 955.6l1.9 3.3h-3.8z" fill="#fff" stroke="#ff0000" stroke-width="1.3" stroke-linejoin="round"/><path d="M917.8 955.6l1.9 3.3h-3.8z" fill="#fff" stroke="#ff0000" stroke-width="1.3" stroke-linejoin="round"/><path d="M919.3 955.6l1.9 3.3h-3.8z" fill="#fff" stroke="#ff0000" stroke-width="1.3" stroke-linejoin="round"/><path d="M920.8 955.6l1.9 3.3h-3.8z" fill="#fff" stroke="#ff0000" stroke-width="1.3" stroke-linejoin="round"/><path d="M922.3 955.6l1.9 3.3h-3.8z" fill="#fff" stroke="#ff0000" stroke-width="1.3" stroke-linejoin="round"/><path d="M923.8 955.6l1.9 3.3h-3.8z" fill="#fff" stroke="#ff0000" stroke-width="1.3" stroke-linejoin="round"/><path d="M925.3 955.6l1.9 3.3h-3.8z" fill="#fff" stroke="#ff0000" stroke-width="1.3" stroke-linejoin="round"/><path d="M926.8 955.6l1.9 3.3h-3.8z" fill="#fff" stroke="#ff0000" stroke-width="1.3" stroke-linejoin="round"/><path d="M928.3 955.6l1.9 3.3h-3.8z" fill="#fff" stroke="#ff0000" stroke-width="1.3" stroke-linejoin="round"/><path d="M929.8 955.6l1.9 3.3h-3.8z" fill="#fff" stroke="#ff0000" stroke-width="1.3" stroke-linejoin="round"/><path d="M931.3 955.6l1.9 3.3h-3.8z" fill="#fff" stroke="#ff0000" stroke-width="1.3" stroke-linejoin="round"/><path d="M932.8 955.6l1.9 3.3h-3.8z" fill="#fff" stroke="#ff0000" stroke-width="1.3" stroke-linejoin="round"/><path d="M934.3 955.6l1.9 3.3h-3.8z" fill="#fff" stroke="#ff0000" stroke-width="1.3" stroke-linejoin="round"/><path d="M935.8 955.6l1.9 3.3h-3.8z" fill="#fff" stroke="#ff0000" stroke-width="1.3" stroke-linejoin="round"/><path d="M937.3 955.6l1.9 3.3h-3.8z" fill="#fff" stroke="#ff0000" stroke-width="1.3" stroke-linejoin="round"/><path d="M938.8 955.6l1.9 3.3h-3.8z" fill="#fff" stroke="#ff0000" stroke-width="1.3" stroke-linejoin="round"/><path d="M940.3 955.6l1.9 3.3h-3.8z" fill="#fff" stroke="#ff0000" stroke-width="1.3" stroke-linejoin="round"/><path d="M941.8 955.6l1.9 3.3h-3.8z" fill="#fff" stroke="#ff0000" stroke-width="1.3" stroke-linejoin="round"/><path d="M943.3 955.6l1.9 3.3h-3.8z" fill="#fff" stroke="#ff0000" stroke-width="1.3" stroke-linejoin="round"/><path d="M944.8 955.6l1.9 3.3h-3.8z" fill="#fff" stroke="#ff0000" stroke-width="1.3" stroke-linejoin="round"/><path d="M946.3 955.6l1.9 3.3h-3.8z" fill="#fff" stroke="#ff0000" stroke-width="1.3" stroke-linejoin="round"/><path d="M947.8 955.6l1.9 3.3h-3.8z" fill="#fff" stroke="#ff0000" stroke-width="1.3" stroke-linejoin="round"/><path d="M949.3 955.6l1.9 3.3h-3.8z" fill="#fff" stroke="#ff0000" stroke-width="1.3" stroke-linejoin="round"/><path d="M950.8 955.6l1.9 3.3h-3.8z" fill="#fff" stroke="#ff0000" stroke-width="1.3" stroke-linejoin="round"/><path d="M952.3 955.6l1.9 3.3h-3.8z" fill="#fff" stroke="#ff0000" stroke-width="1.3" stroke-linejoin="round"/><path d="M953.8 955.6l1.9 3.3h-3.8z" fill="#fff" stroke="#ff0000" stroke-width="1.3" stroke-linejoin="round"/><path d="M955.3 955.6l1.9 3.3h-3.8z" fill="#fff" stroke="#ff0000" stroke-width="1.3" stroke-linejoin="round"/><path d="M956.8 955.6l1.9 3.3h-3.8z" fill="#fff" stroke="#ff0000" stroke-width="1.3" stroke-linejoin="round"/><path d="M958.3 955.6l1.9 3.3h-3.8z" fill="#fff" stroke="#ff0000" stroke-width="1.3" stroke-linejoin="round"/><path d="M959.8 955.6l1.9 3.3h-3.8z" fill="#fff" stroke="#ff0000" stroke-width="1.3" stroke-linejoin="round"/><path d="M961.3 955.6l1.9 3.3h-3.8z" fill="#fff" stroke="#ff0000" stroke-width="1.3" stroke-linejoin="round"/><path d="M962.8 955.6l1.9 3.3h-3.8z" fill="#fff" stroke="#ff0000" stroke-width="1.3" stroke-linejoin="round"/><path d="M964.3 955.6l1.9 3.3h-3.8z" fill="#fff" stroke="#ff0000" stroke-width="1.3" stroke-linejoin="round"/><path d="M965.8 955.6l1.9 3.3h-3.8z" fill="#fff" stroke="#ff0000" stroke-width="1.3" stroke-linejoin="round"/><path d="M967.3 955.6l1.9 3.3h-3.8z" fill="#fff" stroke="#ff0000" stroke-width="1.3" stroke-linejoin="round"/><path d="M968.8 955.6l1.9 3.3h-3.8z" fill="#fff" stroke="#ff0000" stroke-width="1.3" stroke-linejoin="round"/><path d="M970.3 955.6l1.9 3.3h-3.8z" fill="#fff" stroke="#ff0000" stroke-width="1.3" stroke-linejoin="round"/><path d="M971.8 955.6l1.9 3.3h-3.8z" fill="#fff" stroke="#ff0000" stroke-width="1.3" stroke-linejoin="round"/><path d="M973.3 955.6l1.9 3.3h-3.8z" fill="#fff" stroke="#ff0000" stroke-width="1.3" stroke-linejoin="round"/><path d="M974.8 955.6l1.9 3.3h-3.8z" fill="#fff" stroke="#ff0000" stroke-width="1.3" stroke-linejoin="round"/><path d="M976.3 955.6l1.9 3.3h-3.8z" fill="#fff" stroke="#ff0000" stroke-width="1.3" stroke-linejoin="round"/><path d="M977.8 955.6l1.9 3.3h-3.8z" fill="#fff" stroke="#ff0000" stroke-width="1.3" stroke-linejoin="round"/><path d="M979.3 955.6l1.9 3.3h-3.8z" fill="#fff" stroke="#ff0000" stroke-width="1.3" stroke-linejoin="round"/><path d="M980.8 955.6l1.9 3.3h-3.8z" fill="#fff" stroke="#ff0000" stroke-width="1.3" stroke-linejoin="round"/><path d="M982.3 955.6l1.9 3.3h-3.8z" fill="#fff" stroke="#ff0000" stroke-width="1.3" stroke-linejoin="round"/><path d="M983.8 955.6l1.9 3.3h-3.8z" fill="#fff" stroke="#ff0000" stroke-width="1.3" stroke-linejoin="round"/><path d="M985.3 955.6l1.9 3.3h-3.8z" fill="#fff" stroke="#ff0000" stroke-width="1.3" stroke-linejoin="round"/><path d="M986.8 955.6l1.9 3.3h-3.8z" fill="#fff" stroke="#ff0000" stroke-width="1.3" stroke-linejoin="round"/><path d="M988.3 955.6l1.9 3.3h-3.8z" fill="#fff" stroke="#ff0000" stroke-width="1.3" stroke-linejoin="round"/><path d="M989.8 955.6l1.9 3.3h-3.8z" fill="#fff" stroke="#ff0000" stroke-width="1.3" stroke-linejoin="round"/><path d="M991.3 955.6l1.9 3.3h-3.8z" fill="#fff" stroke="#ff0000" stroke-width="1.3" stroke-linejoin="round"/><path d="M992.8 955.6l1.9 3.3h-3.8z" fill="#fff" stroke="#ff0000" stroke-width="1.3" stroke-linejoin="round"/><path d="M994.3 955.6l1.9 3.3h-3.8z" fill="#fff" stroke="#ff0000" stroke-width="1.3" stroke-linejoin="round"/><path d="M995.8 955.6l1.9 3.3h-3.8z" fill="#fff" stroke="#ff0000" stroke-width="1.3" stroke-linejoin="round"/><path d="M997.3 955.6l1.9 3.3h-3.8z" fill="#fff" stroke="#ff0000" stroke-width="1.3" stroke-linejoin="round"/><path d="M998.8 955.6l1.9 3.3h-3.8z" fill="#fff" stroke="#ff0000" stroke-width="1.3" stroke-linejoin="round"/><path d="M1000.3 955.6l1.9 3.3h-3.8z" fill="#fff" stroke="#ff0000" stroke-width="1.3" stroke-linejoin="round"/><path d="M1001.8 955.6l1.9 3.3h-3.8z" fill="#fff" stroke="#ff0000" stroke-width="1.3" stroke-linejoin="round"/><path d="M1003.3 955.6l1.9 3.3h-3.8z" fill="#fff" stroke="#ff0000" stroke-width="1.3" stroke-linejoin="round"/><path d="M1004.8 955.6l1.9 3.3h-3.8z" fill="#fff" stroke="#ff0000" stroke-width="1.3" stroke-linejoin="round"/><path d="M1006.3 955.6l1.9 3.3h-3.8z" fill="#fff" stroke="#ff0000" stroke-width="1.3" stroke-linejoin="round"/><path d="M1007.8 955.6l1.9 3.3h-3.8z" fill="#fff" stroke="#ff0000" stroke-width="1.3" stroke-linejoin="round"/><path d="M1009.3 955.6l1.9 3.3h-3.8z" fill="#fff" stroke="#ff0000" stroke-width="1.3" stroke-linejoin="round"/><path d="M1010.8 955.6l1.9 3.3h-3.8z" fill="#fff" stroke="#ff0000" stroke-width="1.3" stroke-linejoin="round"/><path d="M1012.3 955.6l1.9 3.3h-3.8z" fill="#fff" stroke="#ff0000" stroke-width="1.3" stroke-linejoin="round"/><path d="M1013.8 955.6l1.9 3.3h-3.8z" fill="#fff" stroke="#ff0000" stroke-width="1.3" stroke-linejoin="round"/><path d="M204.3 955.6l1.9 3.3h-3.8z" fill="#fff" stroke="#ff0000" stroke-width="1.3" stroke-linejoin="round"/><path d="M214.4 955.6l1.9 3.3h-3.8z" fill="#fff" stroke="#ff0000" stroke-width="1.3" stroke-linejoin="round"/><path d="M238.3 955.6l1.9 3.3h-3.8z" fill="#fff" stroke="#ff0000" stroke-width="1.3" stroke-linejoin="round"/><path d="M545.4 955.6l1.9 3.3h-3.8z" fill="#fff" stroke="#ff0000" stroke-width="1.3" stroke-linejoin="round"/><path d="M578.3 955.6l1.9 3.3h-3.8z" fill="#fff" stroke="#ff0000" stroke-width="1.3" stroke-linejoin="round"/>
<path d="M162.1 1011.4V725.5" stroke="#800080" stroke-width="2.08" stroke-dasharray="2.08 3.44" stroke-dashoffset="-0.45"/><path d="M1303 1011.4V725.5" stroke="#800080" stroke-width="2.08" stroke-dasharray="2.08 3.44" stroke-dashoffset="-0.45"/>
<rect x="105.5" y="954.4" width="1380" height="57" fill="none" stroke="#000" stroke-width="1.1"/>
<path d="M162.5 1011.4v4.86" stroke="#000" stroke-width="1.1"/><text x="158.53" y="1031.70" font-size="13.89" textLength="8.15" lengthAdjust="spacingAndGlyphs">0</text><path d="M356.5 1011.4v4.86" stroke="#000" stroke-width="1.1"/><text x="343.22" y="1031.70" font-size="13.89" textLength="25.74" lengthAdjust="spacingAndGlyphs">500</text><path d="M549.5 1011.4v4.86" stroke="#000" stroke-width="1.1"/><text x="531.96" y="1031.70" font-size="13.89" textLength="34.71" lengthAdjust="spacingAndGlyphs">1000</text><path d="M743.5 1011.4v4.86" stroke="#000" stroke-width="1.1"/><text x="725.46" y="1031.70" font-size="13.89" textLength="34.71" lengthAdjust="spacingAndGlyphs">1500</text><path d="M936.5 1011.4v4.86" stroke="#000" stroke-width="1.1"/><text x="919.11" y="1031.70" font-size="13.89" textLength="34.82" lengthAdjust="spacingAndGlyphs">2000</text><path d="M1130.5 1011.4v4.86" stroke="#000" stroke-width="1.1"/><text x="1112.61" y="1031.70" font-size="13.89" textLength="34.82" lengthAdjust="spacingAndGlyphs">2500</text><path d="M1323.5 1011.4v4.86" stroke="#000" stroke-width="1.1"/><text x="1306.32" y="1031.70" font-size="13.89" textLength="34.58" lengthAdjust="spacingAndGlyphs">3000</text>
<path d="M105.5 1009.5h-4.86" stroke="#000" stroke-width="1.1"/>
<text x="88.43" y="1014.25" font-size="13.89" textLength="8.15" lengthAdjust="spacingAndGlyphs">0</text>
<path d="M105.5 983.5h-4.86" stroke="#000" stroke-width="1.1"/>
<text x="87.89" y="988.25" font-size="13.89" textLength="7.69" lengthAdjust="spacingAndGlyphs">5</text>
<path d="M105.5 957.5h-4.86" stroke="#000" stroke-width="1.1"/>
<text x="77.82" y="962.25" font-size="13.89" textLength="16.98" lengthAdjust="spacingAndGlyphs">10</text>
<path d="M105.5 996.5h-2.78" stroke="#000" stroke-width="0.8"/>
<path d="M105.5 970.5h-2.78" stroke="#000" stroke-width="0.8"/>
<text x="0" y="0" font-size="13.89" text-anchor="middle" transform="translate(68.5 983.8) rotate(-90)">dr</text>
</svg></body></html>
